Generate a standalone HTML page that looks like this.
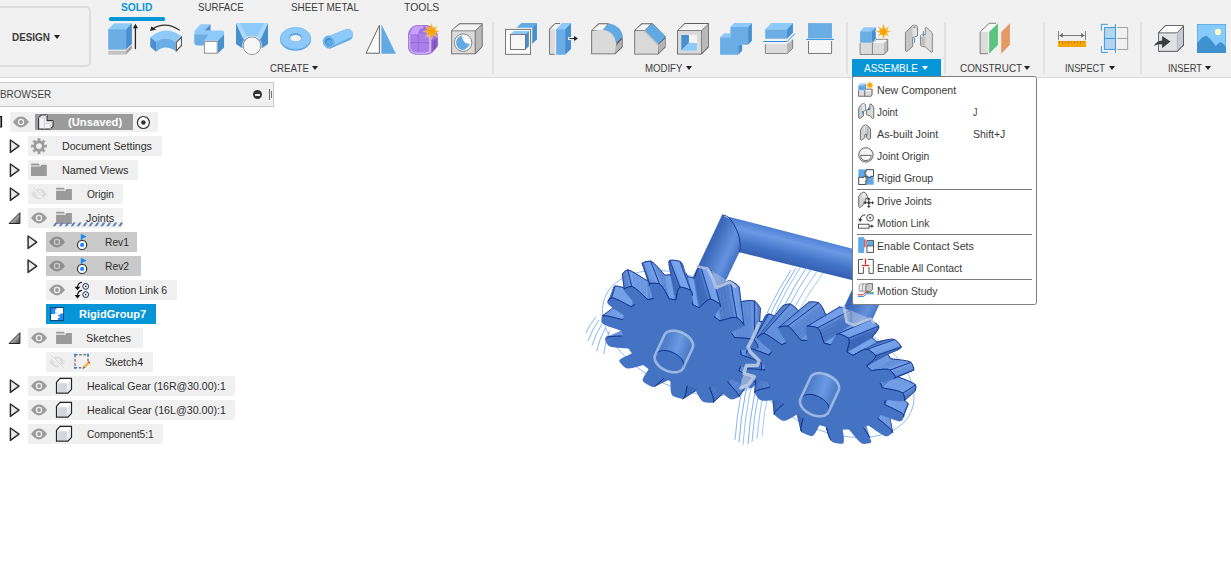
<!DOCTYPE html>
<html>
<head>
<meta charset="utf-8">
<title>Fusion</title>
<style>
html,body{margin:0;padding:0;}
body{width:1231px;height:567px;overflow:hidden;background:#fff;position:relative;font-family:"Liberation Sans",sans-serif;color:#333;}
.abs{position:absolute;}
#toolbar{position:absolute;left:0;top:0;width:1231px;height:78px;background:#f1f1f1;border-bottom:1px solid #d8d8d8;box-sizing:border-box;}
.t{position:absolute;white-space:nowrap;font-size:11px;line-height:12px;color:#3c3c3c;transform-origin:0 0;}
.tab{position:absolute;white-space:nowrap;font-size:11px;line-height:12px;color:#3c3c3c;transform-origin:0 0;}
.sep{position:absolute;top:22px;width:2px;height:52px;background:#e2e2e2;}
.arr{position:absolute;width:0;height:0;border-left:3px solid transparent;border-right:3px solid transparent;border-top:4px solid #222;}
.row{position:absolute;height:20px;background:#f0f0f0;}
.rt{position:absolute;white-space:nowrap;font-size:11px;line-height:20px;color:#2d2d2d;transform-origin:0 50%;}
.mi{position:absolute;left:877px;white-space:nowrap;font-size:11px;line-height:14px;color:#3a3a3a;transform-origin:0 50%;}
.msep{position:absolute;left:857px;width:175px;height:1px;background:#7a7a7a;}
svg{position:absolute;overflow:visible;}
/*FIT*/
#tDesign{transform:scaleX(0.9007);}
#tabSolid{transform:scaleX(0.9309);}
#tabSurface{transform:scaleX(0.8814);}
#tabSheet{transform:scaleX(0.9006);}
#tabTools{transform:scaleX(0.9489);}
#tCreate{transform:scaleX(0.8879);}
#tModify{transform:scaleX(0.8745);}
#tAssemble{transform:scaleX(0.9107);}
#tConstruct{transform:scaleX(0.8992);}
#tInspect{transform:scaleX(0.8352);}
#tInsert{transform:scaleX(0.8472);}
#tBrowser{transform:scaleX(0.9000);}
#rUnsaved{transform:scaleX(1.0191);}
#rDoc{transform:scaleX(0.9673);}
#rNamed{transform:scaleX(0.9814);}
#rOrigin{transform:scaleX(0.9203);}
#rJoints{transform:scaleX(0.9809);}
#rRev1{transform:scaleX(0.9304);}
#rRev2{transform:scaleX(0.9346);}
#rMotion{transform:scaleX(0.9490);}
#rRigid{transform:scaleX(1.0074);}
#rSketches{transform:scaleX(0.9945);}
#rSketch4{transform:scaleX(0.9561);}
#rGearR{transform:scaleX(0.9567);}
#rGearL{transform:scaleX(0.9696);}
#rComp{transform:scaleX(0.9229);}
#mNew{transform:scaleX(0.9667);}
#mJoint{transform:scaleX(0.8967);}
#mAsb{transform:scaleX(0.9718);}
#mJO{transform:scaleX(0.9381);}
#mRG{transform:scaleX(0.9557);}
#mDJ{transform:scaleX(0.9536);}
#mML{transform:scaleX(0.9314);}
#mECS{transform:scaleX(0.9661);}
#mEAC{transform:scaleX(0.9479);}
#mMS{transform:scaleX(0.9412);}
#mKJ{transform:scaleX(0.8000);}
#mKSJ{transform:scaleX(0.9517);}
/*ENDFIT*/
</style>
</head>
<body>
<!-- ===== MODEL ===== -->
<div id="model"><!--MODEL-->
<svg width="1231" height="567" viewBox="0 0 1231 567" style="left:0;top:0;">
<defs>
<linearGradient id="gStub" gradientUnits="objectBoundingBox" x1="0" y1="0.3" x2="1" y2="0.7">
<stop offset="0" stop-color="#3d6bbd"/><stop offset="0.55" stop-color="#6a9ae2"/><stop offset="1" stop-color="#3b68b8"/></linearGradient>
<linearGradient id="gShaftL" gradientUnits="userSpaceOnUse" x1="690" y1="290" x2="718" y2="303">
<stop offset="0" stop-color="#3a67b9"/><stop offset="0.6" stop-color="#6393df"/><stop offset="1" stop-color="#3d6bbf"/></linearGradient>
<linearGradient id="gShaftR" gradientUnits="userSpaceOnUse" x1="838" y1="330" x2="866" y2="343">
<stop offset="0" stop-color="#3a67b9"/><stop offset="0.6" stop-color="#6393df"/><stop offset="1" stop-color="#3d6bbf"/></linearGradient>
<linearGradient id="gBar" gradientUnits="userSpaceOnUse" x1="800" y1="233" x2="792" y2="266">
<stop offset="0" stop-color="#4a7ad0"/><stop offset="0.3" stop-color="#6a9ae3"/><stop offset="0.7" stop-color="#4171c6"/><stop offset="1" stop-color="#345fb0"/></linearGradient>
</defs>
<polygon points="664.9,336.5 722.0,215.0 732.4,220.6 739.3,234.4 740.9,245.9 739.3,252.3 693.1,349.5" fill="url(#gShaftL)"/>
<path d="M722.0,215.0 L891.4,258.8 L894.7,290.5 L739.3,252.3 C741.5,246.0 740.0,232.0 731.0,220.0 C728.0,216.5 725.0,215.0 722.0,215.0Z" fill="url(#gBar)"/>
<path d="M739.3,252.3 C741.5,246.0 740.0,232.0 731.0,220.0 C728.0,216.5 725.0,215.0 722.0,215.0" fill="none" stroke="#12388f" stroke-width="1"/>
<polygon points="810.9,378.5 859.3,274.1 887.4,287.2 839.1,391.5" fill="url(#gShaftR)"/>
<polygon points="767.2,370.4 769.0,365.9 770.0,361.2 770.5,356.2 770.3,351.1 769.5,345.8 768.0,340.4 766.0,334.9 763.3,329.5 760.0,324.1 756.2,318.7 751.8,313.5 747.0,308.4 741.7,303.4 735.9,298.8 729.8,294.3 723.4,290.2 716.7,286.4 709.7,282.9 702.6,279.9 695.3,277.2 688.0,275.0 680.7,273.2 673.4,271.8 666.2,270.9 659.2,270.5 652.4,270.6 645.8,271.1 639.6,272.1 633.7,273.6 628.2,275.6 623.1,277.9 618.6,280.7 614.5,283.9 611.0,287.4 608.1,291.3 605.8,295.6 604.0,300.1 603.0,304.8 602.5,309.8 602.7,314.9 603.5,320.2 605.0,325.6 607.0,331.1 609.7,336.5 613.0,341.9 616.8,347.3 621.2,352.5 626.0,357.6 631.3,362.6 637.1,367.2 643.2,371.7 649.6,375.8 656.3,379.6 663.3,383.1 670.4,386.1 677.7,388.8 685.0,391.0 692.3,392.8 699.6,394.2 706.8,395.1 713.8,395.5 720.6,395.4 727.2,394.9 733.4,393.9 739.3,392.4 744.8,390.4 749.9,388.1 754.4,385.3 758.5,382.1 762.0,378.6 764.9,374.7 767.2,370.4" fill="none" stroke="#6fa8f7" stroke-width="0.8"/>
<polygon points="910.7,412.4 912.5,407.9 913.5,403.2 914.0,398.2 913.8,393.1 913.0,387.8 911.5,382.4 909.5,376.9 906.8,371.5 903.5,366.1 899.7,360.7 895.3,355.5 890.5,350.4 885.2,345.4 879.4,340.8 873.3,336.3 866.9,332.2 860.2,328.4 853.2,324.9 846.1,321.9 838.8,319.2 831.5,317.0 824.2,315.2 816.9,313.8 809.7,312.9 802.7,312.5 795.9,312.6 789.3,313.1 783.1,314.1 777.2,315.6 771.7,317.6 766.6,319.9 762.1,322.7 758.0,325.9 754.5,329.4 751.6,333.3 749.3,337.6 747.5,342.1 746.5,346.8 746.0,351.8 746.2,356.9 747.0,362.2 748.5,367.6 750.5,373.1 753.2,378.5 756.5,383.9 760.3,389.3 764.7,394.5 769.5,399.6 774.8,404.6 780.6,409.2 786.7,413.7 793.1,417.8 799.8,421.6 806.8,425.1 813.9,428.1 821.2,430.8 828.5,433.0 835.8,434.8 843.1,436.2 850.3,437.1 857.3,437.5 864.1,437.4 870.7,436.9 876.9,435.9 882.8,434.4 888.3,432.4 893.4,430.1 897.9,427.3 902.0,424.1 905.5,420.6 908.4,416.7 910.7,412.4" fill="none" stroke="#6fa8f7" stroke-width="0.8"/>
<path d="M791.0,270.0 Q742.0,345 735.0,440.0" fill="none" stroke="#5b9bf5" stroke-width="0.9" opacity="0.8"/>
<path d="M795.8,268.4 Q746.0,345 739.0,442.4" fill="none" stroke="#5b9bf5" stroke-width="0.9" opacity="0.9"/>
<path d="M800.6,266.8 Q750.0,345 743.0,444.8" fill="none" stroke="#5b9bf5" stroke-width="0.9" opacity="0.7"/>
<path d="M806.6,267.2 Q755.0,345 748.0,444.2" fill="none" stroke="#5b9bf5" stroke-width="0.9" opacity="0.9"/>
<path d="M811.4,268.8 Q759.0,345 752.0,441.8" fill="none" stroke="#5b9bf5" stroke-width="0.9" opacity="0.8"/>
<path d="M817.4,270.8 Q764.0,345 757.0,438.8" fill="none" stroke="#5b9bf5" stroke-width="0.9" opacity="0.7"/>
<path d="M823.4,272.8 Q769.0,345 762.0,435.8" fill="none" stroke="#5b9bf5" stroke-width="0.9" opacity="0.6"/>
<path d="M599,320 Q592.0,329.5 588,341" fill="none" stroke="#5b9bf5" stroke-width="0.9" opacity="0.85"/>
<path d="M602,324 Q595.5,333.8 592,345.5" fill="none" stroke="#5b9bf5" stroke-width="0.9" opacity="0.85"/>
<path d="M605.4,328 Q599.5,338.5 596.7,351" fill="none" stroke="#5b9bf5" stroke-width="0.9" opacity="0.85"/>
<path d="M609.4,331 Q605.1,341.5 603.8,354" fill="none" stroke="#5b9bf5" stroke-width="0.9" opacity="0.85"/>
<path d="M596,317 Q589.5,324.0 586,333" fill="none" stroke="#5b9bf5" stroke-width="0.9" opacity="0.85"/>
<polygon points="654.5,386.4 657.0,384.6 687.2,369.1 685.7,371.4" fill="#3965b6" stroke="#3965b6" stroke-width="0.6"/>
<path d="M654.5,386.4L657.0,384.6M687.2,369.1L685.7,371.4" stroke="#0c2f8a" stroke-width="0.9" fill="none" stroke-linecap="round"/>
<polygon points="682.9,398.8 684.3,397.6 715.8,377.0 715.0,378.7" fill="#3965b6" stroke="#3965b6" stroke-width="0.6"/>
<path d="M682.9,398.8L684.3,397.6M715.8,377.0L715.0,378.7" stroke="#0c2f8a" stroke-width="0.9" fill="none" stroke-linecap="round"/>
<path d="M682.9,398.8L715.0,378.7" stroke="#0c2f8a" stroke-width="0.8" fill="none"/>
<polygon points="657.0,384.6 659.5,382.3 688.5,366.1 687.2,369.1" fill="#3965b6" stroke="#3965b6" stroke-width="0.6"/>
<path d="M657.0,384.6L659.5,382.3M688.5,366.1L687.2,369.1" stroke="#0c2f8a" stroke-width="0.9" fill="none" stroke-linecap="round"/>
<polygon points="684.3,397.6 685.3,395.0 715.6,374.0 715.8,377.0" fill="#3965b6" stroke="#3965b6" stroke-width="0.6"/>
<path d="M684.3,397.6L685.3,395.0M715.6,374.0L715.8,377.0" stroke="#0c2f8a" stroke-width="0.9" fill="none" stroke-linecap="round"/>
<polygon points="659.5,382.3 661.7,380.1 689.5,363.2 688.5,366.1" fill="#3965b6" stroke="#3965b6" stroke-width="0.6"/>
<path d="M659.5,382.3L661.7,380.1M689.5,363.2L688.5,366.1" stroke="#0c2f8a" stroke-width="0.9" fill="none" stroke-linecap="round"/>
<polygon points="685.3,395.0 686.0,391.7 715.0,370.4 715.6,374.0" fill="#3965b6" stroke="#3965b6" stroke-width="0.6"/>
<path d="M685.3,395.0L686.0,391.7M715.0,370.4L715.6,374.0" stroke="#0c2f8a" stroke-width="0.9" fill="none" stroke-linecap="round"/>
<polygon points="661.7,380.1 663.2,378.6 690.3,361.3 689.5,363.2" fill="#3965b6" stroke="#3965b6" stroke-width="0.6"/>
<path d="M661.7,380.1L663.2,378.6M690.3,361.3L689.5,363.2" stroke="#0c2f8a" stroke-width="0.9" fill="none" stroke-linecap="round"/>
<polygon points="686.0,391.7 686.5,388.7 714.2,367.1 715.0,370.4" fill="#3a66b7" stroke="#3a66b7" stroke-width="0.6"/>
<path d="M686.0,391.7L686.5,388.7M714.2,367.1L715.0,370.4" stroke="#0c2f8a" stroke-width="0.9" fill="none" stroke-linecap="round"/>
<polygon points="686.5,388.7 686.8,386.7 713.7,364.9 714.2,367.1" fill="#3a66b7" stroke="#3a66b7" stroke-width="0.6"/>
<path d="M686.5,388.7L686.8,386.7M713.7,364.9L714.2,367.1" stroke="#0c2f8a" stroke-width="0.9" fill="none" stroke-linecap="round"/>
<polygon points="686.8,386.7 687.5,386.1 714.0,364.1 713.7,364.9" fill="#3965b6" stroke="#3965b6" stroke-width="0.6"/>
<path d="M686.8,386.7L687.5,386.1M714.0,364.1L713.7,364.9" stroke="#0c2f8a" stroke-width="0.9" fill="none" stroke-linecap="round"/>
<polygon points="713.3,402.3 713.7,400.5 742.2,373.9 742.5,375.9" fill="#3965b6" stroke="#3965b6" stroke-width="0.6"/>
<path d="M713.3,402.3L713.7,400.5M742.2,373.9L742.5,375.9" stroke="#0c2f8a" stroke-width="0.9" fill="none" stroke-linecap="round"/>
<path d="M713.3,402.3L742.5,375.9" stroke="#0c2f8a" stroke-width="0.8" fill="none"/>
<polygon points="713.7,400.5 713.1,397.4 740.5,370.7 742.2,373.9" fill="#436fbe" stroke="#436fbe" stroke-width="0.6"/>
<path d="M713.7,400.5L713.1,397.4M740.5,370.7L742.2,373.9" stroke="#0c2f8a" stroke-width="0.9" fill="none" stroke-linecap="round"/>
<polygon points="610.3,336.6 606.7,337.2 625.6,329.2 628.6,327.8" fill="#608cd7" stroke="#608cd7" stroke-width="0.6"/>
<path d="M610.3,336.6L606.7,337.2M625.6,329.2L628.6,327.8" stroke="#0c2f8a" stroke-width="0.9" fill="none" stroke-linecap="round"/>
<polygon points="713.1,397.4 711.8,393.7 738.0,367.1 740.5,370.7" fill="#4773c2" stroke="#4773c2" stroke-width="0.6"/>
<path d="M713.1,397.4L711.8,393.7M738.0,367.1L740.5,370.7" stroke="#0c2f8a" stroke-width="0.9" fill="none" stroke-linecap="round"/>
<polygon points="614.9,336.3 610.3,336.6 628.6,327.8 632.3,326.6" fill="#6490db" stroke="#6490db" stroke-width="0.6"/>
<path d="M614.9,336.3L610.3,336.6M628.6,327.8L632.3,326.6" stroke="#0c2f8a" stroke-width="0.9" fill="none" stroke-linecap="round"/>
<polygon points="711.8,393.7 710.5,390.3 735.6,363.8 738.0,367.1" fill="#4975c4" stroke="#4975c4" stroke-width="0.6"/>
<path d="M711.8,393.7L710.5,390.3M735.6,363.8L738.0,367.1" stroke="#0c2f8a" stroke-width="0.9" fill="none" stroke-linecap="round"/>
<polygon points="619.0,336.2 614.9,336.3 632.3,326.6 635.9,325.5" fill="#6692dd" stroke="#6692dd" stroke-width="0.6"/>
<path d="M619.0,336.2L614.9,336.3M632.3,326.6L635.9,325.5" stroke="#0c2f8a" stroke-width="0.9" fill="none" stroke-linecap="round"/>
<polygon points="710.5,390.3 709.7,388.0 734.0,361.5 735.6,363.8" fill="#4975c4" stroke="#4975c4" stroke-width="0.6"/>
<path d="M710.5,390.3L709.7,388.0M734.0,361.5L735.6,363.8" stroke="#0c2f8a" stroke-width="0.9" fill="none" stroke-linecap="round"/>
<polygon points="709.7,388.0 709.8,387.2 733.8,360.6 734.0,361.5" fill="#3b67b8" stroke="#3b67b8" stroke-width="0.6"/>
<path d="M709.7,388.0L709.8,387.2M733.8,360.6L734.0,361.5" stroke="#0c2f8a" stroke-width="0.9" fill="none" stroke-linecap="round"/>
<polygon points="621.9,336.1 619.0,336.2 635.9,325.5 638.3,324.8" fill="#6692dc" stroke="#6692dc" stroke-width="0.6"/>
<path d="M621.9,336.1L619.0,336.2M635.9,325.5L638.3,324.8" stroke="#0c2f8a" stroke-width="0.9" fill="none" stroke-linecap="round"/>
<polygon points="738.8,396.7 738.2,394.6 761.1,362.4 762.4,364.5" fill="#4773c2" stroke="#4773c2" stroke-width="0.6"/>
<path d="M738.8,396.7L738.2,394.6M761.1,362.4L762.4,364.5" stroke="#0c2f8a" stroke-width="0.9" fill="none" stroke-linecap="round"/>
<path d="M738.8,396.7L762.4,364.5" stroke="#0c2f8a" stroke-width="0.8" fill="none"/>
<polygon points="738.2,394.6 736.0,391.5 758.0,359.6 761.1,362.4" fill="#537fcc" stroke="#537fcc" stroke-width="0.6"/>
<path d="M738.2,394.6L736.0,391.5M758.0,359.6L761.1,362.4" stroke="#0c2f8a" stroke-width="0.9" fill="none" stroke-linecap="round"/>
<polygon points="604.8,315.7 602.3,315.9 613.6,307.5 615.7,306.7" fill="#638fda" stroke="#638fda" stroke-width="0.6"/>
<path d="M604.8,315.7L602.3,315.9M613.6,307.5L615.7,306.7" stroke="#0c2f8a" stroke-width="0.9" fill="none" stroke-linecap="round"/>
<path d="M602.3,315.9L613.6,307.5" stroke="#0c2f8a" stroke-width="0.8" fill="none"/>
<polygon points="736.0,391.5 733.0,388.0 754.1,356.5 758.0,359.6" fill="#5783d0" stroke="#5783d0" stroke-width="0.6"/>
<path d="M736.0,391.5L733.0,388.0M754.1,356.5L758.0,359.6" stroke="#0c2f8a" stroke-width="0.9" fill="none" stroke-linecap="round"/>
<polygon points="609.0,316.4 604.8,315.7 615.7,306.7 619.6,306.5" fill="#6d99e3" stroke="#6d99e3" stroke-width="0.6"/>
<path d="M609.0,316.4L604.8,315.7M615.7,306.7L619.6,306.5" stroke="#0c2f8a" stroke-width="0.9" fill="none" stroke-linecap="round"/>
<polygon points="733.0,388.0 730.1,384.8 750.4,353.7 754.1,356.5" fill="#5985d2" stroke="#5985d2" stroke-width="0.6"/>
<path d="M733.0,388.0L730.1,384.8M750.4,353.7L754.1,356.5" stroke="#0c2f8a" stroke-width="0.9" fill="none" stroke-linecap="round"/>
<polygon points="613.9,317.5 609.0,316.4 619.6,306.5 624.3,306.7" fill="#709ce5" stroke="#709ce5" stroke-width="0.6"/>
<path d="M613.9,317.5L609.0,316.4M619.6,306.5L624.3,306.7" stroke="#0c2f8a" stroke-width="0.9" fill="none" stroke-linecap="round"/>
<polygon points="730.1,384.8 728.2,382.6 747.9,351.7 750.4,353.7" fill="#5a86d2" stroke="#5a86d2" stroke-width="0.6"/>
<path d="M730.1,384.8L728.2,382.6M747.9,351.7L750.4,353.7" stroke="#0c2f8a" stroke-width="0.9" fill="none" stroke-linecap="round"/>
<polygon points="728.2,382.6 727.9,381.6 747.2,350.8 747.9,351.7" fill="#4c78c6" stroke="#4c78c6" stroke-width="0.6"/>
<path d="M728.2,382.6L727.9,381.6M747.2,350.8L747.9,351.7" stroke="#0c2f8a" stroke-width="0.9" fill="none" stroke-linecap="round"/>
<polygon points="618.5,318.7 613.9,317.5 624.3,306.7 628.7,307.0" fill="#729ee6" stroke="#729ee6" stroke-width="0.6"/>
<path d="M618.5,318.7L613.9,317.5M624.3,306.7L628.7,307.0" stroke="#0c2f8a" stroke-width="0.9" fill="none" stroke-linecap="round"/>
<polygon points="621.6,319.5 618.5,318.7 628.7,307.0 631.7,307.2" fill="#729ee7" stroke="#729ee7" stroke-width="0.6"/>
<path d="M621.6,319.5L618.5,318.7M628.7,307.0L631.7,307.2" stroke="#0c2f8a" stroke-width="0.9" fill="none" stroke-linecap="round"/>
<polygon points="622.7,319.4 621.6,319.5 631.7,307.2 632.6,306.9" fill="#6692dd" stroke="#6692dd" stroke-width="0.6"/>
<path d="M622.7,319.4L621.6,319.5M631.7,307.2L632.6,306.9" stroke="#0c2f8a" stroke-width="0.9" fill="none" stroke-linecap="round"/>
<polygon points="608.9,300.1 607.9,301.4 612.9,290.8 613.3,289.2" fill="#406cbc" stroke="#406cbc" stroke-width="0.6"/>
<path d="M608.9,300.1L607.9,301.4M612.9,290.8L613.3,289.2" stroke="#0c2f8a" stroke-width="0.9" fill="none" stroke-linecap="round"/>
<polygon points="755.1,384.6 755.7,382.9 771.7,346.3 771.9,348.2" fill="#3a66b7" stroke="#3a66b7" stroke-width="0.6"/>
<path d="M755.1,384.6L755.7,382.9M771.7,346.3L771.9,348.2" stroke="#0c2f8a" stroke-width="0.9" fill="none" stroke-linecap="round"/>
<path d="M755.7,382.9L771.7,346.3" stroke="#0c2f8a" stroke-width="0.8" fill="none"/>
<polygon points="610.0,298.8 608.9,300.1 613.3,289.2 613.8,287.6" fill="#416dbd" stroke="#416dbd" stroke-width="0.6"/>
<path d="M610.0,298.8L608.9,300.1M613.3,289.2L613.8,287.6" stroke="#0c2f8a" stroke-width="0.9" fill="none" stroke-linecap="round"/>
<polygon points="755.7,382.9 754.0,380.9 769.5,344.5 771.7,346.3" fill="#5884d1" stroke="#5884d1" stroke-width="0.6"/>
<path d="M755.7,382.9L754.0,380.9M769.5,344.5L771.7,346.3" stroke="#0c2f8a" stroke-width="0.9" fill="none" stroke-linecap="round"/>
<path d="M755.7,382.9L771.7,346.3" stroke="#0c2f8a" stroke-width="0.8" fill="none"/>
<polygon points="754.0,380.9 750.6,378.3 765.5,342.4 769.5,344.5" fill="#5f8bd7" stroke="#5f8bd7" stroke-width="0.6"/>
<path d="M754.0,380.9L750.6,378.3M765.5,342.4L769.5,344.5" stroke="#0c2f8a" stroke-width="0.9" fill="none" stroke-linecap="round"/>
<polygon points="750.6,378.3 746.3,375.4 760.7,340.2 765.5,342.4" fill="#618dd9" stroke="#618dd9" stroke-width="0.6"/>
<path d="M750.6,378.3L746.3,375.4M760.7,340.2L765.5,342.4" stroke="#0c2f8a" stroke-width="0.9" fill="none" stroke-linecap="round"/>
<polygon points="611.7,297.8 610.0,298.8 613.8,287.6 614.9,286.1" fill="#4e7ac8" stroke="#4e7ac8" stroke-width="0.6"/>
<path d="M611.7,297.8L610.0,298.8M613.8,287.6L614.9,286.1" stroke="#0c2f8a" stroke-width="0.9" fill="none" stroke-linecap="round"/>
<path d="M611.7,297.8L614.9,286.1" stroke="#0c2f8a" stroke-width="0.8" fill="none"/>
<polygon points="746.3,375.4 742.4,372.8 756.3,338.4 760.7,340.2" fill="#638fda" stroke="#638fda" stroke-width="0.6"/>
<path d="M746.3,375.4L742.4,372.8M756.3,338.4L760.7,340.2" stroke="#0c2f8a" stroke-width="0.9" fill="none" stroke-linecap="round"/>
<polygon points="742.4,372.8 739.6,371.1 753.3,337.1 756.3,338.4" fill="#6591db" stroke="#6591db" stroke-width="0.6"/>
<path d="M742.4,372.8L739.6,371.1M753.3,337.1L756.3,338.4" stroke="#0c2f8a" stroke-width="0.9" fill="none" stroke-linecap="round"/>
<polygon points="739.6,371.1 738.9,370.2 752.3,336.3 753.3,337.1" fill="#5d89d5" stroke="#5d89d5" stroke-width="0.6"/>
<path d="M739.6,371.1L738.9,370.2M752.3,336.3L753.3,337.1" stroke="#0c2f8a" stroke-width="0.9" fill="none" stroke-linecap="round"/>
<polygon points="614.5,298.4 611.7,297.8 614.9,286.1 617.5,286.2" fill="#709ce5" stroke="#709ce5" stroke-width="0.6"/>
<path d="M614.5,298.4L611.7,297.8M614.9,286.1L617.5,286.2" stroke="#0c2f8a" stroke-width="0.9" fill="none" stroke-linecap="round"/>
<path d="M611.7,297.8L614.9,286.1" stroke="#0c2f8a" stroke-width="0.8" fill="none"/>
<polygon points="738.9,370.2 739.7,368.4 752.3,334.2 752.3,336.3" fill="#3965b6" stroke="#3965b6" stroke-width="0.6"/>
<path d="M738.9,370.2L739.7,368.4M752.3,334.2L752.3,336.3" stroke="#0c2f8a" stroke-width="0.9" fill="none" stroke-linecap="round"/>
<polygon points="618.6,300.2 614.5,298.4 617.5,286.2 621.7,287.2" fill="#739fe7" stroke="#739fe7" stroke-width="0.6"/>
<path d="M618.6,300.2L614.5,298.4M617.5,286.2L621.7,287.2" stroke="#0c2f8a" stroke-width="0.9" fill="none" stroke-linecap="round"/>
<polygon points="623.3,302.6 618.6,300.2 621.7,287.2 626.7,288.8" fill="#739fe8" stroke="#739fe8" stroke-width="0.6"/>
<path d="M623.3,302.6L618.6,300.2M621.7,287.2L626.7,288.8" stroke="#0c2f8a" stroke-width="0.9" fill="none" stroke-linecap="round"/>
<polygon points="627.5,304.9 623.3,302.6 626.7,288.8 631.2,290.4" fill="#74a0e8" stroke="#74a0e8" stroke-width="0.6"/>
<path d="M627.5,304.9L623.3,302.6M626.7,288.8L631.2,290.4" stroke="#0c2f8a" stroke-width="0.9" fill="none" stroke-linecap="round"/>
<polygon points="630.4,306.4 627.5,304.9 631.2,290.4 634.3,291.4" fill="#74a0e8" stroke="#74a0e8" stroke-width="0.6"/>
<path d="M630.4,306.4L627.5,304.9M631.2,290.4L634.3,291.4" stroke="#0c2f8a" stroke-width="0.9" fill="none" stroke-linecap="round"/>
<polygon points="631.6,306.7 630.4,306.4 634.3,291.4 635.4,291.5" fill="#739fe7" stroke="#739fe7" stroke-width="0.6"/>
<path d="M631.6,306.7L630.4,306.4M634.3,291.4L635.4,291.5" stroke="#0c2f8a" stroke-width="0.9" fill="none" stroke-linecap="round"/>
<polygon points="739.7,368.4 740.3,366.6 752.2,332.1 752.3,334.2" fill="#3a66b8" stroke="#3a66b8" stroke-width="0.6"/>
<path d="M739.7,368.4L740.3,366.6M752.2,332.1L752.3,334.2" stroke="#0c2f8a" stroke-width="0.9" fill="none" stroke-linecap="round"/>
<polygon points="633.3,305.5 631.6,306.7 635.4,291.5 636.4,289.8" fill="#4975c4" stroke="#4975c4" stroke-width="0.6"/>
<path d="M633.3,305.5L631.6,306.7M635.4,291.5L636.4,289.8" stroke="#0c2f8a" stroke-width="0.9" fill="none" stroke-linecap="round"/>
<polygon points="635.1,304.4 633.3,305.5 636.4,289.8 637.6,288.2" fill="#4c78c6" stroke="#4c78c6" stroke-width="0.6"/>
<path d="M635.1,304.4L633.3,305.5M636.4,289.8L637.6,288.2" stroke="#0c2f8a" stroke-width="0.9" fill="none" stroke-linecap="round"/>
<polygon points="760.7,370.1 761.5,368.5 771.2,329.7 771.1,331.6" fill="#3965b6" stroke="#3965b6" stroke-width="0.6"/>
<path d="M760.7,370.1L761.5,368.5M771.2,329.7L771.1,331.6" stroke="#0c2f8a" stroke-width="0.9" fill="none" stroke-linecap="round"/>
<path d="M760.7,370.1L771.1,331.6" stroke="#0c2f8a" stroke-width="0.8" fill="none"/>
<polygon points="761.5,368.5 761.6,366.8 770.7,327.8 771.2,329.7" fill="#416dbd" stroke="#416dbd" stroke-width="0.6"/>
<path d="M761.5,368.5L761.6,366.8M770.7,327.8L771.2,329.7" stroke="#0c2f8a" stroke-width="0.9" fill="none" stroke-linecap="round"/>
<polygon points="625.7,288.2 624.2,289.3 622.4,274.5 623.2,273.0" fill="#4773c2" stroke="#4773c2" stroke-width="0.6"/>
<path d="M625.7,288.2L624.2,289.3M622.4,274.5L623.2,273.0" stroke="#0c2f8a" stroke-width="0.9" fill="none" stroke-linecap="round"/>
<path d="M624.2,289.3L622.4,274.5" stroke="#0c2f8a" stroke-width="0.8" fill="none"/>
<polygon points="742.2,355.3 741.1,354.6 748.3,319.2 749.5,319.7" fill="#6995df" stroke="#6995df" stroke-width="0.6"/>
<path d="M742.2,355.3L741.1,354.6M748.3,319.2L749.5,319.7" stroke="#0c2f8a" stroke-width="0.9" fill="none" stroke-linecap="round"/>
<polygon points="745.3,356.4 742.2,355.3 749.5,319.7 752.6,320.2" fill="#6692dc" stroke="#6692dc" stroke-width="0.6"/>
<path d="M745.3,356.4L742.2,355.3M749.5,319.7L752.6,320.2" stroke="#0c2f8a" stroke-width="0.9" fill="none" stroke-linecap="round"/>
<polygon points="761.6,366.8 761.7,365.1 770.1,326.0 770.7,327.8" fill="#436fbf" stroke="#436fbf" stroke-width="0.6"/>
<path d="M761.6,366.8L761.7,365.1M770.1,326.0L770.7,327.8" stroke="#0c2f8a" stroke-width="0.9" fill="none" stroke-linecap="round"/>
<polygon points="741.1,354.6 740.8,352.5 747.2,317.0 748.3,319.2" fill="#4b77c5" stroke="#4b77c5" stroke-width="0.6"/>
<path d="M741.1,354.6L740.8,352.5M747.2,317.0L748.3,319.2" stroke="#0c2f8a" stroke-width="0.9" fill="none" stroke-linecap="round"/>
<polygon points="749.8,357.9 745.3,356.4 752.6,320.2 757.0,320.8" fill="#6490db" stroke="#6490db" stroke-width="0.6"/>
<path d="M749.8,357.9L745.3,356.4M752.6,320.2L757.0,320.8" stroke="#0c2f8a" stroke-width="0.9" fill="none" stroke-linecap="round"/>
<polygon points="627.5,287.5 625.7,288.2 623.2,273.0 624.5,271.8" fill="#5581ce" stroke="#5581ce" stroke-width="0.6"/>
<path d="M627.5,287.5L625.7,288.2M623.2,273.0L624.5,271.8" stroke="#0c2f8a" stroke-width="0.9" fill="none" stroke-linecap="round"/>
<polygon points="648.1,299.6 647.0,298.9 645.7,279.9 646.9,280.3" fill="#75a1e9" stroke="#75a1e9" stroke-width="0.6"/>
<path d="M648.1,299.6L647.0,298.9M645.7,279.9L646.9,280.3" stroke="#0c2f8a" stroke-width="0.9" fill="none" stroke-linecap="round"/>
<polygon points="761.7,365.1 761.2,363.1 768.9,324.0 770.1,326.0" fill="#4d79c7" stroke="#4d79c7" stroke-width="0.6"/>
<path d="M761.7,365.1L761.2,363.1M768.9,324.0L770.1,326.0" stroke="#0c2f8a" stroke-width="0.9" fill="none" stroke-linecap="round"/>
<path d="M761.2,363.1L768.9,324.0" stroke="#0c2f8a" stroke-width="0.8" fill="none"/>
<polygon points="754.7,359.6 749.8,357.9 757.0,320.8 761.9,321.7" fill="#638fda" stroke="#638fda" stroke-width="0.6"/>
<path d="M754.7,359.6L749.8,357.9M757.0,320.8L761.9,321.7" stroke="#0c2f8a" stroke-width="0.9" fill="none" stroke-linecap="round"/>
<polygon points="647.0,298.9 644.7,296.9 643.0,278.2 645.7,279.9" fill="#6c98e1" stroke="#6c98e1" stroke-width="0.6"/>
<path d="M647.0,298.9L644.7,296.9M643.0,278.2L645.7,279.9" stroke="#0c2f8a" stroke-width="0.9" fill="none" stroke-linecap="round"/>
<polygon points="740.8,352.5 740.3,350.3 745.9,314.8 747.2,317.0" fill="#4e7ac8" stroke="#4e7ac8" stroke-width="0.6"/>
<path d="M740.8,352.5L740.3,350.3M745.9,314.8L747.2,317.0" stroke="#0c2f8a" stroke-width="0.9" fill="none" stroke-linecap="round"/>
<polygon points="650.6,299.1 648.1,299.6 646.9,280.3 648.9,279.3" fill="#5f8bd7" stroke="#5f8bd7" stroke-width="0.6"/>
<path d="M650.6,299.1L648.1,299.6M646.9,280.3L648.9,279.3" stroke="#0c2f8a" stroke-width="0.9" fill="none" stroke-linecap="round"/>
<polygon points="758.8,361.4 754.7,359.6 761.9,321.7 766.2,322.7" fill="#638fda" stroke="#638fda" stroke-width="0.6"/>
<path d="M758.8,361.4L754.7,359.6M761.9,321.7L766.2,322.7" stroke="#0c2f8a" stroke-width="0.9" fill="none" stroke-linecap="round"/>
<polygon points="761.2,363.1 758.8,361.4 766.2,322.7 768.9,324.0" fill="#6490da" stroke="#6490da" stroke-width="0.6"/>
<path d="M761.2,363.1L758.8,361.4M766.2,322.7L768.9,324.0" stroke="#0c2f8a" stroke-width="0.9" fill="none" stroke-linecap="round"/>
<path d="M761.2,363.1L768.9,324.0" stroke="#0c2f8a" stroke-width="0.8" fill="none"/>
<polygon points="629.4,286.8 627.5,287.5 624.5,271.8 625.9,270.7" fill="#5783d0" stroke="#5783d0" stroke-width="0.6"/>
<path d="M629.4,286.8L627.5,287.5M624.5,271.8L625.9,270.7" stroke="#0c2f8a" stroke-width="0.9" fill="none" stroke-linecap="round"/>
<polygon points="644.7,296.9 641.5,293.8 639.0,275.6 643.0,278.2" fill="#6b97e1" stroke="#6b97e1" stroke-width="0.6"/>
<path d="M644.7,296.9L641.5,293.8M639.0,275.6L643.0,278.2" stroke="#0c2f8a" stroke-width="0.9" fill="none" stroke-linecap="round"/>
<polygon points="641.5,293.8 637.8,290.5 634.6,272.9 639.0,275.6" fill="#6c98e1" stroke="#6c98e1" stroke-width="0.6"/>
<path d="M641.5,293.8L637.8,290.5M634.6,272.9L639.0,275.6" stroke="#0c2f8a" stroke-width="0.9" fill="none" stroke-linecap="round"/>
<polygon points="653.2,298.8 650.6,299.1 648.9,279.3 651.0,278.4" fill="#628ed9" stroke="#628ed9" stroke-width="0.6"/>
<path d="M653.2,298.8L650.6,299.1M648.9,279.3L651.0,278.4" stroke="#0c2f8a" stroke-width="0.9" fill="none" stroke-linecap="round"/>
<polygon points="631.8,286.5 629.4,286.8 625.9,270.7 627.9,269.9" fill="#638fda" stroke="#638fda" stroke-width="0.6"/>
<path d="M631.8,286.5L629.4,286.8M625.9,270.7L627.9,269.9" stroke="#0c2f8a" stroke-width="0.9" fill="none" stroke-linecap="round"/>
<path d="M631.8,286.5L627.9,269.9" stroke="#0c2f8a" stroke-width="0.8" fill="none"/>
<polygon points="637.8,290.5 634.5,287.8 630.7,270.8 634.6,272.9" fill="#6e9ae3" stroke="#6e9ae3" stroke-width="0.6"/>
<path d="M637.8,290.5L634.5,287.8M630.7,270.8L634.6,272.9" stroke="#0c2f8a" stroke-width="0.9" fill="none" stroke-linecap="round"/>
<polygon points="634.5,287.8 631.8,286.5 627.9,269.9 630.7,270.8" fill="#739fe8" stroke="#739fe8" stroke-width="0.6"/>
<path d="M634.5,287.8L631.8,286.5M627.9,269.9L630.7,270.8" stroke="#0c2f8a" stroke-width="0.9" fill="none" stroke-linecap="round"/>
<path d="M631.8,286.5L627.9,269.9" stroke="#0c2f8a" stroke-width="0.8" fill="none"/>
<polygon points="653.3,298.0 653.2,298.8 651.0,278.4 650.8,277.5" fill="#3965b6" stroke="#3965b6" stroke-width="0.6"/>
<path d="M653.3,298.0L653.2,298.8M651.0,278.4L650.8,277.5" stroke="#0c2f8a" stroke-width="0.9" fill="none" stroke-linecap="round"/>
<polygon points="735.6,337.6 734.3,337.2 735.7,302.1 737.0,302.3" fill="#6b97e1" stroke="#6b97e1" stroke-width="0.6"/>
<path d="M735.6,337.6L734.3,337.2M735.7,302.1L737.0,302.3" stroke="#0c2f8a" stroke-width="0.9" fill="none" stroke-linecap="round"/>
<polygon points="734.3,337.2 732.9,335.1 733.7,300.1 735.7,302.1" fill="#608cd8" stroke="#608cd8" stroke-width="0.6"/>
<path d="M734.3,337.2L732.9,335.1M733.7,300.1L735.7,302.1" stroke="#0c2f8a" stroke-width="0.9" fill="none" stroke-linecap="round"/>
<polygon points="738.5,337.8 735.6,337.6 737.0,302.3 739.6,301.9" fill="#5e8ad5" stroke="#5e8ad5" stroke-width="0.6"/>
<path d="M738.5,337.8L735.6,337.6M737.0,302.3L739.6,301.9" stroke="#0c2f8a" stroke-width="0.9" fill="none" stroke-linecap="round"/>
<polygon points="669.7,299.0 668.8,298.2 664.3,274.5 665.4,275.2" fill="#6d99e2" stroke="#6d99e2" stroke-width="0.6"/>
<path d="M669.7,299.0L668.8,298.2M664.3,274.5L665.4,275.2" stroke="#0c2f8a" stroke-width="0.9" fill="none" stroke-linecap="round"/>
<polygon points="732.9,335.1 731.3,332.9 731.5,298.2 733.7,300.1" fill="#638fda" stroke="#638fda" stroke-width="0.6"/>
<path d="M732.9,335.1L731.3,332.9M731.5,298.2L733.7,300.1" stroke="#0c2f8a" stroke-width="0.9" fill="none" stroke-linecap="round"/>
<polygon points="672.6,299.4 669.7,299.0 665.4,275.2 668.0,275.0" fill="#709ce5" stroke="#709ce5" stroke-width="0.6"/>
<path d="M672.6,299.4L669.7,299.0M665.4,275.2L668.0,275.0" stroke="#0c2f8a" stroke-width="0.9" fill="none" stroke-linecap="round"/>
<polygon points="668.8,298.2 667.6,295.9 662.3,272.3 664.3,274.5" fill="#5c88d4" stroke="#5c88d4" stroke-width="0.6"/>
<path d="M668.8,298.2L667.6,295.9M662.3,272.3L664.3,274.5" stroke="#0c2f8a" stroke-width="0.9" fill="none" stroke-linecap="round"/>
<polygon points="742.9,338.1 738.5,337.8 739.6,301.9 743.5,301.2" fill="#5c88d4" stroke="#5c88d4" stroke-width="0.6"/>
<path d="M742.9,338.1L738.5,337.8M739.6,301.9L743.5,301.2" stroke="#0c2f8a" stroke-width="0.9" fill="none" stroke-linecap="round"/>
<polygon points="675.5,299.9 672.6,299.4 668.0,275.0 670.7,274.9" fill="#729ee6" stroke="#729ee6" stroke-width="0.6"/>
<path d="M675.5,299.9L672.6,299.4M668.0,275.0L670.7,274.9" stroke="#0c2f8a" stroke-width="0.9" fill="none" stroke-linecap="round"/>
<polygon points="758.1,347.9 757.8,345.9 759.4,306.4 760.4,308.4" fill="#4b77c6" stroke="#4b77c6" stroke-width="0.6"/>
<path d="M758.1,347.9L757.8,345.9M759.4,306.4L760.4,308.4" stroke="#0c2f8a" stroke-width="0.9" fill="none" stroke-linecap="round"/>
<path d="M758.1,347.9L760.4,308.4" stroke="#0c2f8a" stroke-width="0.8" fill="none"/>
<polygon points="649.7,283.7 649.3,285.5 642.6,265.2 642.3,263.2" fill="#3965b6" stroke="#3965b6" stroke-width="0.6"/>
<path d="M649.7,283.7L649.3,285.5M642.6,265.2L642.3,263.2" stroke="#0c2f8a" stroke-width="0.9" fill="none" stroke-linecap="round"/>
<path d="M649.7,283.7L642.3,263.2" stroke="#0c2f8a" stroke-width="0.8" fill="none"/>
<polygon points="676.2,299.3 675.5,299.9 670.7,274.9 671.0,274.2" fill="#3f6bbc" stroke="#3f6bbc" stroke-width="0.6"/>
<path d="M676.2,299.3L675.5,299.9M670.7,274.9L671.0,274.2" stroke="#0c2f8a" stroke-width="0.9" fill="none" stroke-linecap="round"/>
<polygon points="667.6,295.9 665.8,292.5 659.5,269.1 662.3,272.3" fill="#5b87d3" stroke="#5b87d3" stroke-width="0.6"/>
<path d="M667.6,295.9L665.8,292.5M659.5,269.1L662.3,272.3" stroke="#0c2f8a" stroke-width="0.9" fill="none" stroke-linecap="round"/>
<polygon points="747.7,338.5 742.9,338.1 743.5,301.2 747.8,300.6" fill="#5c88d4" stroke="#5c88d4" stroke-width="0.6"/>
<path d="M747.7,338.5L742.9,338.1M743.5,301.2L747.8,300.6" stroke="#0c2f8a" stroke-width="0.9" fill="none" stroke-linecap="round"/>
<polygon points="757.8,345.9 757.0,344.0 757.9,304.6 759.4,306.4" fill="#5783cf" stroke="#5783cf" stroke-width="0.6"/>
<path d="M757.8,345.9L757.0,344.0M757.9,304.6L759.4,306.4" stroke="#0c2f8a" stroke-width="0.9" fill="none" stroke-linecap="round"/>
<polygon points="676.5,297.3 676.2,299.3 671.0,274.2 670.6,271.9" fill="#3965b6" stroke="#3965b6" stroke-width="0.6"/>
<path d="M676.5,297.3L676.2,299.3M671.0,274.2L670.6,271.9" stroke="#0c2f8a" stroke-width="0.9" fill="none" stroke-linecap="round"/>
<polygon points="652.0,283.3 649.7,283.7 642.3,263.2 644.1,262.2" fill="#5d89d5" stroke="#5d89d5" stroke-width="0.6"/>
<path d="M652.0,283.3L649.7,283.7M642.3,263.2L644.1,262.2" stroke="#0c2f8a" stroke-width="0.9" fill="none" stroke-linecap="round"/>
<path d="M649.7,283.7L642.3,263.2" stroke="#0c2f8a" stroke-width="0.8" fill="none"/>
<polygon points="757.0,344.0 756.1,342.2 756.4,302.8 757.9,304.6" fill="#5884d1" stroke="#5884d1" stroke-width="0.6"/>
<path d="M757.0,344.0L756.1,342.2M756.4,302.8L757.9,304.6" stroke="#0c2f8a" stroke-width="0.9" fill="none" stroke-linecap="round"/>
<polygon points="665.8,292.5 663.7,288.8 656.3,265.6 659.5,269.1" fill="#5c88d4" stroke="#5c88d4" stroke-width="0.6"/>
<path d="M665.8,292.5L663.7,288.8M656.3,265.6L659.5,269.1" stroke="#0c2f8a" stroke-width="0.9" fill="none" stroke-linecap="round"/>
<polygon points="751.9,339.1 747.7,338.5 747.8,300.6 751.6,300.5" fill="#5e8ad6" stroke="#5e8ad6" stroke-width="0.6"/>
<path d="M751.9,339.1L747.7,338.5M747.8,300.6L751.6,300.5" stroke="#0c2f8a" stroke-width="0.9" fill="none" stroke-linecap="round"/>
<polygon points="654.4,283.3 652.0,283.3 644.1,262.2 646.1,261.7" fill="#6995df" stroke="#6995df" stroke-width="0.6"/>
<path d="M654.4,283.3L652.0,283.3M644.1,262.2L646.1,261.7" stroke="#0c2f8a" stroke-width="0.9" fill="none" stroke-linecap="round"/>
<polygon points="756.1,342.2 754.6,340.2 754.4,301.0 756.4,302.8" fill="#628ed9" stroke="#628ed9" stroke-width="0.6"/>
<path d="M756.1,342.2L754.6,340.2M754.4,301.0L756.4,302.8" stroke="#0c2f8a" stroke-width="0.9" fill="none" stroke-linecap="round"/>
<path d="M754.6,340.2L754.4,301.0" stroke="#0c2f8a" stroke-width="0.8" fill="none"/>
<polygon points="719.5,320.7 717.1,318.9 713.9,286.2 716.6,287.7" fill="#719de6" stroke="#719de6" stroke-width="0.6"/>
<path d="M719.5,320.7L717.1,318.9M713.9,286.2L716.6,287.7" stroke="#0c2f8a" stroke-width="0.9" fill="none" stroke-linecap="round"/>
<polygon points="720.7,320.8 719.5,320.7 716.6,287.7 717.7,287.6" fill="#628ed9" stroke="#628ed9" stroke-width="0.6"/>
<path d="M720.7,320.8L719.5,320.7M716.6,287.7L717.7,287.6" stroke="#0c2f8a" stroke-width="0.9" fill="none" stroke-linecap="round"/>
<polygon points="754.6,340.2 751.9,339.1 751.6,300.5 754.4,301.0" fill="#6692dd" stroke="#6692dd" stroke-width="0.6"/>
<path d="M754.6,340.2L751.9,339.1M751.6,300.5L754.4,301.0" stroke="#0c2f8a" stroke-width="0.9" fill="none" stroke-linecap="round"/>
<path d="M754.6,340.2L754.4,301.0" stroke="#0c2f8a" stroke-width="0.8" fill="none"/>
<polygon points="677.0,294.3 676.5,297.3 670.6,271.9 669.8,268.6" fill="#3965b6" stroke="#3965b6" stroke-width="0.6"/>
<path d="M677.0,294.3L676.5,297.3M670.6,271.9L669.8,268.6" stroke="#0c2f8a" stroke-width="0.9" fill="none" stroke-linecap="round"/>
<polygon points="717.1,318.9 714.7,317.1 711.1,284.8 713.9,286.2" fill="#729ee7" stroke="#729ee7" stroke-width="0.6"/>
<path d="M717.1,318.9L714.7,317.1M711.1,284.8L713.9,286.2" stroke="#0c2f8a" stroke-width="0.9" fill="none" stroke-linecap="round"/>
<polygon points="696.0,306.3 693.1,305.1 687.9,276.7 690.8,277.4" fill="#76a2ea" stroke="#76a2ea" stroke-width="0.6"/>
<path d="M696.0,306.3L693.1,305.1M687.9,276.7L690.8,277.4" stroke="#0c2f8a" stroke-width="0.9" fill="none" stroke-linecap="round"/>
<polygon points="693.1,305.1 692.6,304.2 687.1,275.9 687.9,276.7" fill="#5c88d4" stroke="#5c88d4" stroke-width="0.6"/>
<path d="M693.1,305.1L692.6,304.2M687.1,275.9L687.9,276.7" stroke="#0c2f8a" stroke-width="0.9" fill="none" stroke-linecap="round"/>
<polygon points="656.8,283.4 654.4,283.3 646.1,261.7 648.2,261.3" fill="#6b97e0" stroke="#6b97e0" stroke-width="0.6"/>
<path d="M656.8,283.4L654.4,283.3M646.1,261.7L648.2,261.3" stroke="#0c2f8a" stroke-width="0.9" fill="none" stroke-linecap="round"/>
<polygon points="663.7,288.8 661.6,285.7 653.2,262.7 656.3,265.6" fill="#608cd8" stroke="#608cd8" stroke-width="0.6"/>
<path d="M663.7,288.8L661.6,285.7M653.2,262.7L656.3,265.6" stroke="#0c2f8a" stroke-width="0.9" fill="none" stroke-linecap="round"/>
<polygon points="698.8,307.6 696.0,306.3 690.8,277.4 693.8,278.2" fill="#76a2ea" stroke="#76a2ea" stroke-width="0.6"/>
<path d="M698.8,307.6L696.0,306.3M690.8,277.4L693.8,278.2" stroke="#0c2f8a" stroke-width="0.9" fill="none" stroke-linecap="round"/>
<polygon points="714.7,317.1 714.7,316.2 710.7,283.9 711.1,284.8" fill="#3965b6" stroke="#3965b6" stroke-width="0.6"/>
<path d="M714.7,317.1L714.7,316.2M710.7,283.9L711.1,284.8" stroke="#0c2f8a" stroke-width="0.9" fill="none" stroke-linecap="round"/>
<polygon points="723.1,320.1 720.7,320.8 717.7,287.6 719.5,286.3" fill="#4e7ac8" stroke="#4e7ac8" stroke-width="0.6"/>
<path d="M723.1,320.1L720.7,320.8M717.7,287.6L719.5,286.3" stroke="#0c2f8a" stroke-width="0.9" fill="none" stroke-linecap="round"/>
<polygon points="699.8,307.4 698.8,307.6 693.8,278.2 694.5,277.7" fill="#527ecb" stroke="#527ecb" stroke-width="0.6"/>
<path d="M699.8,307.4L698.8,307.6M693.8,278.2L694.5,277.7" stroke="#0c2f8a" stroke-width="0.9" fill="none" stroke-linecap="round"/>
<polygon points="659.5,283.9 656.8,283.4 648.2,261.3 650.7,261.2" fill="#739fe7" stroke="#739fe7" stroke-width="0.6"/>
<path d="M659.5,283.9L656.8,283.4M648.2,261.3L650.7,261.2" stroke="#0c2f8a" stroke-width="0.9" fill="none" stroke-linecap="round"/>
<path d="M659.5,283.9L650.7,261.2" stroke="#0c2f8a" stroke-width="0.8" fill="none"/>
<polygon points="692.6,304.2 692.5,302.0 686.2,273.6 687.1,275.9" fill="#3965b6" stroke="#3965b6" stroke-width="0.6"/>
<path d="M692.6,304.2L692.5,302.0M686.2,273.6L687.1,275.9" stroke="#0c2f8a" stroke-width="0.9" fill="none" stroke-linecap="round"/>
<polygon points="661.6,285.7 659.5,283.9 650.7,261.2 653.2,262.7" fill="#6c98e2" stroke="#6c98e2" stroke-width="0.6"/>
<path d="M661.6,285.7L659.5,283.9M650.7,261.2L653.2,262.7" stroke="#0c2f8a" stroke-width="0.9" fill="none" stroke-linecap="round"/>
<path d="M659.5,283.9L650.7,261.2" stroke="#0c2f8a" stroke-width="0.8" fill="none"/>
<polygon points="701.3,305.9 699.8,307.4 694.5,277.7 695.3,275.8" fill="#3e6aba" stroke="#3e6aba" stroke-width="0.6"/>
<path d="M701.3,305.9L699.8,307.4M694.5,277.7L695.3,275.8" stroke="#0c2f8a" stroke-width="0.9" fill="none" stroke-linecap="round"/>
<polygon points="677.7,291.0 677.0,294.3 669.8,268.6 669.2,265.0" fill="#3965b6" stroke="#3965b6" stroke-width="0.6"/>
<path d="M677.7,291.0L677.0,294.3M669.8,268.6L669.2,265.0" stroke="#0c2f8a" stroke-width="0.9" fill="none" stroke-linecap="round"/>
<polygon points="726.6,319.1 723.1,320.1 719.5,286.3 722.1,284.4" fill="#4d79c7" stroke="#4d79c7" stroke-width="0.6"/>
<path d="M726.6,319.1L723.1,320.1M719.5,286.3L722.1,284.4" stroke="#0c2f8a" stroke-width="0.9" fill="none" stroke-linecap="round"/>
<polygon points="703.5,303.7 701.3,305.9 695.3,275.8 696.3,273.0" fill="#3d69b9" stroke="#3d69b9" stroke-width="0.6"/>
<path d="M703.5,303.7L701.3,305.9M695.3,275.8L696.3,273.0" stroke="#0c2f8a" stroke-width="0.9" fill="none" stroke-linecap="round"/>
<polygon points="730.6,318.0 726.6,319.1 722.1,284.4 725.1,282.5" fill="#4e7ac8" stroke="#4e7ac8" stroke-width="0.6"/>
<path d="M730.6,318.0L726.6,319.1M722.1,284.4L725.1,282.5" stroke="#0c2f8a" stroke-width="0.9" fill="none" stroke-linecap="round"/>
<polygon points="678.7,288.4 677.7,291.0 669.2,265.0 669.0,262.0" fill="#3965b6" stroke="#3965b6" stroke-width="0.6"/>
<path d="M678.7,288.4L677.7,291.0M669.2,265.0L669.0,262.0" stroke="#0c2f8a" stroke-width="0.9" fill="none" stroke-linecap="round"/>
<polygon points="706.0,301.4 703.5,303.7 696.3,273.0 697.5,270.0" fill="#3e6aba" stroke="#3e6aba" stroke-width="0.6"/>
<path d="M706.0,301.4L703.5,303.7M696.3,273.0L697.5,270.0" stroke="#0c2f8a" stroke-width="0.9" fill="none" stroke-linecap="round"/>
<polygon points="680.1,287.2 678.7,288.4 669.0,262.0 669.8,260.4" fill="#3f6bbc" stroke="#3f6bbc" stroke-width="0.6"/>
<path d="M680.1,287.2L678.7,288.4M669.0,262.0L669.8,260.4" stroke="#0c2f8a" stroke-width="0.9" fill="none" stroke-linecap="round"/>
<path d="M680.1,287.2L669.8,260.4" stroke="#0c2f8a" stroke-width="0.8" fill="none"/>
<polygon points="734.2,317.4 730.6,318.0 725.1,282.5 728.0,281.1" fill="#517dcb" stroke="#517dcb" stroke-width="0.6"/>
<path d="M734.2,317.4L730.6,318.0M725.1,282.5L728.0,281.1" stroke="#0c2f8a" stroke-width="0.9" fill="none" stroke-linecap="round"/>
<polygon points="743.9,324.9 742.5,322.9 737.3,285.1 739.2,287.0" fill="#618dd8" stroke="#618dd8" stroke-width="0.6"/>
<path d="M743.9,324.9L742.5,322.9M737.3,285.1L739.2,287.0" stroke="#0c2f8a" stroke-width="0.9" fill="none" stroke-linecap="round"/>
<path d="M743.9,324.9L739.2,287.0" stroke="#0c2f8a" stroke-width="0.8" fill="none"/>
<polygon points="692.3,295.4 691.7,292.3 681.8,263.4 683.5,266.5" fill="#3965b6" stroke="#3965b6" stroke-width="0.6"/>
<path d="M692.3,295.4L691.7,292.3M681.8,263.4L683.5,266.5" stroke="#0c2f8a" stroke-width="0.9" fill="none" stroke-linecap="round"/>
<polygon points="742.5,322.9 740.9,321.1 735.2,283.6 737.3,285.1" fill="#6a96e0" stroke="#6a96e0" stroke-width="0.6"/>
<path d="M742.5,322.9L740.9,321.1M735.2,283.6L737.3,285.1" stroke="#0c2f8a" stroke-width="0.9" fill="none" stroke-linecap="round"/>
<polygon points="682.8,287.5 680.1,287.2 669.8,260.4 672.3,260.2" fill="#6e9ae3" stroke="#6e9ae3" stroke-width="0.6"/>
<path d="M682.8,287.5L680.1,287.2M669.8,260.4L672.3,260.2" stroke="#0c2f8a" stroke-width="0.9" fill="none" stroke-linecap="round"/>
<path d="M680.1,287.2L669.8,260.4" stroke="#0c2f8a" stroke-width="0.8" fill="none"/>
<polygon points="740.9,321.1 739.2,319.4 733.1,282.1 735.2,283.6" fill="#6c98e1" stroke="#6c98e1" stroke-width="0.6"/>
<path d="M740.9,321.1L739.2,319.4M733.1,282.1L735.2,283.6" stroke="#0c2f8a" stroke-width="0.9" fill="none" stroke-linecap="round"/>
<polygon points="736.9,317.7 734.2,317.4 728.0,281.1 730.5,280.8" fill="#5f8bd7" stroke="#5f8bd7" stroke-width="0.6"/>
<path d="M736.9,317.7L734.2,317.4M728.0,281.1L730.5,280.8" stroke="#0c2f8a" stroke-width="0.9" fill="none" stroke-linecap="round"/>
<path d="M736.9,317.7L730.5,280.8" stroke="#0c2f8a" stroke-width="0.8" fill="none"/>
<polygon points="685.3,288.2 682.8,287.5 672.3,260.2 674.7,260.4" fill="#75a1ea" stroke="#75a1ea" stroke-width="0.6"/>
<path d="M685.3,288.2L682.8,287.5M672.3,260.2L674.7,260.4" stroke="#0c2f8a" stroke-width="0.9" fill="none" stroke-linecap="round"/>
<polygon points="739.2,319.4 736.9,317.7 730.5,280.8 733.1,282.1" fill="#719de6" stroke="#719de6" stroke-width="0.6"/>
<path d="M739.2,319.4L736.9,317.7M730.5,280.8L733.1,282.1" stroke="#0c2f8a" stroke-width="0.9" fill="none" stroke-linecap="round"/>
<path d="M736.9,317.7L730.5,280.8" stroke="#0c2f8a" stroke-width="0.8" fill="none"/>
<polygon points="708.5,299.6 706.0,301.4 697.5,270.0 699.0,267.6" fill="#416dbd" stroke="#416dbd" stroke-width="0.6"/>
<path d="M708.5,299.6L706.0,301.4M697.5,270.0L699.0,267.6" stroke="#0c2f8a" stroke-width="0.9" fill="none" stroke-linecap="round"/>
<polygon points="691.7,292.3 690.5,290.2 679.9,261.4 681.8,263.4" fill="#5d89d5" stroke="#5d89d5" stroke-width="0.6"/>
<path d="M691.7,292.3L690.5,290.2M679.9,261.4L681.8,263.4" stroke="#0c2f8a" stroke-width="0.9" fill="none" stroke-linecap="round"/>
<path d="M690.5,290.2L679.9,261.4" stroke="#0c2f8a" stroke-width="0.8" fill="none"/>
<polygon points="687.8,289.0 685.3,288.2 674.7,260.4 677.2,260.7" fill="#76a2ea" stroke="#76a2ea" stroke-width="0.6"/>
<path d="M687.8,289.0L685.3,288.2M674.7,260.4L677.2,260.7" stroke="#0c2f8a" stroke-width="0.9" fill="none" stroke-linecap="round"/>
<polygon points="690.5,290.2 687.8,289.0 677.2,260.7 679.9,261.4" fill="#76a2ea" stroke="#76a2ea" stroke-width="0.6"/>
<path d="M690.5,290.2L687.8,289.0M677.2,260.7L679.9,261.4" stroke="#0c2f8a" stroke-width="0.9" fill="none" stroke-linecap="round"/>
<path d="M690.5,290.2L679.9,261.4" stroke="#0c2f8a" stroke-width="0.8" fill="none"/>
<polygon points="720.3,306.6 720.1,304.6 711.0,270.5 711.9,272.5" fill="#3965b6" stroke="#3965b6" stroke-width="0.6"/>
<path d="M720.3,306.6L720.1,304.6M711.0,270.5L711.9,272.5" stroke="#0c2f8a" stroke-width="0.9" fill="none" stroke-linecap="round"/>
<path d="M720.1,304.6L711.0,270.5" stroke="#0c2f8a" stroke-width="0.8" fill="none"/>
<polygon points="710.8,299.1 708.5,299.6 699.0,267.6 700.8,266.6" fill="#507cca" stroke="#507cca" stroke-width="0.6"/>
<path d="M710.8,299.1L708.5,299.6M699.0,267.6L700.8,266.6" stroke="#0c2f8a" stroke-width="0.9" fill="none" stroke-linecap="round"/>
<path d="M710.8,299.1L700.8,266.6" stroke="#0c2f8a" stroke-width="0.8" fill="none"/>
<polygon points="720.1,304.6 718.0,302.9 708.5,269.1 711.0,270.5" fill="#719de6" stroke="#719de6" stroke-width="0.6"/>
<path d="M720.1,304.6L718.0,302.9M708.5,269.1L711.0,270.5" stroke="#0c2f8a" stroke-width="0.9" fill="none" stroke-linecap="round"/>
<path d="M720.1,304.6L711.0,270.5" stroke="#0c2f8a" stroke-width="0.8" fill="none"/>
<polygon points="713.4,300.2 710.8,299.1 700.8,266.6 703.5,267.2" fill="#75a1ea" stroke="#75a1ea" stroke-width="0.6"/>
<path d="M713.4,300.2L710.8,299.1M700.8,266.6L703.5,267.2" stroke="#0c2f8a" stroke-width="0.9" fill="none" stroke-linecap="round"/>
<path d="M710.8,299.1L700.8,266.6" stroke="#0c2f8a" stroke-width="0.8" fill="none"/>
<polygon points="718.0,302.9 715.7,301.5 706.0,268.1 708.5,269.1" fill="#76a2ea" stroke="#76a2ea" stroke-width="0.6"/>
<path d="M718.0,302.9L715.7,301.5M706.0,268.1L708.5,269.1" stroke="#0c2f8a" stroke-width="0.9" fill="none" stroke-linecap="round"/>
<polygon points="715.7,301.5 713.4,300.2 703.5,267.2 706.0,268.1" fill="#76a2ea" stroke="#76a2ea" stroke-width="0.6"/>
<path d="M715.7,301.5L713.4,300.2M703.5,267.2L706.0,268.1" stroke="#0c2f8a" stroke-width="0.9" fill="none" stroke-linecap="round"/>
<polygon points="800.9,429.8 801.7,431.9 793.1,397.0 793.0,395.1" fill="#5581ce" stroke="#5581ce" stroke-width="0.6"/>
<path d="M800.9,429.8L801.7,431.9M793.1,397.0L793.0,395.1" stroke="#0c2f8a" stroke-width="0.9" fill="none" stroke-linecap="round"/>
<path d="M801.7,431.9L793.1,397.0" stroke="#0c2f8a" stroke-width="0.8" fill="none"/>
<polygon points="801.1,426.9 800.9,429.8 793.0,395.1 794.3,392.6" fill="#3965b6" stroke="#3965b6" stroke-width="0.6"/>
<path d="M801.1,426.9L800.9,429.8M793.0,395.1L794.3,392.6" stroke="#0c2f8a" stroke-width="0.9" fill="none" stroke-linecap="round"/>
<polygon points="829.4,437.1 830.9,440.2 821.0,410.4 820.6,407.4" fill="#5884d1" stroke="#5884d1" stroke-width="0.6"/>
<path d="M829.4,437.1L830.9,440.2M821.0,410.4L820.6,407.4" stroke="#0c2f8a" stroke-width="0.9" fill="none" stroke-linecap="round"/>
<polygon points="801.8,423.7 801.1,426.9 794.3,392.6 796.3,390.0" fill="#3965b6" stroke="#3965b6" stroke-width="0.6"/>
<path d="M801.8,423.7L801.1,426.9M794.3,392.6L796.3,390.0" stroke="#0c2f8a" stroke-width="0.9" fill="none" stroke-linecap="round"/>
<polygon points="828.2,433.4 829.4,437.1 820.6,407.4 820.7,404.0" fill="#5480cd" stroke="#5480cd" stroke-width="0.6"/>
<path d="M828.2,433.4L829.4,437.1M820.6,407.4L820.7,404.0" stroke="#0c2f8a" stroke-width="0.9" fill="none" stroke-linecap="round"/>
<polygon points="774.6,412.6 774.3,414.4 770.6,376.1 771.6,374.6" fill="#3965b6" stroke="#3965b6" stroke-width="0.6"/>
<path d="M774.6,412.6L774.3,414.4M770.6,376.1L771.6,374.6" stroke="#0c2f8a" stroke-width="0.9" fill="none" stroke-linecap="round"/>
<path d="M774.3,414.4L770.6,376.1" stroke="#0c2f8a" stroke-width="0.8" fill="none"/>
<polygon points="827.2,430.1 828.2,433.4 820.7,404.0 821.0,400.9" fill="#527ecb" stroke="#527ecb" stroke-width="0.6"/>
<path d="M827.2,430.1L828.2,433.4M820.7,404.0L821.0,400.9" stroke="#0c2f8a" stroke-width="0.9" fill="none" stroke-linecap="round"/>
<polygon points="802.6,420.8 801.8,423.7 796.3,390.0 798.3,387.6" fill="#3965b6" stroke="#3965b6" stroke-width="0.6"/>
<path d="M802.6,420.8L801.8,423.7M796.3,390.0L798.3,387.6" stroke="#0c2f8a" stroke-width="0.9" fill="none" stroke-linecap="round"/>
<polygon points="776.4,410.4 774.6,412.6 771.6,374.6 774.4,373.1" fill="#3b67b8" stroke="#3b67b8" stroke-width="0.6"/>
<path d="M776.4,410.4L774.6,412.6M771.6,374.6L774.4,373.1" stroke="#0c2f8a" stroke-width="0.9" fill="none" stroke-linecap="round"/>
<polygon points="826.5,427.8 827.2,430.1 821.0,400.9 821.1,398.8" fill="#537fcc" stroke="#537fcc" stroke-width="0.6"/>
<path d="M826.5,427.8L827.2,430.1M821.0,400.9L821.1,398.8" stroke="#0c2f8a" stroke-width="0.9" fill="none" stroke-linecap="round"/>
<polygon points="803.1,418.8 802.6,420.8 798.3,387.6 799.6,386.0" fill="#3965b6" stroke="#3965b6" stroke-width="0.6"/>
<path d="M803.1,418.8L802.6,420.8M798.3,387.6L799.6,386.0" stroke="#0c2f8a" stroke-width="0.9" fill="none" stroke-linecap="round"/>
<polygon points="778.9,408.1 776.4,410.4 774.4,373.1 778.0,371.6" fill="#3e6abb" stroke="#3e6abb" stroke-width="0.6"/>
<path d="M778.9,408.1L776.4,410.4M774.4,373.1L778.0,371.6" stroke="#0c2f8a" stroke-width="0.9" fill="none" stroke-linecap="round"/>
<polygon points="781.3,406.1 778.9,408.1 778.0,371.6 781.3,370.4" fill="#406cbc" stroke="#406cbc" stroke-width="0.6"/>
<path d="M781.3,406.1L778.9,408.1M778.0,371.6L781.3,370.4" stroke="#0c2f8a" stroke-width="0.9" fill="none" stroke-linecap="round"/>
<polygon points="783.0,404.7 781.3,406.1 781.3,370.4 783.6,369.6" fill="#406cbc" stroke="#406cbc" stroke-width="0.6"/>
<path d="M783.0,404.7L781.3,406.1M781.3,370.4L783.6,369.6" stroke="#0c2f8a" stroke-width="0.9" fill="none" stroke-linecap="round"/>
<polygon points="783.2,403.9 783.0,404.7 783.6,369.6 784.1,368.9" fill="#3965b6" stroke="#3965b6" stroke-width="0.6"/>
<path d="M783.2,403.9L783.0,404.7M783.6,369.6L784.1,368.9" stroke="#0c2f8a" stroke-width="0.9" fill="none" stroke-linecap="round"/>
<polygon points="869.6,437.3 867.4,433.6 862.4,412.4 863.3,416.1" fill="#5d89d5" stroke="#5d89d5" stroke-width="0.6"/>
<path d="M869.6,437.3L867.4,433.6M862.4,412.4L863.3,416.1" stroke="#0c2f8a" stroke-width="0.9" fill="none" stroke-linecap="round"/>
<polygon points="756.0,391.1 754.6,392.5 758.1,353.0 760.0,352.1" fill="#3e6aba" stroke="#3e6aba" stroke-width="0.6"/>
<path d="M756.0,391.1L754.6,392.5M758.1,353.0L760.0,352.1" stroke="#0c2f8a" stroke-width="0.9" fill="none" stroke-linecap="round"/>
<path d="M754.6,392.5L758.1,353.0" stroke="#0c2f8a" stroke-width="0.8" fill="none"/>
<polygon points="867.4,433.6 865.2,430.3 861.3,409.1 862.4,412.4" fill="#5f8bd7" stroke="#5f8bd7" stroke-width="0.6"/>
<path d="M867.4,433.6L865.2,430.3M861.3,409.1L862.4,412.4" stroke="#0c2f8a" stroke-width="0.9" fill="none" stroke-linecap="round"/>
<polygon points="759.1,390.0 756.0,391.1 760.0,352.1 763.8,351.8" fill="#4a76c5" stroke="#4a76c5" stroke-width="0.6"/>
<path d="M759.1,390.0L756.0,391.1M760.0,352.1L763.8,351.8" stroke="#0c2f8a" stroke-width="0.9" fill="none" stroke-linecap="round"/>
<polygon points="865.2,430.3 863.7,428.0 860.7,406.8 861.3,409.1" fill="#5f8bd6" stroke="#5f8bd6" stroke-width="0.6"/>
<path d="M865.2,430.3L863.7,428.0M860.7,406.8L861.3,409.1" stroke="#0c2f8a" stroke-width="0.9" fill="none" stroke-linecap="round"/>
<polygon points="763.0,388.9 759.1,390.0 763.8,351.8 768.4,351.7" fill="#4f7bc9" stroke="#4f7bc9" stroke-width="0.6"/>
<path d="M763.0,388.9L759.1,390.0M763.8,351.8L768.4,351.7" stroke="#0c2f8a" stroke-width="0.9" fill="none" stroke-linecap="round"/>
<polygon points="766.8,388.1 763.0,388.9 768.4,351.7 772.7,351.8" fill="#517dcb" stroke="#517dcb" stroke-width="0.6"/>
<path d="M766.8,388.1L763.0,388.9M768.4,351.7L772.7,351.8" stroke="#0c2f8a" stroke-width="0.9" fill="none" stroke-linecap="round"/>
<polygon points="769.3,387.5 766.8,388.1 772.7,351.8 775.6,351.9" fill="#517dcb" stroke="#517dcb" stroke-width="0.6"/>
<path d="M769.3,387.5L766.8,388.1M772.7,351.8L775.6,351.9" stroke="#0c2f8a" stroke-width="0.9" fill="none" stroke-linecap="round"/>
<polygon points="769.9,387.0 769.3,387.5 775.6,351.9 776.5,351.5" fill="#416dbd" stroke="#416dbd" stroke-width="0.6"/>
<path d="M769.9,387.0L769.3,387.5M775.6,351.9L776.5,351.5" stroke="#0c2f8a" stroke-width="0.9" fill="none" stroke-linecap="round"/>
<polygon points="892.6,432.3 891.4,430.2 889.2,414.6 889.7,416.6" fill="#5c88d4" stroke="#5c88d4" stroke-width="0.6"/>
<path d="M892.6,432.3L891.4,430.2M889.2,414.6L889.7,416.6" stroke="#0c2f8a" stroke-width="0.9" fill="none" stroke-linecap="round"/>
<path d="M892.6,432.3L889.7,416.6" stroke="#0c2f8a" stroke-width="0.8" fill="none"/>
<polygon points="891.4,430.2 888.5,427.3 887.3,411.5 889.2,414.6" fill="#6894de" stroke="#6894de" stroke-width="0.6"/>
<path d="M891.4,430.2L888.5,427.3M887.3,411.5L889.2,414.6" stroke="#0c2f8a" stroke-width="0.9" fill="none" stroke-linecap="round"/>
<polygon points="888.5,427.3 884.7,424.0 884.5,407.9 887.3,411.5" fill="#6c98e1" stroke="#6c98e1" stroke-width="0.6"/>
<path d="M888.5,427.3L884.7,424.0M884.5,407.9L887.3,411.5" stroke="#0c2f8a" stroke-width="0.9" fill="none" stroke-linecap="round"/>
<polygon points="884.7,424.0 881.2,421.1 881.9,404.6 884.5,407.9" fill="#6e9ae3" stroke="#6e9ae3" stroke-width="0.6"/>
<path d="M884.7,424.0L881.2,421.1M881.9,404.6L884.5,407.9" stroke="#0c2f8a" stroke-width="0.9" fill="none" stroke-linecap="round"/>
<polygon points="881.2,421.1 878.8,419.1 880.1,402.4 881.9,404.6" fill="#6e9ae3" stroke="#6e9ae3" stroke-width="0.6"/>
<path d="M881.2,421.1L878.8,419.1M880.1,402.4L881.9,404.6" stroke="#0c2f8a" stroke-width="0.9" fill="none" stroke-linecap="round"/>
<polygon points="745.6,369.4 745.4,371.2 756.4,332.7 757.4,331.2" fill="#406cbc" stroke="#406cbc" stroke-width="0.6"/>
<path d="M745.6,369.4L745.4,371.2M756.4,332.7L757.4,331.2" stroke="#0c2f8a" stroke-width="0.9" fill="none" stroke-linecap="round"/>
<path d="M745.6,369.4L757.4,331.2" stroke="#0c2f8a" stroke-width="0.8" fill="none"/>
<polygon points="878.8,419.1 878.2,418.2 879.8,401.5 880.1,402.4" fill="#5f8bd6" stroke="#5f8bd6" stroke-width="0.6"/>
<path d="M878.8,419.1L878.2,418.2M879.8,401.5L880.1,402.4" stroke="#0c2f8a" stroke-width="0.9" fill="none" stroke-linecap="round"/>
<polygon points="747.8,368.8 745.6,369.4 757.4,331.2 759.9,331.1" fill="#4f7bc9" stroke="#4f7bc9" stroke-width="0.6"/>
<path d="M747.8,368.8L745.6,369.4M757.4,331.2L759.9,331.1" stroke="#0c2f8a" stroke-width="0.9" fill="none" stroke-linecap="round"/>
<path d="M745.6,369.4L757.4,331.2" stroke="#0c2f8a" stroke-width="0.8" fill="none"/>
<polygon points="751.8,368.8 747.8,368.8 759.9,331.1 764.2,332.0" fill="#5a86d2" stroke="#5a86d2" stroke-width="0.6"/>
<path d="M751.8,368.8L747.8,368.8M759.9,331.1L764.2,332.0" stroke="#0c2f8a" stroke-width="0.9" fill="none" stroke-linecap="round"/>
<polygon points="756.6,369.2 751.8,368.8 764.2,332.0 769.1,333.4" fill="#5d89d5" stroke="#5d89d5" stroke-width="0.6"/>
<path d="M756.6,369.2L751.8,368.8M764.2,332.0L769.1,333.4" stroke="#0c2f8a" stroke-width="0.9" fill="none" stroke-linecap="round"/>
<polygon points="761.0,369.7 756.6,369.2 769.1,333.4 773.6,334.7" fill="#5f8bd7" stroke="#5f8bd7" stroke-width="0.6"/>
<path d="M761.0,369.7L756.6,369.2M769.1,333.4L773.6,334.7" stroke="#0c2f8a" stroke-width="0.9" fill="none" stroke-linecap="round"/>
<polygon points="764.1,370.0 761.0,369.7 773.6,334.7 776.8,335.6" fill="#608cd7" stroke="#608cd7" stroke-width="0.6"/>
<path d="M764.1,370.0L761.0,369.7M773.6,334.7L776.8,335.6" stroke="#0c2f8a" stroke-width="0.9" fill="none" stroke-linecap="round"/>
<polygon points="765.1,369.8 764.1,370.0 776.8,335.6 777.9,335.6" fill="#537fcd" stroke="#537fcd" stroke-width="0.6"/>
<path d="M765.1,369.8L764.1,370.0M776.8,335.6L777.9,335.6" stroke="#0c2f8a" stroke-width="0.9" fill="none" stroke-linecap="round"/>
<polygon points="903.6,416.9 903.6,415.0 908.1,404.0 907.4,405.7" fill="#4672c1" stroke="#4672c1" stroke-width="0.6"/>
<path d="M903.6,416.9L903.6,415.0M908.1,404.0L907.4,405.7" stroke="#0c2f8a" stroke-width="0.9" fill="none" stroke-linecap="round"/>
<path d="M903.6,415.0L908.1,404.0" stroke="#0c2f8a" stroke-width="0.8" fill="none"/>
<polygon points="903.6,415.0 901.6,413.1 906.6,402.0 908.1,404.0" fill="#6b97e1" stroke="#6b97e1" stroke-width="0.6"/>
<path d="M903.6,415.0L901.6,413.1M906.6,402.0L908.1,404.0" stroke="#0c2f8a" stroke-width="0.9" fill="none" stroke-linecap="round"/>
<path d="M903.6,415.0L908.1,404.0" stroke="#0c2f8a" stroke-width="0.8" fill="none"/>
<polygon points="901.6,413.1 897.7,410.9 903.4,399.3 906.6,402.0" fill="#719de6" stroke="#719de6" stroke-width="0.6"/>
<path d="M901.6,413.1L897.7,410.9M903.4,399.3L906.6,402.0" stroke="#0c2f8a" stroke-width="0.9" fill="none" stroke-linecap="round"/>
<polygon points="897.7,410.9 893.0,408.5 899.3,396.2 903.4,399.3" fill="#729ee7" stroke="#729ee7" stroke-width="0.6"/>
<path d="M897.7,410.9L893.0,408.5M899.3,396.2L903.4,399.3" stroke="#0c2f8a" stroke-width="0.9" fill="none" stroke-linecap="round"/>
<polygon points="893.0,408.5 888.6,406.5 895.4,393.6 899.3,396.2" fill="#739fe8" stroke="#739fe8" stroke-width="0.6"/>
<path d="M893.0,408.5L888.6,406.5M895.4,393.6L899.3,396.2" stroke="#0c2f8a" stroke-width="0.9" fill="none" stroke-linecap="round"/>
<polygon points="888.6,406.5 885.7,405.1 892.8,391.7 895.4,393.6" fill="#74a0e8" stroke="#74a0e8" stroke-width="0.6"/>
<path d="M888.6,406.5L885.7,405.1M892.8,391.7L895.4,393.6" stroke="#0c2f8a" stroke-width="0.9" fill="none" stroke-linecap="round"/>
<polygon points="885.7,405.1 884.7,404.3 892.1,390.8 892.8,391.7" fill="#6f9be4" stroke="#6f9be4" stroke-width="0.6"/>
<path d="M885.7,405.1L884.7,404.3M892.1,390.8L892.8,391.7" stroke="#0c2f8a" stroke-width="0.9" fill="none" stroke-linecap="round"/>
<polygon points="884.7,404.3 884.9,402.3 893.1,389.1 892.1,390.8" fill="#416dbd" stroke="#416dbd" stroke-width="0.6"/>
<path d="M884.7,404.3L884.9,402.3M893.1,389.1L892.1,390.8" stroke="#0c2f8a" stroke-width="0.9" fill="none" stroke-linecap="round"/>
<polygon points="746.9,351.6 746.4,353.1 764.4,317.3 765.6,316.1" fill="#3a66b7" stroke="#3a66b7" stroke-width="0.6"/>
<path d="M746.9,351.6L746.4,353.1M764.4,317.3L765.6,316.1" stroke="#0c2f8a" stroke-width="0.9" fill="none" stroke-linecap="round"/>
<polygon points="884.9,402.3 884.9,400.2 893.9,387.4 893.1,389.1" fill="#4470bf" stroke="#4470bf" stroke-width="0.6"/>
<path d="M884.9,402.3L884.9,400.2M893.9,387.4L893.1,389.1" stroke="#0c2f8a" stroke-width="0.9" fill="none" stroke-linecap="round"/>
<polygon points="747.5,350.0 746.9,351.6 765.6,316.1 766.8,314.9" fill="#3965b6" stroke="#3965b6" stroke-width="0.6"/>
<path d="M747.5,350.0L746.9,351.6M765.6,316.1L766.8,314.9" stroke="#0c2f8a" stroke-width="0.9" fill="none" stroke-linecap="round"/>
<polygon points="748.8,348.7 747.5,350.0 766.8,314.9 768.6,314.0" fill="#416dbd" stroke="#416dbd" stroke-width="0.6"/>
<path d="M748.8,348.7L747.5,350.0M766.8,314.9L768.6,314.0" stroke="#0c2f8a" stroke-width="0.9" fill="none" stroke-linecap="round"/>
<path d="M748.8,348.7L768.6,314.0" stroke="#0c2f8a" stroke-width="0.8" fill="none"/>
<polygon points="751.4,348.8 748.8,348.7 768.6,314.0 771.4,314.7" fill="#5e8ad6" stroke="#5e8ad6" stroke-width="0.6"/>
<path d="M751.4,348.8L748.8,348.7M768.6,314.0L771.4,314.7" stroke="#0c2f8a" stroke-width="0.9" fill="none" stroke-linecap="round"/>
<path d="M748.8,348.7L768.6,314.0" stroke="#0c2f8a" stroke-width="0.8" fill="none"/>
<polygon points="755.7,350.1 751.4,348.8 771.4,314.7 775.5,316.7" fill="#638fda" stroke="#638fda" stroke-width="0.6"/>
<path d="M755.7,350.1L751.4,348.8M771.4,314.7L775.5,316.7" stroke="#0c2f8a" stroke-width="0.9" fill="none" stroke-linecap="round"/>
<polygon points="768.1,354.8 765.1,353.6 784.1,321.7 786.9,323.4" fill="#6793de" stroke="#6793de" stroke-width="0.6"/>
<path d="M768.1,354.8L765.1,353.6M784.1,321.7L786.9,323.4" stroke="#0c2f8a" stroke-width="0.9" fill="none" stroke-linecap="round"/>
<polygon points="765.1,353.6 760.6,351.9 780.0,319.3 784.1,321.7" fill="#6692dd" stroke="#6692dd" stroke-width="0.6"/>
<path d="M765.1,353.6L760.6,351.9M780.0,319.3L784.1,321.7" stroke="#0c2f8a" stroke-width="0.9" fill="none" stroke-linecap="round"/>
<polygon points="760.6,351.9 755.7,350.1 775.5,316.7 780.0,319.3" fill="#6591db" stroke="#6591db" stroke-width="0.6"/>
<path d="M760.6,351.9L755.7,350.1M775.5,316.7L780.0,319.3" stroke="#0c2f8a" stroke-width="0.9" fill="none" stroke-linecap="round"/>
<polygon points="769.3,354.9 768.1,354.8 786.9,323.4 788.1,323.7" fill="#6490da" stroke="#6490da" stroke-width="0.6"/>
<path d="M769.3,354.9L768.1,354.8M786.9,323.4L788.1,323.7" stroke="#0c2f8a" stroke-width="0.9" fill="none" stroke-linecap="round"/>
<polygon points="770.5,353.3 769.3,354.9 788.1,323.7 790.0,322.6" fill="#3f6bbb" stroke="#3f6bbb" stroke-width="0.6"/>
<path d="M770.5,353.3L769.3,354.9M788.1,323.7L790.0,322.6" stroke="#0c2f8a" stroke-width="0.9" fill="none" stroke-linecap="round"/>
<polygon points="771.8,351.8 770.5,353.3 790.0,322.6 791.9,321.6" fill="#416dbd" stroke="#416dbd" stroke-width="0.6"/>
<path d="M771.8,351.8L770.5,353.3M790.0,322.6L791.9,321.6" stroke="#0c2f8a" stroke-width="0.9" fill="none" stroke-linecap="round"/>
<polygon points="904.4,400.6 904.6,398.8 915.3,390.3 914.4,391.8" fill="#406cbc" stroke="#406cbc" stroke-width="0.6"/>
<path d="M904.4,400.6L904.6,398.8M915.3,390.3L914.4,391.8" stroke="#0c2f8a" stroke-width="0.9" fill="none" stroke-linecap="round"/>
<path d="M904.4,400.6L914.4,391.8" stroke="#0c2f8a" stroke-width="0.8" fill="none"/>
<polygon points="904.6,398.8 904.2,397.0 915.6,388.6 915.3,390.3" fill="#4c78c7" stroke="#4c78c7" stroke-width="0.6"/>
<path d="M904.6,398.8L904.2,397.0M915.6,388.6L915.3,390.3" stroke="#0c2f8a" stroke-width="0.9" fill="none" stroke-linecap="round"/>
<polygon points="904.2,397.0 903.8,395.1 915.9,386.9 915.6,388.6" fill="#4e7ac8" stroke="#4e7ac8" stroke-width="0.6"/>
<path d="M904.2,397.0L903.8,395.1M915.9,386.9L915.6,388.6" stroke="#0c2f8a" stroke-width="0.9" fill="none" stroke-linecap="round"/>
<polygon points="883.3,388.0 882.1,387.4 895.8,375.7 896.8,376.5" fill="#75a1ea" stroke="#75a1ea" stroke-width="0.6"/>
<path d="M883.3,388.0L882.1,387.4M895.8,375.7L896.8,376.5" stroke="#0c2f8a" stroke-width="0.9" fill="none" stroke-linecap="round"/>
<polygon points="886.4,388.6 883.3,388.0 896.8,376.5 899.9,377.7" fill="#709ce5" stroke="#709ce5" stroke-width="0.6"/>
<path d="M886.4,388.6L883.3,388.0M896.8,376.5L899.9,377.7" stroke="#0c2f8a" stroke-width="0.9" fill="none" stroke-linecap="round"/>
<polygon points="890.9,389.5 886.4,388.6 899.9,377.7 904.4,379.3" fill="#6f9be4" stroke="#6f9be4" stroke-width="0.6"/>
<path d="M890.9,389.5L886.4,388.6M899.9,377.7L904.4,379.3" stroke="#0c2f8a" stroke-width="0.9" fill="none" stroke-linecap="round"/>
<polygon points="882.1,387.4 881.2,385.2 895.6,373.6 895.8,375.7" fill="#5783cf" stroke="#5783cf" stroke-width="0.6"/>
<path d="M882.1,387.4L881.2,385.2M895.6,373.6L895.8,375.7" stroke="#0c2f8a" stroke-width="0.9" fill="none" stroke-linecap="round"/>
<polygon points="903.8,395.1 902.7,393.1 915.5,385.0 915.9,386.9" fill="#5b87d3" stroke="#5b87d3" stroke-width="0.6"/>
<path d="M903.8,395.1L902.7,393.1M915.5,385.0L915.9,386.9" stroke="#0c2f8a" stroke-width="0.9" fill="none" stroke-linecap="round"/>
<path d="M902.7,393.1L915.5,385.0" stroke="#0c2f8a" stroke-width="0.8" fill="none"/>
<polygon points="895.9,390.5 890.9,389.5 904.4,379.3 909.2,381.3" fill="#6f9be4" stroke="#6f9be4" stroke-width="0.6"/>
<path d="M895.9,390.5L890.9,389.5M904.4,379.3L909.2,381.3" stroke="#0c2f8a" stroke-width="0.9" fill="none" stroke-linecap="round"/>
<polygon points="902.7,393.1 900.1,391.7 913.3,383.3 915.5,385.0" fill="#729ee7" stroke="#729ee7" stroke-width="0.6"/>
<path d="M902.7,393.1L900.1,391.7M913.3,383.3L915.5,385.0" stroke="#0c2f8a" stroke-width="0.9" fill="none" stroke-linecap="round"/>
<path d="M902.7,393.1L915.5,385.0" stroke="#0c2f8a" stroke-width="0.8" fill="none"/>
<polygon points="900.1,391.7 895.9,390.5 909.2,381.3 913.3,383.3" fill="#709ce5" stroke="#709ce5" stroke-width="0.6"/>
<path d="M900.1,391.7L895.9,390.5M909.2,381.3L913.3,383.3" stroke="#0c2f8a" stroke-width="0.9" fill="none" stroke-linecap="round"/>
<polygon points="881.2,385.2 880.1,383.0 895.3,371.5 895.6,373.6" fill="#5985d2" stroke="#5985d2" stroke-width="0.6"/>
<path d="M881.2,385.2L880.1,383.0M895.3,371.5L895.6,373.6" stroke="#0c2f8a" stroke-width="0.9" fill="none" stroke-linecap="round"/>
<polygon points="758.5,336.2 757.4,337.7 782.1,306.4 783.7,305.3" fill="#3965b6" stroke="#3965b6" stroke-width="0.6"/>
<path d="M758.5,336.2L757.4,337.7M782.1,306.4L783.7,305.3" stroke="#0c2f8a" stroke-width="0.9" fill="none" stroke-linecap="round"/>
<path d="M757.4,337.7L782.1,306.4" stroke="#0c2f8a" stroke-width="0.8" fill="none"/>
<polygon points="782.1,344.6 780.8,344.1 804.5,316.9 805.7,317.5" fill="#6c98e1" stroke="#6c98e1" stroke-width="0.6"/>
<path d="M782.1,344.6L780.8,344.1M804.5,316.9L805.7,317.5" stroke="#0c2f8a" stroke-width="0.9" fill="none" stroke-linecap="round"/>
<polygon points="780.8,344.1 778.2,342.3 802.4,314.7 804.5,316.9" fill="#6591db" stroke="#6591db" stroke-width="0.6"/>
<path d="M780.8,344.1L778.2,342.3M802.4,314.7L804.5,316.9" stroke="#0c2f8a" stroke-width="0.9" fill="none" stroke-linecap="round"/>
<polygon points="759.9,335.2 758.5,336.2 783.7,305.3 785.7,304.7" fill="#4a76c4" stroke="#4a76c4" stroke-width="0.6"/>
<path d="M759.9,335.2L758.5,336.2M783.7,305.3L785.7,304.7" stroke="#0c2f8a" stroke-width="0.9" fill="none" stroke-linecap="round"/>
<polygon points="784.2,343.7 782.1,344.6 805.7,317.5 808.2,317.2" fill="#5480cd" stroke="#5480cd" stroke-width="0.6"/>
<path d="M784.2,343.7L782.1,344.6M805.7,317.5L808.2,317.2" stroke="#0c2f8a" stroke-width="0.9" fill="none" stroke-linecap="round"/>
<polygon points="778.2,342.3 774.4,339.6 799.4,311.6 802.4,314.7" fill="#638fda" stroke="#638fda" stroke-width="0.6"/>
<path d="M778.2,342.3L774.4,339.6M799.4,311.6L802.4,314.7" stroke="#0c2f8a" stroke-width="0.9" fill="none" stroke-linecap="round"/>
<polygon points="761.4,334.2 759.9,335.2 785.7,304.7 787.7,304.2" fill="#4b77c6" stroke="#4b77c6" stroke-width="0.6"/>
<path d="M761.4,334.2L759.9,335.2M785.7,304.7L787.7,304.2" stroke="#0c2f8a" stroke-width="0.9" fill="none" stroke-linecap="round"/>
<polygon points="786.4,342.9 784.2,343.7 808.2,317.2 810.9,317.0" fill="#5783cf" stroke="#5783cf" stroke-width="0.6"/>
<path d="M786.4,342.9L784.2,343.7M808.2,317.2L810.9,317.0" stroke="#0c2f8a" stroke-width="0.9" fill="none" stroke-linecap="round"/>
<polygon points="774.4,339.6 770.1,336.7 796.0,308.2 799.4,311.6" fill="#638fda" stroke="#638fda" stroke-width="0.6"/>
<path d="M774.4,339.6L770.1,336.7M796.0,308.2L799.4,311.6" stroke="#0c2f8a" stroke-width="0.9" fill="none" stroke-linecap="round"/>
<polygon points="763.5,333.5 761.4,334.2 787.7,304.2 790.1,304.0" fill="#5682cf" stroke="#5682cf" stroke-width="0.6"/>
<path d="M763.5,333.5L761.4,334.2M787.7,304.2L790.1,304.0" stroke="#0c2f8a" stroke-width="0.9" fill="none" stroke-linecap="round"/>
<path d="M763.5,333.5L790.1,304.0" stroke="#0c2f8a" stroke-width="0.8" fill="none"/>
<polygon points="770.1,336.7 766.3,334.4 792.7,305.4 796.0,308.2" fill="#6490da" stroke="#6490da" stroke-width="0.6"/>
<path d="M770.1,336.7L766.3,334.4M792.7,305.4L796.0,308.2" stroke="#0c2f8a" stroke-width="0.9" fill="none" stroke-linecap="round"/>
<polygon points="766.3,334.4 763.5,333.5 790.1,304.0 792.7,305.4" fill="#6793dd" stroke="#6793dd" stroke-width="0.6"/>
<path d="M766.3,334.4L763.5,333.5M790.1,304.0L792.7,305.4" stroke="#0c2f8a" stroke-width="0.9" fill="none" stroke-linecap="round"/>
<path d="M763.5,333.5L790.1,304.0" stroke="#0c2f8a" stroke-width="0.8" fill="none"/>
<polygon points="872.1,370.5 870.8,370.2 890.4,358.5 891.6,358.9" fill="#729ee6" stroke="#729ee6" stroke-width="0.6"/>
<path d="M872.1,370.5L870.8,370.2M890.4,358.5L891.6,358.9" stroke="#0c2f8a" stroke-width="0.9" fill="none" stroke-linecap="round"/>
<polygon points="870.8,370.2 868.9,368.1 889.1,356.3 890.4,358.5" fill="#6a96e0" stroke="#6a96e0" stroke-width="0.6"/>
<path d="M870.8,370.2L868.9,368.1M889.1,356.3L890.4,358.5" stroke="#0c2f8a" stroke-width="0.9" fill="none" stroke-linecap="round"/>
<polygon points="894.0,378.9 895.4,377.5 913.7,370.0 911.8,370.9" fill="#3965b6" stroke="#3965b6" stroke-width="0.6"/>
<path d="M894.0,378.9L895.4,377.5M913.7,370.0L911.8,370.9" stroke="#0c2f8a" stroke-width="0.9" fill="none" stroke-linecap="round"/>
<path d="M895.4,377.5L913.7,370.0" stroke="#0c2f8a" stroke-width="0.8" fill="none"/>
<polygon points="874.8,370.2 872.1,370.5 891.6,358.9 894.6,359.3" fill="#638fda" stroke="#638fda" stroke-width="0.6"/>
<path d="M874.8,370.2L872.1,370.5M891.6,358.9L894.6,359.3" stroke="#0c2f8a" stroke-width="0.9" fill="none" stroke-linecap="round"/>
<polygon points="868.9,368.1 866.8,366.1 887.6,354.1 889.1,356.3" fill="#6c98e2" stroke="#6c98e2" stroke-width="0.6"/>
<path d="M868.9,368.1L866.8,366.1M887.6,354.1L889.1,356.3" stroke="#0c2f8a" stroke-width="0.9" fill="none" stroke-linecap="round"/>
<polygon points="878.8,369.7 874.8,370.2 894.6,359.3 899.0,359.7" fill="#628ed9" stroke="#628ed9" stroke-width="0.6"/>
<path d="M878.8,369.7L874.8,370.2M894.6,359.3L899.0,359.7" stroke="#0c2f8a" stroke-width="0.9" fill="none" stroke-linecap="round"/>
<polygon points="895.4,377.5 894.6,375.5 913.6,368.1 913.7,370.0" fill="#5581ce" stroke="#5581ce" stroke-width="0.6"/>
<path d="M895.4,377.5L894.6,375.5M913.6,368.1L913.7,370.0" stroke="#0c2f8a" stroke-width="0.9" fill="none" stroke-linecap="round"/>
<path d="M895.4,377.5L913.7,370.0" stroke="#0c2f8a" stroke-width="0.8" fill="none"/>
<polygon points="866.8,366.1 867.0,365.3 888.2,353.5 887.6,354.1" fill="#3a66b7" stroke="#3a66b7" stroke-width="0.6"/>
<path d="M866.8,366.1L867.0,365.3M888.2,353.5L887.6,354.1" stroke="#0c2f8a" stroke-width="0.9" fill="none" stroke-linecap="round"/>
<polygon points="894.6,375.5 893.3,373.7 912.9,366.2 913.6,368.1" fill="#628ed9" stroke="#628ed9" stroke-width="0.6"/>
<path d="M894.6,375.5L893.3,373.7M912.9,366.2L913.6,368.1" stroke="#0c2f8a" stroke-width="0.9" fill="none" stroke-linecap="round"/>
<polygon points="883.2,369.3 878.8,369.7 899.0,359.7 903.9,360.4" fill="#638fda" stroke="#638fda" stroke-width="0.6"/>
<path d="M883.2,369.3L878.8,369.7M899.0,359.7L903.9,360.4" stroke="#0c2f8a" stroke-width="0.9" fill="none" stroke-linecap="round"/>
<polygon points="867.0,365.3 868.7,363.9 890.4,352.6 888.2,353.5" fill="#3965b6" stroke="#3965b6" stroke-width="0.6"/>
<path d="M867.0,365.3L868.7,363.9M890.4,352.6L888.2,353.5" stroke="#0c2f8a" stroke-width="0.9" fill="none" stroke-linecap="round"/>
<polygon points="801.3,340.4 800.3,339.7 826.9,317.2 827.8,318.0" fill="#6995df" stroke="#6995df" stroke-width="0.6"/>
<path d="M801.3,340.4L800.3,339.7M826.9,317.2L827.8,318.0" stroke="#0c2f8a" stroke-width="0.9" fill="none" stroke-linecap="round"/>
<polygon points="804.1,340.4 801.3,340.4 827.8,318.0 830.7,318.6" fill="#6894de" stroke="#6894de" stroke-width="0.6"/>
<path d="M804.1,340.4L801.3,340.4M827.8,318.0L830.7,318.6" stroke="#0c2f8a" stroke-width="0.9" fill="none" stroke-linecap="round"/>
<polygon points="893.3,373.7 891.9,371.8 912.2,364.3 912.9,366.2" fill="#638fda" stroke="#638fda" stroke-width="0.6"/>
<path d="M893.3,373.7L891.9,371.8M912.2,364.3L912.9,366.2" stroke="#0c2f8a" stroke-width="0.9" fill="none" stroke-linecap="round"/>
<polygon points="800.3,339.7 798.5,337.5 825.8,314.9 826.9,317.2" fill="#5985d1" stroke="#5985d1" stroke-width="0.6"/>
<path d="M800.3,339.7L798.5,337.5M825.8,314.9L826.9,317.2" stroke="#0c2f8a" stroke-width="0.9" fill="none" stroke-linecap="round"/>
<polygon points="806.8,340.5 804.1,340.4 830.7,318.6 833.6,319.2" fill="#6a96e0" stroke="#6a96e0" stroke-width="0.6"/>
<path d="M806.8,340.5L804.1,340.4M830.7,318.6L833.6,319.2" stroke="#0c2f8a" stroke-width="0.9" fill="none" stroke-linecap="round"/>
<polygon points="887.2,369.3 883.2,369.3 903.9,360.4 908.1,361.2" fill="#6692dd" stroke="#6692dd" stroke-width="0.6"/>
<path d="M887.2,369.3L883.2,369.3M903.9,360.4L908.1,361.2" stroke="#0c2f8a" stroke-width="0.9" fill="none" stroke-linecap="round"/>
<polygon points="891.9,371.8 890.0,370.0 910.8,362.3 912.2,364.3" fill="#6e9ae3" stroke="#6e9ae3" stroke-width="0.6"/>
<path d="M891.9,371.8L890.0,370.0M910.8,362.3L912.2,364.3" stroke="#0c2f8a" stroke-width="0.9" fill="none" stroke-linecap="round"/>
<path d="M890.0,370.0L910.8,362.3" stroke="#0c2f8a" stroke-width="0.8" fill="none"/>
<polygon points="868.7,363.9 871.1,361.9 893.8,351.4 890.4,352.6" fill="#3965b6" stroke="#3965b6" stroke-width="0.6"/>
<path d="M868.7,363.9L871.1,361.9M893.8,351.4L890.4,352.6" stroke="#0c2f8a" stroke-width="0.9" fill="none" stroke-linecap="round"/>
<polygon points="890.0,370.0 887.2,369.3 908.1,361.2 910.8,362.3" fill="#709ce5" stroke="#709ce5" stroke-width="0.6"/>
<path d="M890.0,370.0L887.2,369.3M908.1,361.2L910.8,362.3" stroke="#0c2f8a" stroke-width="0.9" fill="none" stroke-linecap="round"/>
<path d="M890.0,370.0L910.8,362.3" stroke="#0c2f8a" stroke-width="0.8" fill="none"/>
<polygon points="798.5,337.5 795.9,334.2 824.3,311.5 825.8,314.9" fill="#5783d0" stroke="#5783d0" stroke-width="0.6"/>
<path d="M798.5,337.5L795.9,334.2M824.3,311.5L825.8,314.9" stroke="#0c2f8a" stroke-width="0.9" fill="none" stroke-linecap="round"/>
<polygon points="853.7,355.1 852.6,355.2 876.6,341.7 877.9,341.8" fill="#6490db" stroke="#6490db" stroke-width="0.6"/>
<path d="M853.7,355.1L852.6,355.2M876.6,341.7L877.9,341.8" stroke="#0c2f8a" stroke-width="0.9" fill="none" stroke-linecap="round"/>
<polygon points="852.6,355.2 849.9,353.6 874.4,339.7 876.6,341.7" fill="#76a2ea" stroke="#76a2ea" stroke-width="0.6"/>
<path d="M852.6,355.2L849.9,353.6M874.4,339.7L876.6,341.7" stroke="#0c2f8a" stroke-width="0.9" fill="none" stroke-linecap="round"/>
<polygon points="849.9,353.6 847.2,352.1 872.1,337.8 874.4,339.7" fill="#76a2ea" stroke="#76a2ea" stroke-width="0.6"/>
<path d="M849.9,353.6L847.2,352.1M872.1,337.8L874.4,339.7" stroke="#0c2f8a" stroke-width="0.9" fill="none" stroke-linecap="round"/>
<polygon points="855.6,354.0 853.7,355.1 877.9,341.8 880.4,341.3" fill="#3965b6" stroke="#3965b6" stroke-width="0.6"/>
<path d="M855.6,354.0L853.7,355.1M877.9,341.8L880.4,341.3" stroke="#0c2f8a" stroke-width="0.9" fill="none" stroke-linecap="round"/>
<polygon points="780.7,326.8 778.8,327.6 808.7,302.2 811.1,301.9" fill="#5480cd" stroke="#5480cd" stroke-width="0.6"/>
<path d="M780.7,326.8L778.8,327.6M808.7,302.2L811.1,301.9" stroke="#0c2f8a" stroke-width="0.9" fill="none" stroke-linecap="round"/>
<path d="M778.8,327.6L808.7,302.2" stroke="#0c2f8a" stroke-width="0.8" fill="none"/>
<polygon points="795.9,334.2 792.9,330.7 822.5,307.8 824.3,311.5" fill="#5884d1" stroke="#5884d1" stroke-width="0.6"/>
<path d="M795.9,334.2L792.9,330.7M822.5,307.8L824.3,311.5" stroke="#0c2f8a" stroke-width="0.9" fill="none" stroke-linecap="round"/>
<polygon points="847.2,352.1 846.9,351.2 872.2,337.0 872.1,337.8" fill="#4a76c5" stroke="#4a76c5" stroke-width="0.6"/>
<path d="M847.2,352.1L846.9,351.2M872.2,337.0L872.1,337.8" stroke="#0c2f8a" stroke-width="0.9" fill="none" stroke-linecap="round"/>
<polygon points="871.1,361.9 873.6,359.6 897.4,349.9 893.8,351.4" fill="#3965b6" stroke="#3965b6" stroke-width="0.6"/>
<path d="M871.1,361.9L873.6,359.6M897.4,349.9L893.8,351.4" stroke="#0c2f8a" stroke-width="0.9" fill="none" stroke-linecap="round"/>
<polygon points="827.1,343.9 824.2,343.1 851.1,325.2 853.9,326.5" fill="#75a1e9" stroke="#75a1e9" stroke-width="0.6"/>
<path d="M827.1,343.9L824.2,343.1M851.1,325.2L853.9,326.5" stroke="#0c2f8a" stroke-width="0.9" fill="none" stroke-linecap="round"/>
<polygon points="824.2,343.1 823.5,342.2 850.7,324.3 851.1,325.2" fill="#5d89d4" stroke="#5d89d4" stroke-width="0.6"/>
<path d="M824.2,343.1L823.5,342.2M850.7,324.3L851.1,325.2" stroke="#0c2f8a" stroke-width="0.9" fill="none" stroke-linecap="round"/>
<polygon points="830.1,344.8 827.1,343.9 853.9,326.5 856.7,327.9" fill="#76a2ea" stroke="#76a2ea" stroke-width="0.6"/>
<path d="M830.1,344.8L827.1,343.9M853.9,326.5L856.7,327.9" stroke="#0c2f8a" stroke-width="0.9" fill="none" stroke-linecap="round"/>
<polygon points="830.9,344.3 830.1,344.8 856.7,327.9 857.7,327.7" fill="#507cca" stroke="#507cca" stroke-width="0.6"/>
<path d="M830.9,344.3L830.1,344.8M856.7,327.9L857.7,327.7" stroke="#0c2f8a" stroke-width="0.9" fill="none" stroke-linecap="round"/>
<polygon points="782.8,326.4 780.7,326.8 811.1,301.9 813.5,302.0" fill="#5f8bd7" stroke="#5f8bd7" stroke-width="0.6"/>
<path d="M782.8,326.4L780.7,326.8M811.1,301.9L813.5,302.0" stroke="#0c2f8a" stroke-width="0.9" fill="none" stroke-linecap="round"/>
<polygon points="846.9,351.2 847.4,349.2 873.5,335.4 872.2,337.0" fill="#3965b6" stroke="#3965b6" stroke-width="0.6"/>
<path d="M846.9,351.2L847.4,349.2M873.5,335.4L872.2,337.0" stroke="#0c2f8a" stroke-width="0.9" fill="none" stroke-linecap="round"/>
<polygon points="823.5,342.2 822.8,339.9 850.8,322.1 850.7,324.3" fill="#4874c3" stroke="#4874c3" stroke-width="0.6"/>
<path d="M823.5,342.2L822.8,339.9M850.8,322.1L850.7,324.3" stroke="#0c2f8a" stroke-width="0.9" fill="none" stroke-linecap="round"/>
<polygon points="792.9,330.7 790.0,327.7 820.6,304.7 822.5,307.8" fill="#5b87d3" stroke="#5b87d3" stroke-width="0.6"/>
<path d="M792.9,330.7L790.0,327.7M820.6,304.7L822.5,307.8" stroke="#0c2f8a" stroke-width="0.9" fill="none" stroke-linecap="round"/>
<polygon points="858.5,352.3 855.6,354.0 880.4,341.3 884.1,340.4" fill="#3965b6" stroke="#3965b6" stroke-width="0.6"/>
<path d="M858.5,352.3L855.6,354.0M880.4,341.3L884.1,340.4" stroke="#0c2f8a" stroke-width="0.9" fill="none" stroke-linecap="round"/>
<polygon points="785.0,326.1 782.8,326.4 813.5,302.0 815.9,302.2" fill="#618dd8" stroke="#618dd8" stroke-width="0.6"/>
<path d="M785.0,326.1L782.8,326.4M813.5,302.0L815.9,302.2" stroke="#0c2f8a" stroke-width="0.9" fill="none" stroke-linecap="round"/>
<polygon points="873.6,359.6 875.4,357.4 900.1,348.4 897.4,349.9" fill="#3965b6" stroke="#3965b6" stroke-width="0.6"/>
<path d="M873.6,359.6L875.4,357.4M900.1,348.4L897.4,349.9" stroke="#0c2f8a" stroke-width="0.9" fill="none" stroke-linecap="round"/>
<polygon points="787.6,326.2 785.0,326.1 815.9,302.2 818.6,302.8" fill="#6a96df" stroke="#6a96df" stroke-width="0.6"/>
<path d="M787.6,326.2L785.0,326.1M815.9,302.2L818.6,302.8" stroke="#0c2f8a" stroke-width="0.9" fill="none" stroke-linecap="round"/>
<path d="M787.6,326.2L818.6,302.8" stroke="#0c2f8a" stroke-width="0.8" fill="none"/>
<polygon points="790.0,327.7 787.6,326.2 818.6,302.8 820.6,304.7" fill="#6591dc" stroke="#6591dc" stroke-width="0.6"/>
<path d="M790.0,327.7L787.6,326.2M818.6,302.8L820.6,304.7" stroke="#0c2f8a" stroke-width="0.9" fill="none" stroke-linecap="round"/>
<path d="M787.6,326.2L818.6,302.8" stroke="#0c2f8a" stroke-width="0.8" fill="none"/>
<polygon points="847.4,349.2 848.2,346.3 875.5,333.1 873.5,335.4" fill="#3965b6" stroke="#3965b6" stroke-width="0.6"/>
<path d="M847.4,349.2L848.2,346.3M875.5,333.1L873.5,335.4" stroke="#0c2f8a" stroke-width="0.9" fill="none" stroke-linecap="round"/>
<polygon points="822.8,339.9 821.8,336.6 851.1,319.1 850.8,322.1" fill="#4773c2" stroke="#4773c2" stroke-width="0.6"/>
<path d="M822.8,339.9L821.8,336.6M851.1,319.1L850.8,322.1" stroke="#0c2f8a" stroke-width="0.9" fill="none" stroke-linecap="round"/>
<polygon points="861.7,350.5 858.5,352.3 884.1,340.4 888.2,339.6" fill="#3965b6" stroke="#3965b6" stroke-width="0.6"/>
<path d="M861.7,350.5L858.5,352.3M884.1,340.4L888.2,339.6" stroke="#0c2f8a" stroke-width="0.9" fill="none" stroke-linecap="round"/>
<polygon points="875.4,357.4 875.7,355.6 901.2,346.9 900.1,348.4" fill="#3a66b7" stroke="#3a66b7" stroke-width="0.6"/>
<path d="M875.4,357.4L875.7,355.6M901.2,346.9L900.1,348.4" stroke="#0c2f8a" stroke-width="0.9" fill="none" stroke-linecap="round"/>
<path d="M875.7,355.6L901.2,346.9" stroke="#0c2f8a" stroke-width="0.8" fill="none"/>
<polygon points="875.7,355.6 874.0,353.7 900.0,344.9 901.2,346.9" fill="#6894de" stroke="#6894de" stroke-width="0.6"/>
<path d="M875.7,355.6L874.0,353.7M900.0,344.9L901.2,346.9" stroke="#0c2f8a" stroke-width="0.9" fill="none" stroke-linecap="round"/>
<path d="M875.7,355.6L901.2,346.9" stroke="#0c2f8a" stroke-width="0.8" fill="none"/>
<polygon points="821.8,336.6 820.6,332.9 851.1,315.6 851.1,319.1" fill="#4874c3" stroke="#4874c3" stroke-width="0.6"/>
<path d="M821.8,336.6L820.6,332.9M851.1,315.6L851.1,319.1" stroke="#0c2f8a" stroke-width="0.9" fill="none" stroke-linecap="round"/>
<polygon points="848.2,346.3 848.9,343.1 877.4,330.4 875.5,333.1" fill="#3965b7" stroke="#3965b7" stroke-width="0.6"/>
<path d="M848.2,346.3L848.9,343.1M877.4,330.4L875.5,333.1" stroke="#0c2f8a" stroke-width="0.9" fill="none" stroke-linecap="round"/>
<polygon points="864.8,349.3 861.7,350.5 888.2,339.6 892.0,339.2" fill="#3965b6" stroke="#3965b6" stroke-width="0.6"/>
<path d="M864.8,349.3L861.7,350.5M888.2,339.6L892.0,339.2" stroke="#0c2f8a" stroke-width="0.9" fill="none" stroke-linecap="round"/>
<polygon points="874.0,353.7 871.9,352.1 898.5,343.1 900.0,344.9" fill="#729ee7" stroke="#729ee7" stroke-width="0.6"/>
<path d="M874.0,353.7L871.9,352.1M898.5,343.1L900.0,344.9" stroke="#0c2f8a" stroke-width="0.9" fill="none" stroke-linecap="round"/>
<polygon points="871.9,352.1 869.9,350.5 896.9,341.3 898.5,343.1" fill="#739fe7" stroke="#739fe7" stroke-width="0.6"/>
<path d="M871.9,352.1L869.9,350.5M896.9,341.3L898.5,343.1" stroke="#0c2f8a" stroke-width="0.9" fill="none" stroke-linecap="round"/>
<polygon points="867.4,349.2 864.8,349.3 892.0,339.2 894.7,339.6" fill="#6490db" stroke="#6490db" stroke-width="0.6"/>
<path d="M867.4,349.2L864.8,349.3M892.0,339.2L894.7,339.6" stroke="#0c2f8a" stroke-width="0.9" fill="none" stroke-linecap="round"/>
<path d="M867.4,349.2L894.7,339.6" stroke="#0c2f8a" stroke-width="0.8" fill="none"/>
<polygon points="869.9,350.5 867.4,349.2 894.7,339.6 896.9,341.3" fill="#76a2ea" stroke="#76a2ea" stroke-width="0.6"/>
<path d="M869.9,350.5L867.4,349.2M894.7,339.6L896.9,341.3" stroke="#0c2f8a" stroke-width="0.9" fill="none" stroke-linecap="round"/>
<path d="M867.4,349.2L894.7,339.6" stroke="#0c2f8a" stroke-width="0.8" fill="none"/>
<polygon points="820.6,332.9 819.1,329.8 850.8,312.6 851.1,315.6" fill="#4c78c6" stroke="#4c78c6" stroke-width="0.6"/>
<path d="M820.6,332.9L819.1,329.8M850.8,312.6L851.1,315.6" stroke="#0c2f8a" stroke-width="0.9" fill="none" stroke-linecap="round"/>
<polygon points="848.9,343.1 849.1,340.2 878.7,328.0 877.4,330.4" fill="#3c68b9" stroke="#3c68b9" stroke-width="0.6"/>
<path d="M848.9,343.1L849.1,340.2M878.7,328.0L877.4,330.4" stroke="#0c2f8a" stroke-width="0.9" fill="none" stroke-linecap="round"/>
<polygon points="809.7,326.2 807.2,326.2 839.4,307.0 842.1,307.5" fill="#6894de" stroke="#6894de" stroke-width="0.6"/>
<path d="M809.7,326.2L807.2,326.2M839.4,307.0L842.1,307.5" stroke="#0c2f8a" stroke-width="0.9" fill="none" stroke-linecap="round"/>
<path d="M807.2,326.2L839.4,307.0" stroke="#0c2f8a" stroke-width="0.8" fill="none"/>
<polygon points="812.2,326.5 809.7,326.2 842.1,307.5 844.7,308.3" fill="#709ce5" stroke="#709ce5" stroke-width="0.6"/>
<path d="M812.2,326.5L809.7,326.2M842.1,307.5L844.7,308.3" stroke="#0c2f8a" stroke-width="0.9" fill="none" stroke-linecap="round"/>
<polygon points="819.1,329.8 817.4,327.8 849.7,310.5 850.8,312.6" fill="#5b87d3" stroke="#5b87d3" stroke-width="0.6"/>
<path d="M819.1,329.8L817.4,327.8M849.7,310.5L850.8,312.6" stroke="#0c2f8a" stroke-width="0.9" fill="none" stroke-linecap="round"/>
<path d="M817.4,327.8L849.7,310.5" stroke="#0c2f8a" stroke-width="0.8" fill="none"/>
<polygon points="814.7,326.9 812.2,326.5 844.7,308.3 847.2,309.2" fill="#719de6" stroke="#719de6" stroke-width="0.6"/>
<path d="M814.7,326.9L812.2,326.5M844.7,308.3L847.2,309.2" stroke="#0c2f8a" stroke-width="0.9" fill="none" stroke-linecap="round"/>
<polygon points="817.4,327.8 814.7,326.9 847.2,309.2 849.7,310.5" fill="#75a1e9" stroke="#75a1e9" stroke-width="0.6"/>
<path d="M817.4,327.8L814.7,326.9M847.2,309.2L849.7,310.5" stroke="#0c2f8a" stroke-width="0.9" fill="none" stroke-linecap="round"/>
<path d="M817.4,327.8L849.7,310.5" stroke="#0c2f8a" stroke-width="0.8" fill="none"/>
<polygon points="849.1,340.2 848.3,338.1 878.7,326.0 878.7,328.0" fill="#4a76c5" stroke="#4a76c5" stroke-width="0.6"/>
<path d="M849.1,340.2L848.3,338.1M878.7,326.0L878.7,328.0" stroke="#0c2f8a" stroke-width="0.9" fill="none" stroke-linecap="round"/>
<path d="M848.3,338.1L878.7,326.0" stroke="#0c2f8a" stroke-width="0.8" fill="none"/>
<polygon points="838.3,333.8 836.4,334.7 867.3,320.6 869.7,320.2" fill="#3965b6" stroke="#3965b6" stroke-width="0.6"/>
<path d="M838.3,333.8L836.4,334.7M867.3,320.6L869.7,320.2" stroke="#0c2f8a" stroke-width="0.9" fill="none" stroke-linecap="round"/>
<path d="M838.3,333.8L869.7,320.2" stroke="#0c2f8a" stroke-width="0.8" fill="none"/>
<polygon points="848.3,338.1 845.9,336.6 876.7,324.2 878.7,326.0" fill="#74a0e9" stroke="#74a0e9" stroke-width="0.6"/>
<path d="M848.3,338.1L845.9,336.6M876.7,324.2L878.7,326.0" stroke="#0c2f8a" stroke-width="0.9" fill="none" stroke-linecap="round"/>
<path d="M848.3,338.1L878.7,326.0" stroke="#0c2f8a" stroke-width="0.8" fill="none"/>
<polygon points="845.9,336.6 843.5,335.5 874.5,322.8 876.7,324.2" fill="#76a2ea" stroke="#76a2ea" stroke-width="0.6"/>
<path d="M845.9,336.6L843.5,335.5M874.5,322.8L876.7,324.2" stroke="#0c2f8a" stroke-width="0.9" fill="none" stroke-linecap="round"/>
<polygon points="841.0,334.5 838.3,333.8 869.7,320.2 872.3,321.3" fill="#75a1e9" stroke="#75a1e9" stroke-width="0.6"/>
<path d="M841.0,334.5L838.3,333.8M869.7,320.2L872.3,321.3" stroke="#0c2f8a" stroke-width="0.9" fill="none" stroke-linecap="round"/>
<path d="M838.3,333.8L869.7,320.2" stroke="#0c2f8a" stroke-width="0.8" fill="none"/>
<polygon points="843.5,335.5 841.0,334.5 872.3,321.3 874.5,322.8" fill="#76a2ea" stroke="#76a2ea" stroke-width="0.6"/>
<path d="M843.5,335.5L841.0,334.5M872.3,321.3L874.5,322.8" stroke="#0c2f8a" stroke-width="0.9" fill="none" stroke-linecap="round"/>
<polygon points="696.0,306.3 693.1,305.1 692.6,304.2 692.5,302.0 692.5,298.9 692.3,295.4 691.7,292.3 690.5,290.2 687.8,289.0 685.3,288.2 682.8,287.5 680.1,287.2 678.7,288.4 677.7,291.0 677.0,294.3 676.5,297.3 676.2,299.3 675.5,299.9 672.6,299.4 669.7,299.0 668.8,298.2 667.6,295.9 665.8,292.5 663.7,288.8 661.6,285.7 659.5,283.9 656.8,283.4 654.4,283.3 652.0,283.3 649.7,283.7 649.3,285.5 649.9,288.6 651.2,292.3 652.5,295.7 653.3,298.0 653.2,298.8 650.6,299.1 648.1,299.6 647.0,298.9 644.7,296.9 641.5,293.8 637.8,290.5 634.5,287.8 631.8,286.5 629.4,286.8 627.5,287.5 625.7,288.2 624.2,289.3 624.8,291.4 627.0,294.5 630.0,298.0 632.9,301.2 634.8,303.4 635.1,304.4 633.3,305.5 631.6,306.7 630.4,306.4 627.5,304.9 623.3,302.6 618.6,300.2 614.5,298.4 611.7,297.8 610.0,298.8 608.9,300.1 607.9,301.4 607.3,303.1 609.0,305.1 612.4,307.7 616.7,310.6 620.6,313.2 623.4,314.9 624.1,315.8 623.3,317.6 622.7,319.4 621.6,319.5 618.5,318.7 613.9,317.5 609.0,316.4 604.8,315.7 602.3,315.9 601.5,317.5 601.4,319.2 601.3,320.9 601.8,322.9 604.2,324.6 608.3,326.4 613.2,328.1 617.7,329.6 620.8,330.7 621.9,331.4 622.2,333.5 622.7,335.7 621.9,336.1 619.0,336.2 614.9,336.3 610.3,336.6 606.7,337.2 604.9,338.1 605.2,340.1 606.0,342.0 606.9,343.8 608.4,345.8 611.1,346.9 615.3,347.5 620.1,347.9 624.5,348.2 627.4,348.4 628.7,348.8 630.1,350.9 631.7,353.1 631.3,353.8 629.1,354.8 625.9,356.2 622.6,357.8 620.0,359.5 619.1,361.1 620.5,363.1 622.1,364.9 623.8,366.6 626.1,368.3 628.8,368.6 632.4,368.0 636.4,366.9 639.9,365.9 642.3,365.2 643.5,365.3 645.9,367.1 648.3,368.9 648.3,369.8 647.2,371.5 645.5,374.0 643.8,376.8 642.7,379.4 642.9,381.4 645.0,383.1 647.3,384.5 649.6,385.8 652.2,386.9 654.5,386.4 657.0,384.6 659.5,382.3 661.7,380.1 663.2,378.6 664.2,378.4 667.0,379.7 669.9,380.9 670.4,381.8 670.5,384.0 670.5,387.1 670.7,390.6 671.3,393.7 672.5,395.8 675.2,397.0 677.7,397.8 680.2,398.5 682.9,398.8 684.3,397.6 685.3,395.0 686.0,391.7 686.5,388.7 686.8,386.7 687.5,386.1 690.4,386.6 693.3,387.0 694.2,387.8 695.4,390.1 697.2,393.5 699.3,397.2 701.4,400.3 703.5,402.1 706.2,402.6 708.6,402.7 711.0,402.7 713.3,402.3 713.7,400.5 713.1,397.4 711.8,393.7 710.5,390.3 709.7,388.0 709.8,387.2 712.4,386.9 714.9,386.4 716.0,387.1 718.3,389.1 721.5,392.2 725.2,395.5 728.5,398.2 731.2,399.5 733.6,399.2 735.5,398.5 737.3,397.8 738.8,396.7 738.2,394.6 736.0,391.5 733.0,388.0 730.1,384.8 728.2,382.6 727.9,381.6 729.7,380.5 731.4,379.3 732.6,379.6 735.5,381.1 739.7,383.4 744.4,385.8 748.5,387.6 751.3,388.2 753.0,387.2 754.1,385.9 755.1,384.6 755.7,382.9 754.0,380.9 750.6,378.3 746.3,375.4 742.4,372.8 739.6,371.1 738.9,370.2 739.7,368.4 740.3,366.6 741.4,366.5 744.5,367.3 749.1,368.5 754.0,369.6 758.2,370.3 760.7,370.1 761.5,368.5 761.6,366.8 761.7,365.1 761.2,363.1 758.8,361.4 754.7,359.6 749.8,357.9 745.3,356.4 742.2,355.3 741.1,354.6 740.8,352.5 740.3,350.3 741.1,349.9 744.0,349.8 748.1,349.7 752.7,349.4 756.3,348.8 758.1,347.9 757.8,345.9 757.0,344.0 756.1,342.2 754.6,340.2 751.9,339.1 747.7,338.5 742.9,338.1 738.5,337.8 735.6,337.6 734.3,337.2 732.9,335.1 731.3,332.9 731.7,332.2 733.9,331.2 737.1,329.8 740.4,328.2 743.0,326.5 743.9,324.9 742.5,322.9 740.9,321.1 739.2,319.4 736.9,317.7 734.2,317.4 730.6,318.0 726.6,319.1 723.1,320.1 720.7,320.8 719.5,320.7 717.1,318.9 714.7,317.1 714.7,316.2 715.8,314.5 717.5,312.0 719.2,309.2 720.3,306.6 720.1,304.6 718.0,302.9 715.7,301.5 713.4,300.2 710.8,299.1 708.5,299.6 706.0,301.4 703.5,303.7 701.3,305.9 699.8,307.4 698.8,307.6" fill="#4573c4"/>
<polygon points="765.1,367.7 765.1,369.8 764.1,370.0 761.0,369.7 756.6,369.2 751.8,368.8 747.8,368.8 745.6,369.4 745.4,371.2 745.8,373.0 746.2,374.9 747.3,376.9 749.9,378.3 754.1,379.5 759.1,380.5 763.6,381.4 766.7,382.0 767.9,382.6 768.8,384.8 769.9,387.0 769.3,387.5 766.8,388.1 763.0,388.9 759.1,390.0 756.0,391.1 754.6,392.5 755.4,394.5 756.7,396.3 758.1,398.2 760.0,400.0 762.8,400.7 766.8,400.7 771.2,400.3 775.2,399.8 777.9,399.5 779.2,399.8 781.1,401.9 783.2,403.9 783.0,404.7 781.3,406.1 778.9,408.1 776.4,410.4 774.6,412.6 774.3,414.4 776.0,416.3 778.1,417.9 780.1,419.5 782.6,420.8 785.2,420.7 788.3,419.5 791.5,417.7 794.4,416.0 796.3,414.9 797.4,414.8 800.1,416.4 802.8,417.9 803.1,418.8 802.6,420.8 801.8,423.7 801.1,426.9 800.9,429.8 801.7,431.9 804.1,433.4 806.5,434.5 809.0,435.5 811.7,436.2 813.6,435.3 815.3,433.0 816.9,430.2 818.2,427.5 819.1,425.7 819.9,425.2 822.9,426.1 825.8,426.9 826.5,427.8 827.2,430.1 828.2,433.4 829.4,437.1 830.9,440.2 832.6,442.2 835.3,443.1 837.8,443.5 840.3,443.8 842.8,443.8 843.8,442.2 843.9,439.3 843.6,435.7 843.1,432.5 842.8,430.3 843.2,429.5 845.9,429.6 848.7,429.6 849.7,430.3 851.5,432.5 854.1,435.8 857.1,439.3 860.0,442.3 862.4,443.8 865.0,443.9 867.2,443.6 869.3,443.2 871.2,442.4 871.1,440.4 869.6,437.3 867.4,433.6 865.2,430.3 863.7,428.0 863.6,427.1 865.8,426.3 867.9,425.4 869.2,425.9 871.8,427.7 875.6,430.4 879.9,433.3 883.7,435.6 886.5,436.5 888.6,435.8 890.1,434.8 891.5,433.8 892.6,432.3 891.4,430.2 888.5,427.3 884.7,424.0 881.2,421.1 878.8,419.1 878.2,418.2 879.5,416.7 880.7,415.1 881.9,415.2 884.9,416.4 889.4,418.1 894.3,419.9 898.6,421.2 901.2,421.3 902.5,420.0 903.1,418.4 903.6,416.9 903.6,415.0 901.6,413.1 897.7,410.9 893.0,408.5 888.6,406.5 885.7,405.1 884.7,404.3 884.9,402.3 884.9,400.2 885.9,400.0 889.0,400.3 893.4,400.8 898.2,401.2 902.2,401.2 904.4,400.6 904.6,398.8 904.2,397.0 903.8,395.1 902.7,393.1 900.1,391.7 895.9,390.5 890.9,389.5 886.4,388.6 883.3,388.0 882.1,387.4 881.2,385.2 880.1,383.0 880.7,382.5 883.2,381.9 887.0,381.1 890.9,380.0 894.0,378.9 895.4,377.5 894.6,375.5 893.3,373.7 891.9,371.8 890.0,370.0 887.2,369.3 883.2,369.3 878.8,369.7 874.8,370.2 872.1,370.5 870.8,370.2 868.9,368.1 866.8,366.1 867.0,365.3 868.7,363.9 871.1,361.9 873.6,359.6 875.4,357.4 875.7,355.6 874.0,353.7 871.9,352.1 869.9,350.5 867.4,349.2 864.8,349.3 861.7,350.5 858.5,352.3 855.6,354.0 853.7,355.1 852.6,355.2 849.9,353.6 847.2,352.1 846.9,351.2 847.4,349.2 848.2,346.3 848.9,343.1 849.1,340.2 848.3,338.1 845.9,336.6 843.5,335.5 841.0,334.5 838.3,333.8 836.4,334.7 834.7,337.0 833.1,339.8 831.8,342.5 830.9,344.3 830.1,344.8 827.1,343.9 824.2,343.1 823.5,342.2 822.8,339.9 821.8,336.6 820.6,332.9 819.1,329.8 817.4,327.8 814.7,326.9 812.2,326.5 809.7,326.2 807.2,326.2 806.2,327.8 806.1,330.7 806.4,334.3 806.9,337.5 807.2,339.7 806.8,340.5 804.1,340.4 801.3,340.4 800.3,339.7 798.5,337.5 795.9,334.2 792.9,330.7 790.0,327.7 787.6,326.2 785.0,326.1 782.8,326.4 780.7,326.8 778.8,327.6 778.9,329.6 780.4,332.7 782.6,336.4 784.8,339.7 786.3,342.0 786.4,342.9 784.2,343.7 782.1,344.6 780.8,344.1 778.2,342.3 774.4,339.6 770.1,336.7 766.3,334.4 763.5,333.5 761.4,334.2 759.9,335.2 758.5,336.2 757.4,337.7 758.6,339.8 761.5,342.7 765.3,346.0 768.8,348.9 771.2,350.9 771.8,351.8 770.5,353.3 769.3,354.9 768.1,354.8 765.1,353.6 760.6,351.9 755.7,350.1 751.4,348.8 748.8,348.7 747.5,350.0 746.9,351.6 746.4,353.1 746.4,355.0 748.4,356.9 752.3,359.1 757.0,361.5 761.4,363.5 764.3,364.9 765.3,365.7" fill="#4573c4"/>
<path d="M654.5,386.4L657.0,384.6M682.9,398.8L684.3,397.6M657.0,384.6L659.5,382.3M684.3,397.6L685.3,395.0M659.5,382.3L661.7,380.1M685.3,395.0L686.0,391.7M661.7,380.1L663.2,378.6M686.0,391.7L686.5,388.7M686.5,388.7L686.8,386.7M686.8,386.7L687.5,386.1M713.3,402.3L713.7,400.5M713.7,400.5L713.1,397.4M610.3,336.6L606.7,337.2M713.1,397.4L711.8,393.7M614.9,336.3L610.3,336.6M711.8,393.7L710.5,390.3M619.0,336.2L614.9,336.3M710.5,390.3L709.7,388.0M709.7,388.0L709.8,387.2M621.9,336.1L619.0,336.2M738.8,396.7L738.2,394.6M738.2,394.6L736.0,391.5M604.8,315.7L602.3,315.9M736.0,391.5L733.0,388.0M609.0,316.4L604.8,315.7M733.0,388.0L730.1,384.8M613.9,317.5L609.0,316.4M730.1,384.8L728.2,382.6M728.2,382.6L727.9,381.6M618.5,318.7L613.9,317.5M621.6,319.5L618.5,318.7M622.7,319.4L621.6,319.5M608.9,300.1L607.9,301.4M755.1,384.6L755.7,382.9M610.0,298.8L608.9,300.1M755.7,382.9L754.0,380.9M754.0,380.9L750.6,378.3M750.6,378.3L746.3,375.4M611.7,297.8L610.0,298.8M746.3,375.4L742.4,372.8M742.4,372.8L739.6,371.1M739.6,371.1L738.9,370.2M614.5,298.4L611.7,297.8M738.9,370.2L739.7,368.4M618.6,300.2L614.5,298.4M623.3,302.6L618.6,300.2M627.5,304.9L623.3,302.6M630.4,306.4L627.5,304.9M631.6,306.7L630.4,306.4M739.7,368.4L740.3,366.6M633.3,305.5L631.6,306.7M635.1,304.4L633.3,305.5M760.7,370.1L761.5,368.5M761.5,368.5L761.6,366.8M625.7,288.2L624.2,289.3M742.2,355.3L741.1,354.6M745.3,356.4L742.2,355.3M761.6,366.8L761.7,365.1M741.1,354.6L740.8,352.5M749.8,357.9L745.3,356.4M627.5,287.5L625.7,288.2M648.1,299.6L647.0,298.9M761.7,365.1L761.2,363.1M754.7,359.6L749.8,357.9M647.0,298.9L644.7,296.9M740.8,352.5L740.3,350.3M650.6,299.1L648.1,299.6M758.8,361.4L754.7,359.6M761.2,363.1L758.8,361.4M629.4,286.8L627.5,287.5M644.7,296.9L641.5,293.8M641.5,293.8L637.8,290.5M653.2,298.8L650.6,299.1M631.8,286.5L629.4,286.8M637.8,290.5L634.5,287.8M634.5,287.8L631.8,286.5M653.3,298.0L653.2,298.8M735.6,337.6L734.3,337.2M734.3,337.2L732.9,335.1M738.5,337.8L735.6,337.6M669.7,299.0L668.8,298.2M732.9,335.1L731.3,332.9M672.6,299.4L669.7,299.0M668.8,298.2L667.6,295.9M742.9,338.1L738.5,337.8M675.5,299.9L672.6,299.4M758.1,347.9L757.8,345.9M649.7,283.7L649.3,285.5M676.2,299.3L675.5,299.9M667.6,295.9L665.8,292.5M747.7,338.5L742.9,338.1M757.8,345.9L757.0,344.0M676.5,297.3L676.2,299.3M652.0,283.3L649.7,283.7M757.0,344.0L756.1,342.2M665.8,292.5L663.7,288.8M751.9,339.1L747.7,338.5M654.4,283.3L652.0,283.3M756.1,342.2L754.6,340.2M719.5,320.7L717.1,318.9M720.7,320.8L719.5,320.7M754.6,340.2L751.9,339.1M677.0,294.3L676.5,297.3M717.1,318.9L714.7,317.1M696.0,306.3L693.1,305.1M693.1,305.1L692.6,304.2M656.8,283.4L654.4,283.3M663.7,288.8L661.6,285.7M698.8,307.6L696.0,306.3M714.7,317.1L714.7,316.2M723.1,320.1L720.7,320.8M699.8,307.4L698.8,307.6M659.5,283.9L656.8,283.4M692.6,304.2L692.5,302.0M661.6,285.7L659.5,283.9M701.3,305.9L699.8,307.4M677.7,291.0L677.0,294.3M726.6,319.1L723.1,320.1M703.5,303.7L701.3,305.9M730.6,318.0L726.6,319.1M678.7,288.4L677.7,291.0M706.0,301.4L703.5,303.7M680.1,287.2L678.7,288.4M734.2,317.4L730.6,318.0M743.9,324.9L742.5,322.9M692.3,295.4L691.7,292.3M742.5,322.9L740.9,321.1M682.8,287.5L680.1,287.2M740.9,321.1L739.2,319.4M736.9,317.7L734.2,317.4M685.3,288.2L682.8,287.5M739.2,319.4L736.9,317.7M708.5,299.6L706.0,301.4M691.7,292.3L690.5,290.2M687.8,289.0L685.3,288.2M690.5,290.2L687.8,289.0M720.3,306.6L720.1,304.6M710.8,299.1L708.5,299.6M720.1,304.6L718.0,302.9M713.4,300.2L710.8,299.1M718.0,302.9L715.7,301.5M715.7,301.5L713.4,300.2" stroke="#0c2f8a" stroke-width="0.8" fill="none" stroke-linecap="round" stroke-opacity="0.9"/>
<path d="M800.9,429.8L801.7,431.9M801.1,426.9L800.9,429.8M829.4,437.1L830.9,440.2M801.8,423.7L801.1,426.9M828.2,433.4L829.4,437.1M774.6,412.6L774.3,414.4M827.2,430.1L828.2,433.4M802.6,420.8L801.8,423.7M776.4,410.4L774.6,412.6M826.5,427.8L827.2,430.1M803.1,418.8L802.6,420.8M778.9,408.1L776.4,410.4M781.3,406.1L778.9,408.1M783.0,404.7L781.3,406.1M783.2,403.9L783.0,404.7M869.6,437.3L867.4,433.6M756.0,391.1L754.6,392.5M867.4,433.6L865.2,430.3M759.1,390.0L756.0,391.1M865.2,430.3L863.7,428.0M763.0,388.9L759.1,390.0M766.8,388.1L763.0,388.9M769.3,387.5L766.8,388.1M769.9,387.0L769.3,387.5M892.6,432.3L891.4,430.2M891.4,430.2L888.5,427.3M888.5,427.3L884.7,424.0M884.7,424.0L881.2,421.1M881.2,421.1L878.8,419.1M745.6,369.4L745.4,371.2M878.8,419.1L878.2,418.2M747.8,368.8L745.6,369.4M751.8,368.8L747.8,368.8M756.6,369.2L751.8,368.8M761.0,369.7L756.6,369.2M764.1,370.0L761.0,369.7M765.1,369.8L764.1,370.0M903.6,416.9L903.6,415.0M903.6,415.0L901.6,413.1M901.6,413.1L897.7,410.9M897.7,410.9L893.0,408.5M893.0,408.5L888.6,406.5M888.6,406.5L885.7,405.1M885.7,405.1L884.7,404.3M884.7,404.3L884.9,402.3M746.9,351.6L746.4,353.1M884.9,402.3L884.9,400.2M747.5,350.0L746.9,351.6M748.8,348.7L747.5,350.0M751.4,348.8L748.8,348.7M755.7,350.1L751.4,348.8M768.1,354.8L765.1,353.6M765.1,353.6L760.6,351.9M760.6,351.9L755.7,350.1M769.3,354.9L768.1,354.8M770.5,353.3L769.3,354.9M771.8,351.8L770.5,353.3M904.4,400.6L904.6,398.8M904.6,398.8L904.2,397.0M904.2,397.0L903.8,395.1M883.3,388.0L882.1,387.4M886.4,388.6L883.3,388.0M890.9,389.5L886.4,388.6M882.1,387.4L881.2,385.2M903.8,395.1L902.7,393.1M895.9,390.5L890.9,389.5M902.7,393.1L900.1,391.7M900.1,391.7L895.9,390.5M881.2,385.2L880.1,383.0M758.5,336.2L757.4,337.7M782.1,344.6L780.8,344.1M780.8,344.1L778.2,342.3M759.9,335.2L758.5,336.2M784.2,343.7L782.1,344.6M778.2,342.3L774.4,339.6M761.4,334.2L759.9,335.2M786.4,342.9L784.2,343.7M774.4,339.6L770.1,336.7M763.5,333.5L761.4,334.2M770.1,336.7L766.3,334.4M766.3,334.4L763.5,333.5M872.1,370.5L870.8,370.2M870.8,370.2L868.9,368.1M894.0,378.9L895.4,377.5M874.8,370.2L872.1,370.5M868.9,368.1L866.8,366.1M878.8,369.7L874.8,370.2M895.4,377.5L894.6,375.5M866.8,366.1L867.0,365.3M894.6,375.5L893.3,373.7M883.2,369.3L878.8,369.7M867.0,365.3L868.7,363.9M801.3,340.4L800.3,339.7M804.1,340.4L801.3,340.4M893.3,373.7L891.9,371.8M800.3,339.7L798.5,337.5M806.8,340.5L804.1,340.4M887.2,369.3L883.2,369.3M891.9,371.8L890.0,370.0M868.7,363.9L871.1,361.9M890.0,370.0L887.2,369.3M798.5,337.5L795.9,334.2M853.7,355.1L852.6,355.2M852.6,355.2L849.9,353.6M849.9,353.6L847.2,352.1M855.6,354.0L853.7,355.1M780.7,326.8L778.8,327.6M795.9,334.2L792.9,330.7M847.2,352.1L846.9,351.2M871.1,361.9L873.6,359.6M827.1,343.9L824.2,343.1M824.2,343.1L823.5,342.2M830.1,344.8L827.1,343.9M830.9,344.3L830.1,344.8M782.8,326.4L780.7,326.8M846.9,351.2L847.4,349.2M823.5,342.2L822.8,339.9M792.9,330.7L790.0,327.7M858.5,352.3L855.6,354.0M785.0,326.1L782.8,326.4M873.6,359.6L875.4,357.4M787.6,326.2L785.0,326.1M790.0,327.7L787.6,326.2M847.4,349.2L848.2,346.3M822.8,339.9L821.8,336.6M861.7,350.5L858.5,352.3M875.4,357.4L875.7,355.6M875.7,355.6L874.0,353.7M821.8,336.6L820.6,332.9M848.2,346.3L848.9,343.1M864.8,349.3L861.7,350.5M874.0,353.7L871.9,352.1M871.9,352.1L869.9,350.5M867.4,349.2L864.8,349.3M869.9,350.5L867.4,349.2M820.6,332.9L819.1,329.8M848.9,343.1L849.1,340.2M809.7,326.2L807.2,326.2M812.2,326.5L809.7,326.2M819.1,329.8L817.4,327.8M814.7,326.9L812.2,326.5M817.4,327.8L814.7,326.9M849.1,340.2L848.3,338.1M838.3,333.8L836.4,334.7M848.3,338.1L845.9,336.6M845.9,336.6L843.5,335.5M841.0,334.5L838.3,333.8M843.5,335.5L841.0,334.5" stroke="#0c2f8a" stroke-width="0.8" fill="none" stroke-linecap="round" stroke-opacity="0.9"/>
<polygon points="692.6,348.0 693.0,346.8 693.1,345.5 693.0,344.2 692.7,342.8 692.1,341.4 691.3,339.9 690.3,338.6 689.0,337.2 687.6,335.9 686.0,334.8 684.3,333.7 682.5,332.8 680.7,332.0 678.8,331.4 676.9,331.0 675.0,330.7 673.1,330.6 671.4,330.7 669.8,331.0 668.3,331.5 667.1,332.1 666.0,332.9 665.1,333.9 664.4,335.0 655.2,354.9 654.8,356.1 654.6,357.4 654.7,358.7 655.1,360.1 655.6,361.6 656.5,363.0 657.5,364.4 658.7,365.7 660.1,367.0 661.7,368.2 663.4,369.2 665.2,370.2 667.1,370.9 669.0,371.5 670.9,372.0 672.8,372.2 674.6,372.3 676.3,372.2 678.0,371.9 679.4,371.4 680.7,370.8 681.8,370.0 682.7,369.0 683.3,368.0" fill="url(#gStub)"/>
<polygon points="683.3,368.0 683.7,366.8 683.9,365.5 683.8,364.1 683.5,362.7 682.9,361.3 682.1,359.9 681.0,358.5 679.8,357.1 678.4,355.9 676.8,354.7 675.1,353.6 673.3,352.7 671.4,351.9 669.5,351.3 667.6,350.9 665.7,350.6 663.9,350.5 662.2,350.7 660.6,351.0 659.1,351.4 657.8,352.1 656.7,352.9 655.8,353.8 655.2,354.9 654.8,356.1 654.6,357.4 654.7,358.7 655.1,360.1 655.6,361.6 656.5,363.0 657.5,364.4 658.7,365.7 660.1,367.0 661.7,368.2 663.4,369.2 665.2,370.2 667.1,370.9 669.0,371.5 670.9,372.0 672.8,372.2 674.6,372.3 676.3,372.2 678.0,371.9 679.4,371.4 680.7,370.8 681.8,370.0 682.7,369.0 683.3,368.0" fill="#4573c4"/>
<polyline points="683.3,368.0 683.7,366.8 683.9,365.5 683.8,364.1 683.5,362.7 682.9,361.3 682.1,359.9 681.0,358.5 679.8,357.1 678.4,355.9 676.8,354.7 675.1,353.6 673.3,352.7 671.4,351.9 669.5,351.3 667.6,350.9 665.7,350.6 663.9,350.5 662.2,350.7 660.6,351.0 659.1,351.4 657.8,352.1 656.7,352.9 655.8,353.8 655.2,354.9" fill="none" stroke="#0c2f8a" stroke-width="1"/>
<polygon points="692.6,348.0 693.0,346.8 693.1,345.5 693.0,344.2 692.7,342.8 692.1,341.4 691.3,339.9 690.3,338.6 689.0,337.2 687.6,335.9 686.0,334.8 684.3,333.7 682.5,332.8 680.7,332.0 678.8,331.4 676.9,331.0 675.0,330.7 673.1,330.6 671.4,330.7 669.8,331.0 668.3,331.5 667.1,332.1 666.0,332.9 665.1,333.9 664.4,335.0 655.2,354.9 654.8,356.1 654.6,357.4 654.7,358.7 655.1,360.1 655.6,361.6 656.5,363.0 657.5,364.4 658.7,365.7 660.1,367.0 661.7,368.2 663.4,369.2 665.2,370.2 667.1,370.9 669.0,371.5 670.9,372.0 672.8,372.2 674.6,372.3 676.3,372.2 678.0,371.9 679.4,371.4 680.7,370.8 681.8,370.0 682.7,369.0 683.3,368.0" fill="none" stroke="#b9cbe8" stroke-opacity="0.75" stroke-width="2.6" stroke-linejoin="round"/>
<polygon points="838.6,390.5 839.0,389.3 839.1,388.0 839.0,386.7 838.7,385.3 838.1,383.9 837.3,382.4 836.3,381.1 835.0,379.7 833.6,378.4 832.0,377.3 830.3,376.2 828.5,375.3 826.7,374.5 824.8,373.9 822.9,373.5 821.0,373.2 819.1,373.1 817.4,373.2 815.8,373.5 814.3,374.0 813.1,374.6 812.0,375.4 811.1,376.4 810.4,377.5 800.5,398.8 800.1,400.0 800.0,401.3 800.1,402.7 800.4,404.1 801.0,405.5 801.8,406.9 802.8,408.3 804.1,409.6 805.5,410.9 807.1,412.1 808.8,413.1 810.6,414.1 812.4,414.9 814.3,415.5 816.2,415.9 818.1,416.2 820.0,416.2 821.7,416.1 823.3,415.8 824.8,415.4 826.0,414.7 827.1,413.9 828.0,413.0 828.7,411.9" fill="url(#gStub)"/>
<polygon points="828.7,411.9 829.1,410.7 829.2,409.4 829.1,408.0 828.8,406.6 828.2,405.2 827.4,403.8 826.4,402.4 825.1,401.1 823.7,399.8 822.1,398.6 820.4,397.6 818.6,396.6 816.8,395.9 814.9,395.2 813.0,394.8 811.1,394.5 809.2,394.5 807.5,394.6 805.9,394.9 804.4,395.4 803.2,396.0 802.1,396.8 801.2,397.8 800.5,398.8 800.1,400.0 800.0,401.3 800.1,402.7 800.4,404.1 801.0,405.5 801.8,406.9 802.8,408.3 804.1,409.6 805.5,410.9 807.1,412.1 808.8,413.1 810.6,414.1 812.4,414.9 814.3,415.5 816.2,415.9 818.1,416.2 820.0,416.2 821.7,416.1 823.3,415.8 824.8,415.4 826.0,414.7 827.1,413.9 828.0,413.0 828.7,411.9" fill="#4573c4"/>
<polyline points="828.7,411.9 829.1,410.7 829.2,409.4 829.1,408.0 828.8,406.6 828.2,405.2 827.4,403.8 826.4,402.4 825.1,401.1 823.7,399.8 822.1,398.6 820.4,397.6 818.6,396.6 816.8,395.9 814.9,395.2 813.0,394.8 811.1,394.5 809.2,394.5 807.5,394.6 805.9,394.9 804.4,395.4 803.2,396.0 802.1,396.8 801.2,397.8 800.5,398.8" fill="none" stroke="#0c2f8a" stroke-width="1"/>
<polygon points="838.6,390.5 839.0,389.3 839.1,388.0 839.0,386.7 838.7,385.3 838.1,383.9 837.3,382.4 836.3,381.1 835.0,379.7 833.6,378.4 832.0,377.3 830.3,376.2 828.5,375.3 826.7,374.5 824.8,373.9 822.9,373.5 821.0,373.2 819.1,373.1 817.4,373.2 815.8,373.5 814.3,374.0 813.1,374.6 812.0,375.4 811.1,376.4 810.4,377.5 800.5,398.8 800.1,400.0 800.0,401.3 800.1,402.7 800.4,404.1 801.0,405.5 801.8,406.9 802.8,408.3 804.1,409.6 805.5,410.9 807.1,412.1 808.8,413.1 810.6,414.1 812.4,414.9 814.3,415.5 816.2,415.9 818.1,416.2 820.0,416.2 821.7,416.1 823.3,415.8 824.8,415.4 826.0,414.7 827.1,413.9 828.0,413.0 828.7,411.9" fill="none" stroke="#b9cbe8" stroke-opacity="0.75" stroke-width="2.6" stroke-linejoin="round"/>
<path d="M697.5,266.5 L707.5,268.5 L712.5,278 L716,288 L730,282 L735,286.5" fill="none" stroke="#c3cfe3" stroke-opacity="0.8" stroke-width="2.8" stroke-linejoin="round" stroke-linecap="round"/>
<path d="M707.5,268.5 L712.5,278 L716,288 L730,282 Z" fill="#c3cfe3" fill-opacity="0.45"/>
<path d="M843.8,306.5 L846.6,322 L853.7,325.5 L870.6,318.8 L874,322.5" fill="none" stroke="#c3cfe3" stroke-opacity="0.8" stroke-width="2.8" stroke-linejoin="round" stroke-linecap="round"/>
<path d="M845,308 L846.6,322 L853.7,325.5 L870.6,318.8 Z" fill="#c3cfe3" fill-opacity="0.5"/>
<path d="M759.1,323.5 L753.6,336.2 L748,347.3 L750.4,352 L759.1,360.8 L757.5,365.5 L746.4,365.5 L744,373.5 L754.4,376.7 L748.8,384.6 L740.9,388" fill="none" stroke="#c3cfe3" stroke-opacity="0.85" stroke-width="3.4" stroke-linejoin="round" stroke-linecap="round"/>
<path d="M744,373.5 L754.4,376.7 L748.8,384.6 L740.5,389.5 L741.5,380 Z" fill="#c3cfe3" fill-opacity="0.6"/>
</svg>
<!--ENDMODEL--></div>

<!-- ===== TOOLBAR ===== -->
<div id="toolbar">
  <div class="abs" style="left:-6px;top:5.8px;width:93.4px;height:57.6px;border:2px solid #dddddd;border-radius:5px;"></div>
  <div class="t" id="tDesign" style="left:12px;top:31px;font-weight:bold;">DESIGN</div>
  <div class="arr" style="left:54px;top:35px;"></div>

  <div class="tab" id="tabSolid" style="left:121.2px;top:1px;color:#0696d7;font-weight:bold;">SOLID</div>
  <div class="abs" style="left:108.8px;top:17.4px;width:55.8px;height:3.2px;border-radius:1.6px;background:#0696d7;"></div>
  <div class="tab" id="tabSurface" style="left:198.4px;top:1px;">SURFACE</div>
  <div class="tab" id="tabSheet" style="left:291px;top:1px;">SHEET METAL</div>
  <div class="tab" id="tabTools" style="left:404px;top:1px;">TOOLS</div>

  <div class="t" id="tCreate" style="left:270px;top:62px;">CREATE</div><div class="arr" style="left:312px;top:66px;"></div>
  <div class="t" id="tModify" style="left:645px;top:62px;">MODIFY</div><div class="arr" style="left:686px;top:66px;"></div>
  <div class="abs" style="left:852px;top:59px;width:89px;height:18px;background:#0696d7;"></div>
  <div class="t" id="tAssemble" style="left:864px;top:62px;color:#fff;">ASSEMBLE</div><div class="arr" style="left:922px;top:66px;border-top-color:#fff;"></div>
  <div class="t" id="tConstruct" style="left:959.5px;top:62px;">CONSTRUCT</div><div class="arr" style="left:1024px;top:66px;"></div>
  <div class="t" id="tInspect" style="left:1065px;top:62px;">INSPECT</div><div class="arr" style="left:1109px;top:66px;"></div>
  <div class="t" id="tInsert" style="left:1167.5px;top:62px;">INSERT</div><div class="arr" style="left:1205px;top:66px;"></div>

  <div class="sep" style="left:492px;"></div>
  <div class="sep" style="left:846px;"></div>
  <div class="sep" style="left:944px;"></div>
  <div class="sep" style="left:1043px;"></div>
  <div class="sep" style="left:1140px;"></div>
  <div id="icons">
<!-- icons group A: region [104,20]-[232,60] traced in zoom coords 1231x385 -->
<svg viewBox="0 0 1231 385" style="left:104px;top:20px;width:128px;height:40px;">
  <!-- extrude -->
  <polygon points="40,88 95,32 268,32 212,88" fill="#8ecaf9"/>
  <polygon points="40,88 212,88 212,285 40,285" fill="#6aaee5"/>
  <polygon points="212,88 268,32 268,232 212,285" fill="#4790cf"/>
  <polygon points="40,296 212,296 212,333 40,333" fill="#c3c3c3"/>
  <polygon points="212,296 268,240 268,277 212,333" fill="#a2a2a2"/>
  <rect x="296" y="60" width="12" height="220" fill="#222"/>
  <polygon points="302,36 277,80 327,80" fill="#222"/>
  <!-- revolve -->
  <path d="M730,100 Q590,5 462,88" fill="none" stroke="#333" stroke-width="11"/>
  <polygon points="443,106 455,62 502,92" fill="#222"/>
  <path d="M445,165 Q590,40 745,155 L690,215 Q590,140 500,210 Z" fill="#8ecaf9"/>
  <path d="M500,210 Q590,140 690,215 L690,300 Q590,225 500,305 Z" fill="#6aaee5"/>
  <polygon points="445,165 500,210 500,305 445,258" fill="#4790cf"/>
  <polygon points="696,216 745,166 745,245 696,296" fill="#fff" stroke="#555" stroke-width="11" stroke-linejoin="miter"/>
  <!-- sweep -->
  <path d="M870,105 L930,40 L1025,40 L965,100 L1138,100 Q1155,100 1155,117 L1155,140 L1095,200 L965,200 L1012,138 L870,138 Z" fill="#8ecaf9"/>
  <polygon points="965,100 1025,40 1025,100" fill="#4790cf"/>
  <path d="M868,120 L868,212 Q868,245 902,245 L965,245 L965,200 L1012,138 L868,138 Z" fill="#6aaee5"/>
  <polygon points="1095,200 1155,140 1155,265 1095,322" fill="#4790cf"/>
  <rect x="967" y="206" width="122" height="114" fill="#fff" stroke="#9c9c9c" stroke-width="11"/>
</svg>
<!-- icons group B: region [232,20]-[360,60] -->
<svg viewBox="0 0 1231 385" style="left:232px;top:20px;width:128px;height:40px;">
  <!-- loft -->
  <polygon points="38,30 346,30 346,232 290,270 95,270 38,232" fill="#4790cf"/>
  <polygon points="38,30 346,30 275,185 110,185" fill="#8ecaf9"/>
  <polygon points="38,30 75,30 150,165 110,185" fill="#a9d9fb"/>
  <polygon points="346,30 310,30 235,165 275,185" fill="#a9d9fb"/>
  <circle cx="192" cy="248" r="86" fill="#f6f6f6" stroke="#5a5a5a" stroke-width="7"/>
  <circle cx="192" cy="248" r="93" fill="none" stroke="#f1f1f1" stroke-width="7"/>
  <!-- torus -->
  <ellipse cx="611" cy="188" rx="149" ry="108" fill="#5ea6e3"/>
  <ellipse cx="611" cy="176" rx="147" ry="106" fill="#8ecaf9" stroke="#62aae8" stroke-width="4"/>
  <ellipse cx="611" cy="166" rx="62" ry="42" fill="#5ea6e3"/>
  <ellipse cx="611" cy="175" rx="53" ry="30" fill="#f1f1f1"/>
  <!-- pipe -->
  <path d="M905,165 L1100,88 Q1150,80 1162,130 Q1168,170 1135,190 L945,272 Z" fill="#8ecaf9" stroke="#62aae8" stroke-width="4" stroke-linejoin="round"/>
  <path d="M985,240 L1158,160 Q1150,182 1132,192 L945,272 Z" fill="#62aae8"/>
  <ellipse cx="930" cy="213" rx="52" ry="60" fill="#7bbdf4" stroke="#4f9ade" stroke-width="5" transform="rotate(-22 930 213)"/>
  <ellipse cx="930" cy="212" rx="34" ry="40" fill="#4790cf" stroke="#3f86c6" stroke-width="3" transform="rotate(-22 930 212)"/>
  <ellipse cx="937" cy="219" rx="25" ry="29" fill="#62a9e3" transform="rotate(-22 937 219)"/>
</svg>
<!-- icons group C: region [360,20]-[488,60] -->
<svg viewBox="0 0 1231 385" style="left:360px;top:20px;width:128px;height:40px;">
  <!-- mirror -->
  <polygon points="186,52 186,320 58,320" fill="#fbfbfb" stroke="#5c5c5c" stroke-width="9" stroke-linejoin="miter"/>
  <polygon points="205,42 205,325 345,325" fill="#62aae4"/>
  <!-- form (purple) -->
  <path d="M545,48 L640,48 Q720,60 748,140 L748,250 L690,318 Q670,335 640,335 L535,335 Q465,320 462,270 L462,135 Q475,60 545,48 Z" fill="#9f72dc"/>
  <path d="M545,55 L610,55 L610,80 Q560,80 560,135 L480,135 Q490,70 545,55Z" fill="#c9a0fb"/>
  <path d="M472,140 L472,270 Q480,315 540,325 L640,325 Q670,322 685,305 L685,215 L670,140 Z" fill="#d4b6fa"/>
  <path d="M482,150 Q482,138 495,138 L655,138 L666,212 L666,290 Q655,312 630,312 L530,312 Q485,300 482,265 Z" fill="#a97fe8"/>
  <path d="M560,138 L560,312 M482,218 L666,218" stroke="#8c61ca" stroke-width="7" fill="none"/>
  <path d="M690,205 L748,165 L748,250 L690,318 Z" fill="#8a5fc9"/>
  <path d="M712,195 L725,186 L725,275 L712,290 Z" fill="#7a4fb9"/>
  <polygon points="688,30 704,78 745,58 722,98 768,110 722,124 742,165 702,142 688,190 674,142 632,165 652,124 608,110 652,98 630,58 672,78" fill="#fca400"/>
  <polygon points="688,30 704,78 745,58 722,98 768,110 722,124 742,165 702,142 688,190 674,142 632,165 652,124 608,110 652,98 630,58 672,78" fill="none" stroke="#f1f1f1" stroke-width="5" stroke-opacity="0.6"/>
  <!-- derive (grey box) -->
  <polygon points="878,102 955,32 1180,32 1180,258 1110,330 878,330" fill="#5f5f5f"/>
  <polygon points="886,100 958,40 1172,40 1108,100" fill="#f3f3f3"/>
  <polygon points="886,108 1104,108 1104,322 886,322" fill="#dadada"/>
  <polygon points="1112,104 1172,48 1172,254 1112,318" fill="#b9b9b9"/>
  <circle cx="992" cy="218" r="84" fill="#fafafa" stroke="#5f5f5f" stroke-width="7"/>
  <path d="M978,150 Q940,160 925,205 Q920,260 965,285 Q1020,300 1058,232 Q990,235 978,150 Z" fill="#62aae4"/>
</svg>
<!-- icons group D: region [500,20]-[628,60] : press-pull, offset face, fillet -->
<svg viewBox="0 0 1231 385" style="left:500px;top:20px;width:128px;height:40px;">
  <!-- press pull -->
  <polygon points="158,75 205,30 355,30 310,75" fill="#62aae4"/>
  <polygon points="310,75 355,30 355,185 310,230" fill="#4790cf"/>
  <rect x="52" y="90" width="242" height="240" fill="#fbfbfb" stroke="#5f5f5f" stroke-width="8"/>
  <polygon points="100,138 132,106 278,106 246,138" fill="#8ecaf9"/>
  <polygon points="246,138 278,106 278,252 246,284" fill="#4790cf"/>
  <rect x="101" y="140" width="144" height="143" fill="#f6f6f6" stroke="#5f5f5f" stroke-width="8"/>
  <!-- offset face -->
  <path d="M530,34 L580,34 L580,90 L527,90 L527,330 L476,330 L476,88 Z" fill="#dcdcdc"/>
  <path d="M578,34 L530,34 L476,88 L476,330 L527,330" fill="none" stroke="#5f5f5f" stroke-width="8"/>
  <polygon points="530,34 580,34 580,90 527,90 484,90" fill="#f4f4f4"/>
  <path d="M578,34 L530,34 L476,88" fill="none" stroke="#5f5f5f" stroke-width="8"/>
  <polygon points="540,88 597,30 683,30 626,88" fill="#8ecaf9"/>
  <polygon points="540,88 626,88 626,335 540,335" fill="#6aaee5"/>
  <polygon points="626,88 683,30 683,280 626,335" fill="#4790cf"/>
  <rect x="655" y="165" width="30" height="28" fill="#f1f1f1"/>
  <rect x="668" y="174" width="52" height="9" fill="#222"/>
  <polygon points="750,178 712,154 712,202" fill="#222"/>
  <!-- fillet -->
  <polygon points="878,100 948,32 1040,32 1180,170 1180,262 1110,330 878,330" fill="#5f5f5f"/>
  <polygon points="888,98 952,40 1035,40 990,98" fill="#f6f6f6"/>
  <path d="M886,106 L990,92 Q1108,105 1120,224 L1110,322 Z" fill="#dadada"/>
  <path d="M886,106 L985,106 Q1090,115 1104,250 L1104,322 L886,322 Z" fill="#dadada"/>
  <polygon points="1112,255 1172,185 1172,258 1112,318" fill="#b5b5b5"/>
  <path d="M990,92 L1048,32 Q1165,55 1183,160 L1118,222 Q1100,110 990,92 Z" fill="#62aae4"/>
</svg>
<!-- icons group E: region [628,20]-[756,60] : chamfer, shell, combine -->
<svg viewBox="0 0 1231 385" style="left:628px;top:20px;width:128px;height:40px;">
  <!-- chamfer -->
  <polygon points="60,100 130,32 235,32 362,160 362,262 292,332 60,332" fill="#5f5f5f"/>
  <polygon points="70,98 134,40 218,40 160,98" fill="#f6f6f6"/>
  <polygon points="68,106 150,106 288,240 288,324 68,324" fill="#dadada"/>
  <polygon points="288,240 356,178 356,258 294,322" fill="#b5b5b5"/>
  <polygon points="160,100 232,34 362,160 290,232" fill="#62aae4"/>
  <polygon points="150,106 160,100 290,232 288,240" fill="#dadada"/>
  <!-- shell -->
  <polygon points="472,100 545,30 778,30 778,262 708,332 472,332" fill="#5f5f5f"/>
  <polygon points="482,98 548,38 770,38 706,98" fill="#f4f4f4"/>
  <rect x="480" y="106" width="222" height="218" fill="#dadada"/>
  <polygon points="708,104 770,46 770,258 708,320" fill="#b9b9b9"/>
  <rect x="510" y="143" width="155" height="155" fill="#f4f4f4"/>
  <polygon points="512,145 586,145 586,222 512,296" fill="#4790cf"/>
  <polygon points="512,296 586,222 663,222 663,296" fill="#8ecaf9"/>
  <!-- combine -->
  <polygon points="985,68 1022,30 1192,30 1155,68" fill="#8ecaf9"/>
  <polygon points="1155,68 1192,30 1192,200 1155,238" fill="#4790cf"/>
  <polygon points="886,165 925,127 985,127 985,165" fill="#8ecaf9"/>
  <polygon points="985,68 1155,68 1155,238 1060,238 1060,335 886,335 886,165 985,165" fill="#6aaee5"/>
  <polygon points="1060,238 1098,238 1098,297 1060,335" fill="#4790cf"/>
</svg>
<!-- icons group F: region [756,20]-[852,60] : split body, split face -->
<svg viewBox="0 0 923 385" style="left:756px;top:20px;width:96px;height:40px;">
  <!-- split body -->
  <polygon points="88,90 148,30 355,30 298,90" fill="#8ecaf9"/>
  <polygon points="88,90 298,90 298,180 88,180" fill="#6aaee5"/>
  <polygon points="298,90 355,30 355,122 298,180" fill="#4790cf"/>
  <path d="M68,207 L300,207 L375,130" fill="none" stroke="#1e8be8" stroke-width="9"/>
  <polygon points="90,232 298,232 298,320 90,320" fill="#dcdcdc"/>
  <polygon points="298,232 352,185 352,272 298,320" fill="#b9b9b9"/>
  <path d="M90,232 L90,322 L300,322 L352,274 L352,190" fill="none" stroke="#5f5f5f" stroke-width="7"/>
  <!-- split face -->
  <rect x="503" y="33" width="225" height="140" fill="#6aaee5" stroke="#5a9bd8" stroke-width="5"/>
  <rect x="482" y="181" width="268" height="10" fill="#1e8be8"/>
  <path d="M505,202 L505,322 L727,322 L727,202" fill="#f6f6f6" stroke="#5f5f5f" stroke-width="8"/>
</svg>
<!-- icons group G: region [852,20]-[948,60] : new component, joint -->
<svg viewBox="0 0 1231 513" style="left:852px;top:20px;width:96px;height:40px;">
  <!-- new component -->
  <polygon points="104,145 155,92 305,92 255,145" fill="#8ecaf9"/>
  <polygon points="104,145 255,145 255,292 104,292" fill="#6aaee5"/>
  <polygon points="255,145 305,92 305,240 255,292" fill="#4790cf"/>
  <polygon points="262,292 310,245 458,245 410,292" fill="#f4f4f4"/>
  <polygon points="104,296 410,296 410,442 104,442" fill="#dcdcdc"/>
  <polygon points="410,296 458,250 458,396 410,442" fill="#b9b9b9"/>
  <path d="M104,296 L104,442 L410,442 L458,396 L458,248 L310,248 L262,294 L262,442" fill="none" stroke="#5f5f5f" stroke-width="9"/>
  <polygon points="404,42 424,112 478,80 446,134 510,148 446,164 478,216 424,186 404,252 384,186 330,216 362,164 296,148 362,134 330,80 384,112" fill="#fca400"/>
  <polygon points="404,42 424,112 478,80 446,134 510,148 446,164 478,216 424,186 404,252 384,186 330,216 362,164 296,148 362,134 330,80 384,112" fill="none" stroke="#f1f1f1" stroke-width="7" stroke-opacity="0.7"/>
  <!-- joint -->
  <path d="M685,160 L775,72 Q800,62 832,72 L840,95 L840,205 L778,225 L778,340 L700,405 L685,395 Z" fill="#c6c6c6" stroke="#5f5f5f" stroke-width="9" stroke-linejoin="round"/>
  <path d="M775,78 Q800,66 832,78 L834,200 L780,218 Z" fill="#e2e2e2"/>
  <ellipse cx="803" cy="92" rx="22" ry="8" fill="#8a8a8a"/>
  <rect x="795" y="232" width="11" height="62" fill="#1e8be8"/>
  <path d="M940,100 L955,95 L1030,165 L1030,410 L1015,415 L940,345 L905,340 Q880,335 878,320 L878,205 Q885,185 912,185 L940,190 Z" fill="#dcdcdc" stroke="#5f5f5f" stroke-width="9" stroke-linejoin="round"/>
  <path d="M884,210 L884,318 Q890,330 940,336 L940,215 Z" fill="#c0c0c0"/>
  <ellipse cx="912" cy="202" rx="28" ry="12" fill="#e8e8e8"/>
  <rect x="910" y="142" width="11" height="70" fill="#1e8be8"/>
</svg>
<!-- construct: region [970,20]-[1066,60] traced (scale 12.82), only left part used -->
<svg viewBox="0 0 1231 513" style="left:970px;top:20px;width:96px;height:40px;">
  <polygon points="134,155 247,46 340,46 340,155" fill="#f8f8f8"/>
  <rect x="134" y="155" width="96" height="276" fill="#dcdcdc"/>
  <path d="M335,42 L245,42 L130,155 L130,432 L230,432" fill="none" stroke="#5f5f5f" stroke-width="10"/>
  <polygon points="245,155 358,42 358,318 245,432" fill="#5bc57e"/>
  <polygon points="400,155 512,42 512,318 400,432" fill="#e39a63"/>
</svg>
<!-- inspect: region [1050,20]-[1146,60] -->
<svg viewBox="0 0 1231 513" style="left:1050px;top:20px;width:96px;height:40px;">
  <rect x="103" y="268" width="358" height="76" fill="#fca400"/>
  <rect x="103" y="336" width="358" height="8" fill="#e89500"/>
  <g fill="#6a6a6a">
    <rect x="117" y="270" width="8" height="22"/><rect x="155" y="270" width="8" height="36"/><rect x="194" y="270" width="8" height="22"/>
    <rect x="233" y="270" width="8" height="36"/><rect x="272" y="270" width="8" height="22"/><rect x="311" y="270" width="8" height="36"/>
    <rect x="349" y="270" width="8" height="22"/><rect x="388" y="270" width="8" height="36"/><rect x="427" y="270" width="8" height="22"/>
  </g>
  <rect x="103" y="142" width="10" height="112" fill="#5f5f5f"/>
  <rect x="451" y="142" width="10" height="112" fill="#5f5f5f"/>
  <rect x="150" y="193" width="265" height="11" fill="#6a6a6a"/>
  <polygon points="118,198 165,168 165,228" fill="#6a6a6a"/>
  <polygon points="446,198 399,168 399,228" fill="#6a6a6a"/>
  <!-- section/interference -->
  <path d="M862,96 L996,96 L996,378 L862,378 M862,237 L996,237" fill="none" stroke="#8a8a8a" stroke-width="10"/>
  <rect x="698" y="96" width="140" height="282" fill="#b5d5ee"/>
  <path d="M838,96 L698,96 L698,378 L838,378 M698,237 L838,237" fill="none" stroke="#1e8be8" stroke-width="11"/>
  <rect x="833" y="52" width="11" height="370" fill="#1e8be8"/>
  <path d="M742,56 L659,56 L659,138 M659,335 L659,416 L742,416" fill="none" stroke="#1e8be8" stroke-width="11"/>
</svg>
<!-- insert: region [1135,20]-[1231,60] -->
<svg viewBox="0 0 1231 513" style="left:1135px;top:20px;width:96px;height:40px;">
  <polygon points="297,160 385,66 626,66 626,325 545,406 297,406" fill="#3a3c40"/>
  <polygon points="310,160 390,76 616,76 540,160" fill="#fdfdfd"/>
  <polygon points="306,170 528,170 528,396 306,396" fill="#e1e2e6"/>
  <polygon points="542,168 616,90 616,320 542,394" fill="#c8cad2"/>
  <rect x="528" y="166" width="14" height="232" fill="#f4f4f6"/>
  <path d="M240,335 Q270,270 348,262 L348,205 L455,275 L348,362 L348,315 Q290,305 240,335 Z" fill="#3a3c40" stroke="#f4f4f4" stroke-width="6" stroke-opacity="0.9" paint-order="stroke"/>
  <!-- picture -->
  <rect x="795" y="52" width="372" height="370" fill="#87cbfc"/>
  <path d="M795,300 Q870,200 912,205 Q950,210 1035,335 Q1080,280 1100,285 Q1130,290 1167,350 L1167,422 L795,422 Z" fill="#3f91cf"/>
  <circle cx="1064" cy="153" r="40" fill="#fdfcc0"/>
  <rect x="798" y="55" width="366" height="364" fill="none" stroke="#3f91cf" stroke-width="6"/>
</svg>
<!--ICONS_END-->
</div>
</div>

<!-- ===== BROWSER ===== -->
<div id="browser">
  <div class="abs" style="left:-2px;top:82px;width:274px;height:23px;background:#f0f0f0;border:1px solid #c8c8c8;"></div>
  <div class="t" id="tBrowser" style="left:-0.3px;top:88px;color:#444;">BROWSER</div>
  <div class="abs" style="left:253px;top:90px;width:9px;height:9px;border-radius:50%;background:#333;"></div>
  <div class="abs" style="left:255px;top:94px;width:5px;height:1.5px;background:#eee;"></div>
  <div class="abs" style="left:269px;top:89px;width:1px;height:11px;background:#666;"></div>
  <div class="abs" style="left:271px;top:91px;width:1px;height:7px;background:#777;"></div>
  <div class="row" style="left:10px;top:112px;width:148px;background:#f0f0f0;"></div>
  <div class="abs" style="left:35px;top:114px;width:98px;height:16px;background:#9b9b9b;"></div>
  <div class="rt" id="rUnsaved" style="left:68px;top:112px;color:#fff;font-weight:bold;">(Unsaved)</div>
  <div class="row" style="left:28px;top:136px;width:134px;background:#f0f0f0;"></div>
  <div class="rt" id="rDoc" style="left:61.5px;top:136px;">Document Settings</div>
  <div class="row" style="left:28px;top:160px;width:110px;background:#f0f0f0;"></div>
  <div class="rt" id="rNamed" style="left:61.5px;top:160px;">Named Views</div>
  <div class="row" style="left:28px;top:184px;width:95px;background:#f0f0f0;"></div>
  <div class="rt" id="rOrigin" style="left:86.6px;top:184px;">Origin</div>
  <div class="row" style="left:28px;top:208px;width:95px;background:#f0f0f0;"></div>
  <div class="rt" id="rJoints" style="left:86px;top:208px;">Joints</div>
  <div class="row" style="left:46px;top:232px;width:91px;background:#c9c9c9;"></div>
  <div class="rt" id="rRev1" style="left:104.6px;top:232px;">Rev1</div>
  <div class="row" style="left:46px;top:256px;width:95px;background:#c9c9c9;"></div>
  <div class="rt" id="rRev2" style="left:104.6px;top:256px;">Rev2</div>
  <div class="row" style="left:46px;top:280px;width:131px;background:#f0f0f0;"></div>
  <div class="rt" id="rMotion" style="left:104.6px;top:280px;">Motion Link 6</div>
  <div class="row" style="left:46px;top:304px;width:110px;background:#0696d7;"></div>
  <div class="rt" id="rRigid" style="left:79.4px;top:304px;color:#fff;font-weight:bold;">RigidGroup7</div>
  <div class="row" style="left:28px;top:328px;width:115px;background:#f0f0f0;"></div>
  <div class="rt" id="rSketches" style="left:86px;top:328px;">Sketches</div>
  <div class="row" style="left:46px;top:352px;width:107px;background:#f0f0f0;"></div>
  <div class="rt" id="rSketch4" style="left:104.6px;top:352px;">Sketch4</div>
  <div class="row" style="left:28px;top:376px;width:207px;background:#f0f0f0;"></div>
  <div class="rt" id="rGearR" style="left:86.5px;top:376px;">Healical Gear (16R@30.00):1</div>
  <div class="row" style="left:28px;top:400px;width:207px;background:#f0f0f0;"></div>
  <div class="rt" id="rGearL" style="left:86.5px;top:400px;">Healical Gear (16L@30.00):1</div>
  <div class="row" style="left:28px;top:424px;width:135px;background:#f0f0f0;"></div>
  <div class="rt" id="rComp" style="left:86.5px;top:424px;">Component5:1</div>
  <div id="bicons"><!--BICONS-->
<svg width="300" height="460" viewBox="0 0 300 460" style="left:0;top:0;">
<defs><linearGradient id="gTri" x1="0" y1="0" x2="1" y2="1"><stop offset="0.3" stop-color="#e8e8e8"/><stop offset="1" stop-color="#3a3a3a"/></linearGradient></defs>
<path d="M-1,116.6 L1.5,116.6 L1.5,127 L-1,127" fill="#888" stroke="#111" stroke-width="1.2"/>
<path d="M13,122 Q17,116.6 21,116.6 Q25,116.6 29,122 Q25,127.4 21,127.4 Q17,127.4 13,122Z" fill="#9c9c9c"/><circle cx="21" cy="122" r="2.6" fill="none" stroke="#f0f0f0" stroke-width="1.3"/>
<path d="M38.6,129 L38.6,117.8 L41.2,115 L47,115 L47,120.6 L53,120.6 L53,126.2 L50.4,129 Z" fill="#f4f4f6" stroke="#333" stroke-width="1.1" stroke-linejoin="round"/>
<path d="M38.6,117.8 L44.4,117.8 L47,115 M44.4,117.8 L44.4,129 M44.4,123.4 L50.4,123.4 L53,120.6 M50.4,123.4 L50.4,129" fill="none" stroke="#c9ccd4" stroke-width="0.9"/>
<circle cx="143.4" cy="122.5" r="6" fill="#fff" stroke="#333" stroke-width="1.2"/><circle cx="143.4" cy="122.5" r="2.3" fill="#333"/>
<path d="M10.4,140.0 L10.4,152.39999999999998 L19.0,146.2 Z" fill="#ececec" stroke="#2e2e2e" stroke-width="1.5" stroke-linejoin="round"/>
<polygon points="46.84,144.51 46.84,147.69 44.67,147.32 43.87,149.24 45.67,150.52 43.42,152.77 42.14,150.97 40.22,151.77 40.59,153.94 37.41,153.94 37.78,151.77 35.86,150.97 34.58,152.77 32.33,150.52 34.13,149.24 33.33,147.32 31.16,147.69 31.16,144.51 33.33,144.88 34.13,142.96 32.33,141.68 34.58,139.43 35.86,141.23 37.78,140.43 37.41,138.26 40.59,138.26 40.22,140.43 42.14,141.23 43.42,139.43 45.67,141.68 43.87,142.96 44.67,144.88" fill="#9c9c9c"/><circle cx="39" cy="146.1" r="2.9" fill="#f0f0f0"/>
<path d="M10.4,164.0 L10.4,176.39999999999998 L19.0,170.2 Z" fill="#ececec" stroke="#2e2e2e" stroke-width="1.5" stroke-linejoin="round"/>
<path d="M31,163.6 L38.5,163.6 L40,165.4 L31,165.4 Z" fill="#9a9a9a"/><path d="M31,166.6 L40.3,166.6 L41.3,164.79999999999998 L46.8,164.79999999999998 L46.8,176.0 L31,176.0 Z" fill="#9a9a9a"/>
<path d="M10.4,188.0 L10.4,200.39999999999998 L19.0,194.2 Z" fill="#ececec" stroke="#2e2e2e" stroke-width="1.5" stroke-linejoin="round"/>
<path d="M31,194 Q35,188.6 39,188.6 Q43,188.6 47,194 Q43,199.4 39,199.4 Q35,199.4 31,194Z" fill="#dedede"/><circle cx="39" cy="194" r="2.6" fill="none" stroke="#f0f0f0" stroke-width="1.2"/><path d="M33,188 L45,200" stroke="#f0f0f0" stroke-width="2.6"/><path d="M33.5,187.5 L45.5,199.5" stroke="#dadada" stroke-width="1"/>
<path d="M56.1,187.7 L63.6,187.7 L65.1,189.5 L56.1,189.5 Z" fill="#9a9a9a"/><path d="M56.1,190.7 L65.4,190.7 L66.4,188.89999999999998 L71.9,188.89999999999998 L71.9,200.1 L56.1,200.1 Z" fill="#9a9a9a"/>
<path d="M9.100000000000001,223.5 L19.9,223.5 L19.9,212.7 Z" fill="url(#gTri)" stroke="#222" stroke-width="1" stroke-linejoin="round"/>
<path d="M31,218 Q35,212.6 39,212.6 Q43,212.6 47,218 Q43,223.4 39,223.4 Q35,223.4 31,218Z" fill="#9c9c9c"/><circle cx="39" cy="218" r="2.6" fill="none" stroke="#f0f0f0" stroke-width="1.3"/>
<path d="M56.1,211.7 L63.6,211.7 L65.1,213.5 L56.1,213.5 Z" fill="#9a9a9a"/><path d="M56.1,214.7 L65.4,214.7 L66.4,212.89999999999998 L71.9,212.89999999999998 L71.9,224.1 L56.1,224.1 Z" fill="#9a9a9a"/>
<polygon points="52.8,226.3 55.4,222.4 57.8,222.4 55.2,226.3" fill="#5d7fb3"/>
<polygon points="58.8,226.3 61.4,222.4 63.8,222.4 61.1,226.3" fill="#5d7fb3"/>
<polygon points="64.7,226.3 67.3,222.4 69.7,222.4 67.1,226.3" fill="#5d7fb3"/>
<polygon points="70.7,226.3 73.2,222.4 75.7,222.4 73.1,226.3" fill="#5d7fb3"/>
<polygon points="76.6,226.3 79.2,222.4 81.6,222.4 79.0,226.3" fill="#5d7fb3"/>
<polygon points="82.5,226.3 85.1,222.4 87.5,222.4 85.0,226.3" fill="#5d7fb3"/>
<polygon points="88.5,226.3 91.1,222.4 93.5,222.4 90.9,226.3" fill="#5d7fb3"/>
<polygon points="94.4,226.3 97.0,222.4 99.4,222.4 96.8,226.3" fill="#5d7fb3"/>
<polygon points="100.4,226.3 103.0,222.4 105.4,222.4 102.8,226.3" fill="#5d7fb3"/>
<polygon points="106.3,226.3 108.9,222.4 111.3,222.4 108.8,226.3" fill="#5d7fb3"/>
<polygon points="112.3,226.3 114.9,222.4 117.3,222.4 114.7,226.3" fill="#5d7fb3"/>
<polygon points="118.2,226.3 120.8,222.4 123.2,222.4 120.7,226.3" fill="#5d7fb3"/>
<path d="M28.1,236.0 L28.1,248.39999999999998 L36.7,242.2 Z" fill="#ececec" stroke="#2e2e2e" stroke-width="1.5" stroke-linejoin="round"/>
<path d="M49,242 Q53,236.6 57,236.6 Q61,236.6 65,242 Q61,247.4 57,247.4 Q53,247.4 49,242Z" fill="#8e8e8e"/><circle cx="57" cy="242" r="2.6" fill="none" stroke="#c9c9c9" stroke-width="1.3"/>
<circle cx="82.1" cy="244.9" r="4.6" fill="#fff" stroke="#333" stroke-width="1.2"/><circle cx="82.1" cy="244.9" r="2.1" fill="#1e8bff"/><path d="M81.3,240.3 L81.3,234.4" stroke="#1e8bff" stroke-width="1.1"/><polygon points="81.1,233.8 86.5,236.4 81.1,239.4" fill="#1e8bff"/>
<path d="M28.1,260.0 L28.1,272.4 L36.7,266.2 Z" fill="#ececec" stroke="#2e2e2e" stroke-width="1.5" stroke-linejoin="round"/>
<path d="M49,266 Q53,260.6 57,260.6 Q61,260.6 65,266 Q61,271.4 57,271.4 Q53,271.4 49,266Z" fill="#8e8e8e"/><circle cx="57" cy="266" r="2.6" fill="none" stroke="#c9c9c9" stroke-width="1.3"/>
<circle cx="82.1" cy="268.9" r="4.6" fill="#fff" stroke="#333" stroke-width="1.2"/><circle cx="82.1" cy="268.9" r="2.1" fill="#1e8bff"/><path d="M81.3,264.29999999999995 L81.3,258.4" stroke="#1e8bff" stroke-width="1.1"/><polygon points="81.1,257.79999999999995 86.5,260.4 81.1,263.4" fill="#1e8bff"/>
<path d="M49,290 Q53,284.6 57,284.6 Q61,284.6 65,290 Q61,295.4 57,295.4 Q53,295.4 49,290Z" fill="#9c9c9c"/><circle cx="57" cy="290" r="2.6" fill="none" stroke="#f0f0f0" stroke-width="1.3"/>
<circle cx="85.7" cy="286.4" r="2.9" fill="#f4f4f4" stroke="#1c2c5c" stroke-width="1"/><circle cx="85.7" cy="286.4" r="0.8" fill="#1c2c5c"/>
<path d="M82,282.2 Q77.6,282.79999999999995 77.5,287.59999999999997" fill="none" stroke="#111" stroke-width="1.1"/>
<polygon points="74.6,286.79999999999995 80.4,286.79999999999995 77.5,290.2" fill="#111"/>
<circle cx="85.7" cy="294.6" r="2.9" fill="#f4f4f4" stroke="#1c2c5c" stroke-width="1"/><circle cx="85.7" cy="294.6" r="0.8" fill="#1c2c5c"/>
<path d="M82,290.40000000000003 Q77.6,291.0 77.5,295.8" fill="none" stroke="#111" stroke-width="1.1"/>
<polygon points="74.6,295.0 80.4,295.0 77.5,298.40000000000003" fill="#111"/>
<rect x="50.6" y="307.6" width="13" height="13" fill="#1e8bff" stroke="#153a5c" stroke-width="0.9"/>
<path d="M56.4,308.1 L63.1,308.1 L63.1,313.6 L60.2,313.6 L60.2,315 L58,315 L58,313.6 L56.4,313.6 L56.4,311.8 L55,311.8 L55,309.8 L56.4,309.8 Z" fill="#fff"/>
<path d="M51.1,313.9 L55,313.9 L55,312.6 L57.2,312.6 L57.2,313.9 L58,313.9 L58,316 L59.4,316 L59.4,318 L58,318 L58,320.1 L51.1,320.1 Z" fill="#fff"/>
<path d="M9.100000000000001,343.5 L19.9,343.5 L19.9,332.70000000000005 Z" fill="url(#gTri)" stroke="#222" stroke-width="1" stroke-linejoin="round"/>
<path d="M31,338 Q35,332.6 39,332.6 Q43,332.6 47,338 Q43,343.4 39,343.4 Q35,343.4 31,338Z" fill="#9c9c9c"/><circle cx="39" cy="338" r="2.6" fill="none" stroke="#f0f0f0" stroke-width="1.3"/>
<path d="M56.1,331.7 L63.6,331.7 L65.1,333.5 L56.1,333.5 Z" fill="#9a9a9a"/><path d="M56.1,334.7 L65.4,334.7 L66.4,332.9 L71.9,332.9 L71.9,344.09999999999997 L56.1,344.09999999999997 Z" fill="#9a9a9a"/>
<path d="M49,362 Q53,356.6 57,356.6 Q61,356.6 65,362 Q61,367.4 57,367.4 Q53,367.4 49,362Z" fill="#dedede"/><circle cx="57" cy="362" r="2.6" fill="none" stroke="#f0f0f0" stroke-width="1.2"/><path d="M51,356 L63,368" stroke="#f0f0f0" stroke-width="2.6"/><path d="M51.5,355.5 L63.5,367.5" stroke="#dadada" stroke-width="1"/>
<path d="M75,354.8 L88,354.8 L88,362 M75,354.8 L75,367.8 L82.5,367.8" fill="none" stroke="#444" stroke-width="1" stroke-dasharray="2.6 1.6"/>
<rect x="74" y="353.8" width="2" height="2" fill="#1e8bff"/>
<rect x="87" y="353.8" width="2" height="2" fill="#1e8bff"/>
<rect x="74" y="366.8" width="2" height="2" fill="#1e8bff"/>
<path d="M82.6,368.6 L83.6,366 L87.6,362 L89.4,363.8 L85.4,367.8 Z" fill="#f5b642"/>
<path d="M87.6,362 L88.6,361.2 Q89.8,361 90.2,362.6 L89.4,363.8 Z" fill="#e8373a"/>
<path d="M82.4,369.2 L83.6,366 L85.4,367.8 Z" fill="#777"/>
<path d="M10.4,380.0 L10.4,392.4 L19.0,386.2 Z" fill="#ececec" stroke="#2e2e2e" stroke-width="1.5" stroke-linejoin="round"/>
<path d="M31,386 Q35,380.6 39,380.6 Q43,380.6 47,386 Q43,391.4 39,391.4 Q35,391.4 31,386Z" fill="#9c9c9c"/><circle cx="39" cy="386" r="2.6" fill="none" stroke="#f0f0f0" stroke-width="1.3"/>
<path d="M56.5,382.3 L60.0,378.40000000000003 L71.5,378.40000000000003 L71.5,389.40000000000003 L67.6,393.2 L56.5,393.2 Z" fill="#fff" stroke="#222" stroke-width="1.2" stroke-linejoin="round"/><rect x="57.7" y="383.2" width="9.3" height="8.8" fill="#d3d6de"/><path d="M68.1,382.8 L70.7,380.0 L70.7,389.0 L68.1,391.8 Z" fill="#e4e6ea"/><path d="M56.5,382.3 L67.6,382.3 L71.5,378.40000000000003 M67.6,382.3 L67.6,393.2" fill="none" stroke="#fff" stroke-width="0.6" opacity="0"/>
<path d="M10.4,404.0 L10.4,416.4 L19.0,410.2 Z" fill="#ececec" stroke="#2e2e2e" stroke-width="1.5" stroke-linejoin="round"/>
<path d="M31,410 Q35,404.6 39,404.6 Q43,404.6 47,410 Q43,415.4 39,415.4 Q35,415.4 31,410Z" fill="#9c9c9c"/><circle cx="39" cy="410" r="2.6" fill="none" stroke="#f0f0f0" stroke-width="1.3"/>
<path d="M56.5,406.3 L60.0,402.40000000000003 L71.5,402.40000000000003 L71.5,413.40000000000003 L67.6,417.2 L56.5,417.2 Z" fill="#fff" stroke="#222" stroke-width="1.2" stroke-linejoin="round"/><rect x="57.7" y="407.2" width="9.3" height="8.8" fill="#d3d6de"/><path d="M68.1,406.8 L70.7,404.0 L70.7,413.0 L68.1,415.8 Z" fill="#e4e6ea"/><path d="M56.5,406.3 L67.6,406.3 L71.5,402.40000000000003 M67.6,406.3 L67.6,417.2" fill="none" stroke="#fff" stroke-width="0.6" opacity="0"/>
<path d="M10.4,428.0 L10.4,440.4 L19.0,434.2 Z" fill="#ececec" stroke="#2e2e2e" stroke-width="1.5" stroke-linejoin="round"/>
<path d="M31,434 Q35,428.6 39,428.6 Q43,428.6 47,434 Q43,439.4 39,439.4 Q35,439.4 31,434Z" fill="#9c9c9c"/><circle cx="39" cy="434" r="2.6" fill="none" stroke="#f0f0f0" stroke-width="1.3"/>
<path d="M56.5,430.3 L60.0,426.40000000000003 L71.5,426.40000000000003 L71.5,437.40000000000003 L67.6,441.2 L56.5,441.2 Z" fill="#fff" stroke="#222" stroke-width="1.2" stroke-linejoin="round"/><rect x="57.7" y="431.2" width="9.3" height="8.8" fill="#d3d6de"/><path d="M68.1,430.8 L70.7,428.0 L70.7,437.0 L68.1,439.8 Z" fill="#e4e6ea"/><path d="M56.5,430.3 L67.6,430.3 L71.5,426.40000000000003 M67.6,430.3 L67.6,441.2" fill="none" stroke="#fff" stroke-width="0.6" opacity="0"/>
</svg>
<!--ENDBICONS--></div>
</div>

<!-- ===== MENU ===== -->
<div id="menu">
  <div class="abs" style="left:852px;top:76px;width:183px;height:227px;background:#fff;border:1px solid #7e7e7e;border-radius:2.5px;"></div>
  <div class="mi" id="mNew" style="top:83px;">New Component</div>
  <div class="mi" id="mJoint" style="top:105px;">Joint</div>
  <div class="mi" id="mAsb" style="top:127px;">As-built Joint</div>
  <div class="mi" id="mJO" style="top:149px;">Joint Origin</div>
  <div class="mi" id="mRG" style="top:171px;">Rigid Group</div>
  <div class="mi" id="mDJ" style="top:194px;">Drive Joints</div>
  <div class="mi" id="mML" style="top:216px;">Motion Link</div>
  <div class="mi" id="mECS" style="top:239px;">Enable Contact Sets</div>
  <div class="mi" id="mEAC" style="top:261px;">Enable All Contact</div>
  <div class="mi" id="mMS" style="top:283.5px;">Motion Study</div>
  <div class="mi" id="mKJ" style="left:973px;top:105px;">J</div>
  <div class="mi" id="mKSJ" style="left:973px;top:127px;">Shift+J</div>
  <div class="msep" style="top:189px;"></div>
  <div class="msep" style="top:234px;"></div>
  <div class="msep" style="top:279px;"></div>
  <div id="micons"><!--MICONS-->
<svg width="1231" height="567" viewBox="0 0 1231 567" style="left:0;top:0;">
<polygon points="858.32,85.65 860.17,83.56 866.1,83.56 864.37,85.65" fill="#8ecaf9" />
<polygon points="858.32,85.65 864.37,85.65 864.37,90.35 858.32,90.35" fill="#5ea6e3" />
<polygon points="864.37,85.65 866.1,83.56 866.1,88.86 864.37,90.35" fill="#4790cf" />
<polygon points="858.44,90.84 871.04,90.84 871.04,96.02 858.44,96.02" fill="#dcdcdc" />
<polygon points="864.86,90.59 866.35,89.11 872.02,89.11 871.04,90.59" fill="#f4f4f4" />
<polygon points="871.04,90.84 872.02,89.36 872.02,94.54 871.04,96.02" fill="#b9b9b9" />
<path d="M858.44,90.59 L858.44,96.27 L871.04,96.27 L872.15,94.67 L872.15,89.11 L866.35,89.11 L864.74,90.72 L864.74,96.27" fill="none" stroke="#5f5f5f" stroke-width="0.9"/>
<polygon points="869.8,80.96 870.53,83.4 872.77,82.19 871.56,84.43 874.0,85.16 871.56,85.89 872.77,88.13 870.53,86.92 869.8,89.36 869.07,86.92 866.83,88.13 868.04,85.89 865.6,85.16 868.04,84.43 866.83,82.19 869.07,83.4" fill="#fca400" />
<path d="M858.69,108.25 L861.65,104.17 L863.63,103.68 L865.36,104.42 L865.36,110.35 L863.38,111.33 L863.38,116.02 L859.93,118.49 L858.69,117.75 Z" fill="#cfcfcf" stroke="#5f5f5f" stroke-width="0.9" stroke-linejoin="round"/>
<path d="M861.65,104.42 L863.63,103.93 L865.11,104.67 L865.11,110.1 L863.38,111.09 L862.64,110.35 Z" fill="#e6e6e6" stroke="none" stroke-width="0" stroke-linejoin="round"/>
<path d="M869.8,104.42 L871.04,103.93 L873.75,107.14 L873.75,117.75 L872.52,118.49 L869.8,115.65 L867.33,115.04 L866.35,114.05 L866.35,110.35 L867.33,109.11 L869.8,109.48 Z" fill="#dadada" stroke="#5f5f5f" stroke-width="0.9" stroke-linejoin="round"/>
<path d="M862.89,111.09 L862.89,113.8 M868.57,107.38 L868.57,110.35" stroke="#1e8be8" stroke-width="1.2"/>
<path d="M860.42,129.85 L863.63,125.53 L865.85,124.91 L867.83,125.9 L870.54,128.86 L870.54,138.49 L868.81,139.73 L866.35,137.51 L866.35,134.17 L864.86,134.79 L864.86,137.51 L861.65,140.35 L860.42,139.48 Z" fill="#d2d2d2" stroke="#5f5f5f" stroke-width="0.9" stroke-linejoin="round"/>
<path d="M863.63,126.15 L865.85,125.41 L867.33,126.4 L867.33,132.32 L865.36,133.31 L864.37,132.32 Z" fill="#e8e8e8" stroke="none" stroke-width="0" stroke-linejoin="round"/>
<path d="M865.85,126.77 L865.85,133.56 M867.83,126.4 L867.83,136.02" stroke="#8a8a8a" stroke-width="0.7" fill="none"/>
<circle cx="865.9" cy="154.9" r="7.2" fill="#f2f2f2" stroke="#606060" stroke-width="1"/>
<path d="M860.6,155.4 L871.2,155.4 Q871,160.4 865.9,160.6 Q860.8,160.4 860.6,155.4 Z" fill="#fff" stroke="#555" stroke-width="0.9" stroke-linejoin="round"/>
<rect x="858.4" y="169.4" width="15.3" height="15.3" fill="#5ea9e6"/>
<path d="M866.1,169.68 L873.51,169.68 L873.51,176.35 L870.3,176.35 L870.3,177.58 L868.2,177.58 L868.2,176.35 L866.1,176.35 L866.1,174.25 L864.86,174.25 L864.86,172.15 L866.1,172.15 Z" fill="#fafafa" stroke="#444" stroke-width="0.9" stroke-linejoin="round"/>
<path d="M858.69,177.33 L863.88,177.33 L863.88,176.35 L865.85,176.35 L865.85,178.32 L867.09,178.32 L867.09,180.42 L865.85,180.42 L865.85,184.49 L858.69,184.49 Z" fill="#fafafa" stroke="#444" stroke-width="0.9" stroke-linejoin="round"/>
<path d="M858.69,196.47 L861.65,192.77 L863.63,192.15 L865.73,193.14 L867.58,196.47 L867.58,198.94 L865.73,198.32 L865.73,202.02 L863.88,202.02 L863.88,204.25 L859.93,207.58 L858.69,206.72 Z" fill="#d2d2d2" stroke="#5f5f5f" stroke-width="0.9" stroke-linejoin="round"/>
<path d="M861.65,193.38 L863.63,192.64 L865.36,193.63 L865.36,197.83 L863.88,198.57 L862.64,197.83 Z" fill="#e8e8e8" stroke="none" stroke-width="0" stroke-linejoin="round"/>
<path d="M864.51,202.77 L873.1099999999999,202.77 M868.81,198.47 L868.81,207.07000000000002" stroke="#333" stroke-width="1"/>
<polygon points="874.01,202.77 872.01,200.97 872.01,204.57000000000002" fill="#333" />
<polygon points="863.6099999999999,202.77 865.61,200.97 865.61,204.57000000000002" fill="#333" />
<polygon points="868.81,207.97 867.01,205.97 870.6099999999999,205.97" fill="#333" />
<polygon points="868.81,197.57000000000002 867.01,199.57 870.6099999999999,199.57" fill="#333" />
<circle cx="868.81" cy="202.77" r="1.2" fill="#333"/>
<circle cx="870.1" cy="217.8" r="3.4" fill="#f4f4f4" stroke="#444" stroke-width="0.9"/><circle cx="870.1" cy="217.8" r="1" fill="#444"/>
<path d="M865.4,214.9 Q860.8,215 860.2,219.6" fill="none" stroke="#333" stroke-width="1"/>
<polygon points="858.4,218.6 862.2,219.2 860,222.2" fill="#333" />
<rect x="858.4" y="224.2" width="10.6" height="4" fill="#f8f8f8" stroke="#444" stroke-width="0.9"/>
<path d="M869,226.2 L872,226.2" stroke="#333" stroke-width="1"/>
<polygon points="873.8,226.2 871.2,224.6 871.2,227.8" fill="#333" />
<rect x="858.2" y="237.2" width="6" height="15.7" fill="#5ea9e6"/>
<rect x="864.3" y="239.2" width="1.2" height="8" fill="#e02020"/>
<rect x="866.9" y="240.6" width="6.6" height="11.8" fill="#fafafa" stroke="#444" stroke-width="0.9"/>
<rect x="867.4" y="241.1" width="5.6" height="4.6" fill="#5ea9e6"/>
<path d="M866.9,245.9 L873.5,245.9" stroke="#444" stroke-width="0.9"/>
<path d="M858.5,259.4 L863.2,259.4 M867.8,259.4 L873.3,259.4 L873.3,273.4 L869,273.4 L869,267 M863.4,267 L863.4,273.4 L858.5,273.4 L858.5,259.4" fill="none" stroke="#555" stroke-width="1"/>
<rect x="864.9" y="258.6" width="1.2" height="6" fill="#e02020"/><rect x="861.8" y="264.9" width="7.4" height="1.2" fill="#e02020"/>
<path d="M859.2,285.2 L861,283.8 L864,283.8 L864,290 L862.4,291.2 L859.2,291.2 Z" fill="#f2f2f2" stroke="#777" stroke-width="0.7"/>
<path d="M862.4,285.2 L864.2,283.8 L867.4,283.8 L867.4,290 L865.6,291.2 L862.4,291.2 Z" fill="#e6e6e6" stroke="#777" stroke-width="0.7"/>
<path d="M865.8,285.6 L868,283.6 L872.6,283.6 L872.6,289.4 L870.4,291.4 L865.8,291.4 Z" fill="#c9c9c9" stroke="#555" stroke-width="0.8"/>
<path d="M857.8,296.4 L863.6,296.4 L866.6,293.8 L873.8,293.8" fill="none" stroke="#1e8be8" stroke-width="1"/>
<path d="M857.8,294.8 L862.6,294.8 L866,292.4 L869,292.4" fill="none" stroke="#e02020" stroke-width="1"/>
<path d="M868.6,292.4 L873.8,292.4" fill="none" stroke="#3cb44b" stroke-width="1"/>
</svg>
<!--ENDMICONS--></div>
</div>
</body>
</html>
